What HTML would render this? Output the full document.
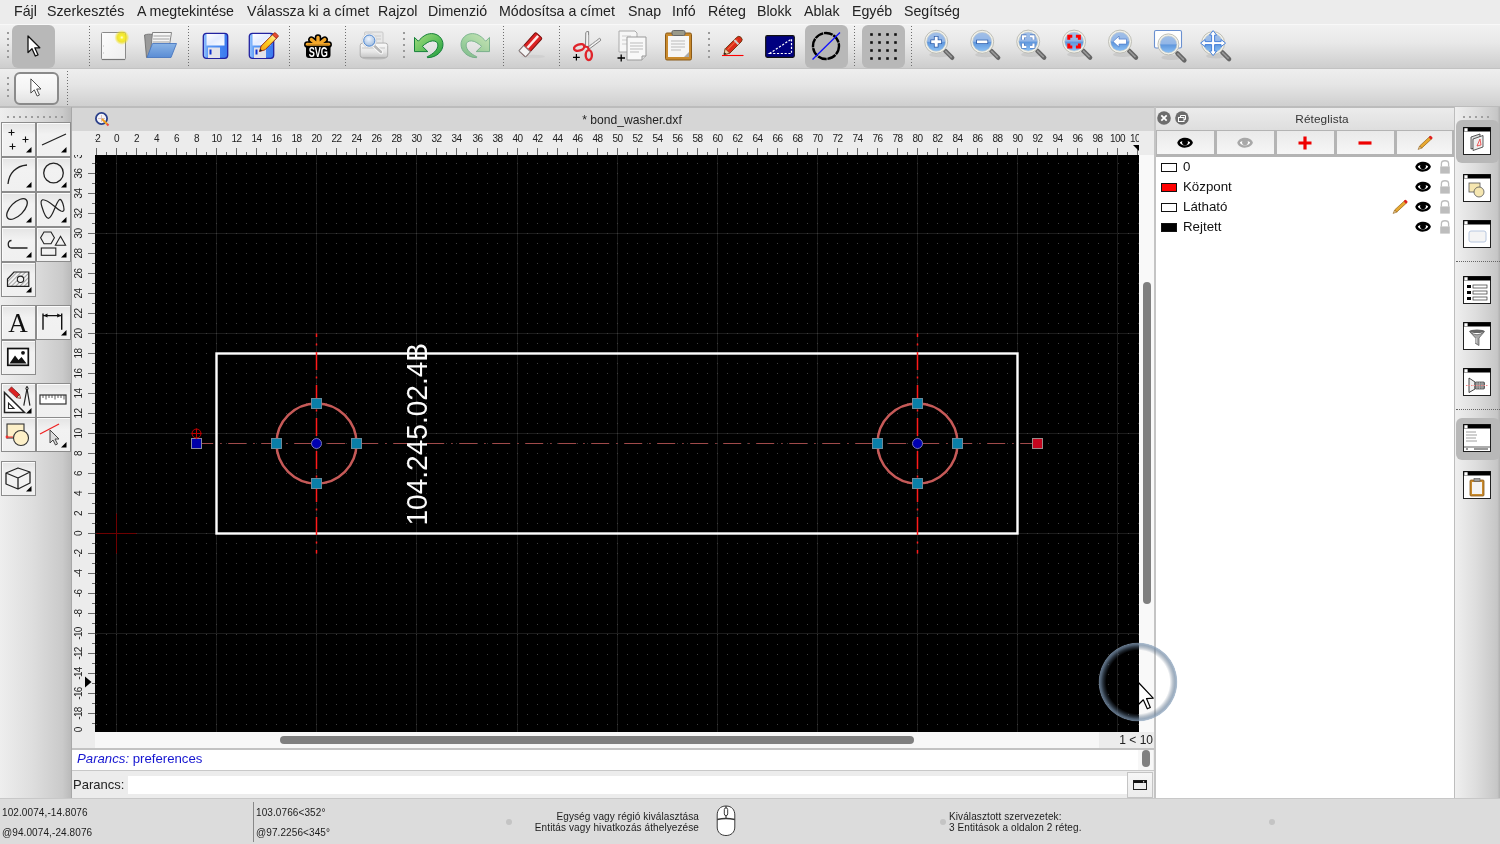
<!DOCTYPE html><html><head><meta charset="utf-8"><style>
*{margin:0;padding:0;box-sizing:border-box}
html,body{width:1500px;height:844px;overflow:hidden;will-change:transform;background:#ececec;font-family:"Liberation Sans",sans-serif;color:#222}
.a{position:absolute}
svg{position:absolute;overflow:visible}
.mb{left:0;top:0;width:1500px;height:24px;background:#ececec}
.mb span{position:absolute;top:2px;font-size:14.2px;line-height:18px;color:#222}
.tb1{left:0;top:24px;width:1500px;height:45px;background:linear-gradient(#f1f1f1,#e9e9e9 40%,#cdcdcd);border-top:1px solid #f8f8f8;border-bottom:1px solid #c2c2c2}
.tb2{left:0;top:69px;width:1500px;height:39px;background:linear-gradient(#eeeeee,#e6e6e6 40%,#cfcfcf);border-bottom:2px solid #bcbcbc}
.sep{position:absolute;width:1px;background:repeating-linear-gradient(#6e6e6e 0 1px,transparent 1px 3px)}
.grip{position:absolute;width:3px;}
.grip i{position:absolute;left:0;width:2px;height:2px;background:#9a9a9a}
.sel{position:absolute;background:#b8b8b8;border-radius:6px}

.ldock{left:0;top:108px;width:71px;height:690px;background:linear-gradient(90deg,#eeeeee,#dedede 45%,#cacaca 88%,#bababa)}
.lbtn{position:absolute;width:35px;height:35px;border:1px solid #8c8c8c;box-shadow:inset 1px 1px #fbfbfb;background:linear-gradient(#e4e4e4,#f2f2f2 35%,#f0f0f0)}
.mdi-t{left:72px;top:108px;width:1082px;height:23px;background:#d6d6d6}
</style></head><body><div class="a mb">
<span style="left:14px">Fájl</span>
<span style="left:47px">Szerkesztés</span>
<span style="left:137px">A megtekintése</span>
<span style="left:247px">Válassza ki a címet</span>
<span style="left:378px">Rajzol</span>
<span style="left:428px">Dimenzió</span>
<span style="left:499px">Módosítsa a címet</span>
<span style="left:628px">Snap</span>
<span style="left:672px">Infó</span>
<span style="left:708px">Réteg</span>
<span style="left:757px">Blokk</span>
<span style="left:804px">Ablak</span>
<span style="left:852px">Egyéb</span>
<span style="left:904px">Segítség</span>
</div>
<div class="a tb1"></div><div class="a tb2"></div>
<div class="grip" style="left:7px;top:32px;height:30px"><i style="top:0px"></i><i style="top:6px"></i><i style="top:12px"></i><i style="top:18px"></i><i style="top:24px"></i></div>
<div class="sel" style="left:12px;top:25px;width:43px;height:43px"></div>
<svg style="left:26.5px;top:34.5px" width="15" height="23" viewBox="0 0 15 23" ><path d="M1 1 L1 17.5 L5 13.8 L8.3 21 L11 19.8 L7.8 12.8 L12.8 12.8 Z" fill="#fff" stroke="#111" stroke-width="1.3" stroke-linejoin="round"/></svg>
<div class="sep" style="left:89px;top:26px;height:40px"></div>
<svg style="left:100px;top:31px" width="28" height="31" viewBox="0 0 28 31" ><defs><radialGradient id="glow"><stop offset="0" stop-color="#ffffe8"/><stop offset=".25" stop-color="#f8f030"/><stop offset=".6" stop-color="#eee020" stop-opacity=".9"/><stop offset="1" stop-color="#f0e020" stop-opacity="0"/></radialGradient>
<linearGradient id="pg" x1="0" y1="0" x2="1" y2="1"><stop offset="0" stop-color="#fdfdfd"/><stop offset="1" stop-color="#eeeeee"/></linearGradient></defs>
<rect x="1.5" y="1.5" width="24" height="27" rx="1" fill="url(#pg)" stroke="#8a8a8a"/><path d="M2 28.5 H25" stroke="#777" stroke-width="1.2"/><path d="M3 15 L4 15 M3 22 L4 22" stroke="#bbb"/><circle cx="21.8" cy="6.5" r="7.5" fill="url(#glow)"/></svg>
<svg style="left:143px;top:31px" width="34" height="29" viewBox="0 0 34 29" ><defs><linearGradient id="fo" x1="0" y1="0" x2="0" y2="1"><stop offset="0" stop-color="#8ab4e6"/><stop offset="1" stop-color="#5a8cd4"/></linearGradient></defs>
<path d="M1.5 4 C4 3 7 3 10 3.5 L9 23 L3.5 26.5 Z" fill="#9a9a9a" stroke="#666" stroke-width=".8"/><path d="M9.5 1.5 H28.5 L26.5 14 L7.5 22 Z" fill="#f6f6f6" stroke="#777" stroke-width=".9"/>
<path d="M10.5 5 H27 M10 8 H26.5 M9.5 11 H26" stroke="#bdbdbd" stroke-width="1.3"/><path d="M9.5 12.5 H33.5 L28 26.5 H4 Z" fill="url(#fo)" stroke="#4a78c0" stroke-width=".9"/></svg>
<div class="sep" style="left:188px;top:26px;height:40px"></div>
<svg style="left:202px;top:32px" width="28" height="28" viewBox="0 0 28 28" ><defs><linearGradient id="fl" x1="0" y1="0" x2="1" y2="0"><stop offset="0" stop-color="#9cc8ff"/><stop offset=".2" stop-color="#5a9af6"/><stop offset="1" stop-color="#3a78ee"/></linearGradient>
<linearGradient id="lb" x1="0" y1="0" x2="1" y2="1"><stop offset="0" stop-color="#ffffff"/><stop offset=".5" stop-color="#e4ecff"/><stop offset="1" stop-color="#fafcff"/></linearGradient></defs>
<rect x="1.3" y="1.3" width="24.4" height="25" rx="3" fill="url(#fl)" stroke="#2222a0" stroke-width="1.3"/><rect x="4.5" y="2" width="18" height="11.5" fill="url(#lb)"/>
<rect x="6" y="15.5" width="12" height="10.5" fill="#e2e2ea"/><rect x="7.5" y="17.5" width="2" height="5" fill="#1030d0"/></svg>
<svg style="left:248px;top:32px" width="32" height="28" viewBox="0 0 32 28" ><defs><linearGradient id="fl2" x1="0" y1="0" x2="1" y2="0"><stop offset="0" stop-color="#9cc8ff"/><stop offset=".2" stop-color="#5a9af6"/><stop offset="1" stop-color="#3a78ee"/></linearGradient>
<linearGradient id="lb2" x1="0" y1="0" x2="1" y2="1"><stop offset="0" stop-color="#ffffff"/><stop offset=".5" stop-color="#e4ecff"/><stop offset="1" stop-color="#fafcff"/></linearGradient></defs>
<rect x="1.3" y="1.3" width="24.4" height="25" rx="3" fill="url(#fl2)" stroke="#2222a0" stroke-width="1.3"/><rect x="4.5" y="2" width="18" height="11.5" fill="url(#lb2)"/>
<rect x="6" y="15.5" width="12" height="10.5" fill="#e2e2ea"/><rect x="7.5" y="17.5" width="2" height="5" fill="#1030d0"/><defs><linearGradient id="pe" x1="0" y1="0" x2="1" y2="0"><stop offset="0" stop-color="#f59a10"/><stop offset=".6" stop-color="#ffd020"/><stop offset="1" stop-color="#fff0a0"/></linearGradient></defs>
<g transform="translate(11.5 19.5) rotate(-45)"><path d="M0 0 L5 -2.7 H22 V2.7 H5 Z" fill="url(#pe)" stroke="#9a2a10" stroke-width=".9"/><path d="M0 0 L2.5 -1.3 V1.3 Z" fill="#222"/><rect x="21" y="-2.7" width="3.5" height="5.4" rx="1" fill="#e84a30" stroke="#9a2a10" stroke-width=".8"/></g></svg>
<div class="sep" style="left:289px;top:26px;height:40px"></div>
<svg style="left:305px;top:33px" width="27" height="26" viewBox="0 0 27 26" ><g stroke-linecap="round"><path d="M13 12 L13 4.4 M13 12 L6.4 6.6 M13 12 L19.7 6.6 M13 12 L2.3 11.4 M13 12 L23.7 11.4" stroke="#000" stroke-width="6.5"/>
<path d="M13 12 L13 4.4 M13 12 L6.4 6.6 M13 12 L19.7 6.6 M13 12 L2.3 11.4 M13 12 L23.7 11.4" stroke="#f5a82a" stroke-width="3.4"/></g>
<rect x="1" y="11.5" width="24.5" height="13.5" rx="3" fill="#000"/><path d="M2 12 H24.5" stroke="#f5a82a" stroke-width="1.4"/>
<text x="0" y="0" transform="translate(13.3 24) scale(0.66 1)" text-anchor="middle" font-family="Liberation Sans" font-weight="bold" font-size="13.8" fill="#fff">SVG</text></svg>
<div class="sep" style="left:345px;top:26px;height:40px"></div>
<svg style="left:359px;top:31px" width="30" height="29" viewBox="0 0 30 29" ><defs><linearGradient id="pr" x1="0" y1="0" x2="0" y2="1"><stop offset="0" stop-color="#fbfbfb"/><stop offset=".6" stop-color="#e6e6e6"/><stop offset="1" stop-color="#c4c4c4"/></linearGradient>
<radialGradient id="lens2" cx=".45" cy=".35" r=".7"><stop offset="0" stop-color="#f0f6ff"/><stop offset="1" stop-color="#9ab8dc"/></radialGradient></defs>
<ellipse cx="15" cy="27.3" rx="12" ry="1.2" fill="#aaa" opacity=".6"/>
<rect x="5.6" y="1" width="18.4" height="13" rx="1" fill="#e8e8e8" stroke="#c8c8c8"/><path d="M13 5 H22 M13 8 H22" stroke="#ccc"/>
<rect x="1.2" y="12.1" width="27.5" height="14.6" rx="2.5" fill="url(#pr)" stroke="#a8a8a8" stroke-width=".9"/><path d="M3 17 H26" stroke="#bbb" stroke-width=".8"/>
<path d="M15 14.5 L22 21" stroke="#fff" stroke-width="4.4" stroke-linecap="round"/><path d="M15 14.5 L22 21" stroke="#b8b8b8" stroke-width="2.6" stroke-linecap="round"/>
<circle cx="10.3" cy="9.6" r="7.3" fill="#f4f4f4" stroke="#d0d0d0" stroke-width=".8"/><circle cx="10.3" cy="9.6" r="5.6" fill="url(#lens2)" stroke="#4a84d0" stroke-width="1"/></svg>
<div class="grip" style="left:403px;top:32px;height:30px"><i style="top:0px"></i><i style="top:6px"></i><i style="top:12px"></i><i style="top:18px"></i><i style="top:24px"></i></div>
<svg style="left:413px;top:32px" width="31" height="28" viewBox="0 0 31 28" ><defs><linearGradient id="ug" x1="0" y1="0" x2="1" y2="1"><stop offset="0" stop-color="#a6dc80"/><stop offset=".55" stop-color="#5cbf5a"/><stop offset="1" stop-color="#1f9a3c"/></linearGradient></defs>
<path d="M1.5 5.4 L5.3 9.2 C9 5 13 1.6 18.6 1.6 C25 1.6 30 6.5 30 12.4 C30 19 24 25.5 14.5 25.7 L14.2 24.8 C20 22 24.9 18 24.9 13 C24.9 10 22.5 8.9 19.5 8.9 C16 8.9 12 12 9.4 14.3 L14.8 19.6 L1.5 19.6 Z" fill="url(#ug)" stroke="#15803a" stroke-width="1" stroke-linejoin="round"/></svg>
<svg style="left:460px;top:32px" width="31" height="28" viewBox="0 0 31 28" ><g transform="translate(31,0) scale(-1,1)" opacity="0.5"><defs><linearGradient id="ug2" x1="0" y1="0" x2="1" y2="1"><stop offset="0" stop-color="#a6dc80"/><stop offset=".55" stop-color="#5cbf5a"/><stop offset="1" stop-color="#1f9a3c"/></linearGradient></defs>
<path d="M1.5 5.4 L5.3 9.2 C9 5 13 1.6 18.6 1.6 C25 1.6 30 6.5 30 12.4 C30 19 24 25.5 14.5 25.7 L14.2 24.8 C20 22 24.9 18 24.9 13 C24.9 10 22.5 8.9 19.5 8.9 C16 8.9 12 12 9.4 14.3 L14.8 19.6 L1.5 19.6 Z" fill="url(#ug2)" stroke="#15803a" stroke-width="1" stroke-linejoin="round"/></g></svg>
<div class="sep" style="left:503px;top:26px;height:40px"></div>
<svg style="left:516px;top:32px" width="30" height="28" viewBox="0 0 30 28" ><ellipse cx="17" cy="24.5" rx="12" ry="1.8" fill="#d0d0d0"/><g transform="rotate(-48 14 14)"><rect x="3" y="9" width="25" height="9" rx="1.5" fill="#d22" stroke="#7a1010"/>
<rect x="3" y="9" width="7" height="9" fill="#f4f4f4" stroke="#888"/><rect x="11" y="12" width="16" height="2.5" fill="#fff" opacity=".9"/></g></svg>
<div class="sep" style="left:559px;top:26px;height:40px"></div>
<svg style="left:571px;top:30px" width="32" height="32" viewBox="0 0 32 32" ><path d="M14.5 16.5 L14.8 2.5 Q15.5 1.2 17.6 1.6 L17.6 17 Z" fill="#f4f4f4" stroke="#666" stroke-width=".8"/><path d="M16.5 17.5 L28.6 8.2 Q29.8 8.8 29.6 10.5 L17.5 19.5 Z" fill="#f4f4f4" stroke="#666" stroke-width=".8"/>
<path d="M17.6 5 V16 M19 15 L28.5 9" stroke="#bbb" stroke-width=".7"/>
<ellipse cx="8.2" cy="17.5" rx="5.3" ry="3.1" fill="none" stroke="#e0242b" stroke-width="2.4" transform="rotate(-18 8.2 17.5)"/><path d="M12.5 16.5 L17 17" stroke="#e0242b" stroke-width="2.2"/>
<ellipse cx="17.8" cy="25.1" rx="3.1" ry="5" fill="none" stroke="#e0242b" stroke-width="2.4"/><path d="M17 17 L17.8 20" stroke="#e0242b" stroke-width="2.2"/>
<path d="M2 27.3 H8.8 M5.4 24 V30.6" stroke="#000" stroke-width="1.2"/></svg>
<svg style="left:617px;top:30px" width="32" height="32" viewBox="0 0 32 32" ><path d="M2 1 H18 L20 3 V22 H2 Z" fill="#f6f6f6" stroke="#aaa"/><path d="M5 6 H14 M5 10 H14 M5 14 H14" stroke="#ccc"/>
<path d="M10 7 H29 V26 L25 30 H10 Z" fill="#f8f8f8" stroke="#999"/><path d="M13 13 H26 M13 16 H26 M13 19 H26 M13 22 H22" stroke="#bbb"/><path d="M25 30 V26 H29" fill="#ddd" stroke="#999"/>
<path d="M0.5 28 H8 M4.2 24.5 V31.5" stroke="#000" stroke-width="1.3"/></svg>
<svg style="left:664px;top:29px" width="30" height="33" viewBox="0 0 30 33" ><rect x="1.5" y="4" width="26" height="27" rx="1.5" fill="#c98a2d" stroke="#8a5a18"/><rect x="4" y="7" width="21" height="21" fill="#f6f6f6"/>
<path d="M7 12 H21 M7 15 H21 M7 18 H21 M7 21 H17" stroke="#bbb"/><path d="M20 28 L25 23 V28 Z" fill="#aaa"/><rect x="8" y="1.5" width="13" height="5" rx="1.5" fill="#9a9a8a" stroke="#666"/></svg>
<div class="grip" style="left:708px;top:32px;height:30px"><i style="top:0px"></i><i style="top:6px"></i><i style="top:12px"></i><i style="top:18px"></i><i style="top:24px"></i></div>
<svg style="left:721px;top:34px" width="26" height="24" viewBox="0 0 26 24" ><path d="M1 21.5 H22.5" stroke="#f00" stroke-width="1.1"/><g transform="translate(3 20.5) rotate(-45)"><path d="M0 0 L5 -3.2 H21 A3.2 3.2 0 0 1 21 3.2 H5 Z" fill="#dc2a1a" stroke="#6a3a10" stroke-width=".9"/>
<path d="M6 -1 H20" stroke="#f06a3a" stroke-width="1.2"/><rect x="16.5" y="-3" width="2" height="6" fill="#cfcfcf"/><path d="M0 0 L5 -3.2 V3.2 Z" fill="#f2d2a8" stroke="#6a3a10" stroke-width=".6"/><path d="M0 0 L2 -1.2 V1.2 Z" fill="#111"/></g></svg>
<svg style="left:765px;top:35px" width="30" height="23" viewBox="0 0 30 23" ><rect x="0.7" y="0.7" width="28.6" height="21.6" rx="1.5" fill="#000080" stroke="#111" stroke-width="1.2"/><path d="M4.5 18.5 L26.5 4 L26.5 18.5 Z" fill="none" stroke="#fff" stroke-width="1.2" stroke-dasharray="2.2 1.6"/></svg>
<div class="sel" style="left:805px;top:25px;width:43px;height:43px"></div>
<svg style="left:805px;top:25px" width="43" height="43" viewBox="0 0 43 43" ><circle cx="21" cy="21" r="13" fill="none" stroke="#000" stroke-width="2.4" stroke-dasharray="9 0.8"/><path d="M7.5 34.5 L35 7.5" stroke="#1010ff" stroke-width="1.3"/></svg>
<div class="sep" style="left:854px;top:26px;height:40px"></div>
<div class="sel" style="left:862px;top:25px;width:43px;height:43px"></div>
<svg style="left:862px;top:25px" width="43" height="43" viewBox="0 0 43 43" ><rect x="8.2" y="8.2" width="2.6" height="2.6" fill="#111"/><rect x="8.2" y="16.2" width="2.6" height="2.6" fill="#111"/><rect x="8.2" y="24.2" width="2.6" height="2.6" fill="#111"/><rect x="8.2" y="32.2" width="2.6" height="2.6" fill="#111"/><rect x="16.2" y="8.2" width="2.6" height="2.6" fill="#111"/><rect x="16.2" y="16.2" width="2.6" height="2.6" fill="#111"/><rect x="16.2" y="24.2" width="2.6" height="2.6" fill="#111"/><rect x="16.2" y="32.2" width="2.6" height="2.6" fill="#111"/><rect x="24.2" y="8.2" width="2.6" height="2.6" fill="#111"/><rect x="24.2" y="16.2" width="2.6" height="2.6" fill="#111"/><rect x="24.2" y="24.2" width="2.6" height="2.6" fill="#111"/><rect x="24.2" y="32.2" width="2.6" height="2.6" fill="#111"/><rect x="32.2" y="8.2" width="2.6" height="2.6" fill="#111"/><rect x="32.2" y="16.2" width="2.6" height="2.6" fill="#111"/><rect x="32.2" y="24.2" width="2.6" height="2.6" fill="#111"/><rect x="32.2" y="32.2" width="2.6" height="2.6" fill="#111"/></svg>
<div class="sep" style="left:911px;top:26px;height:40px"></div>
<svg style="left:0;top:0" width="1500" height="70" viewBox="0 0 1500 70"><defs><linearGradient id="lg" x1="0" y1="0" x2="0" y2="1"><stop offset="0" stop-color="#8eb2e2"/><stop offset=".48" stop-color="#7aa6e2"/><stop offset=".52" stop-color="#5e96dc"/><stop offset="1" stop-color="#8cc0f4"/></linearGradient></defs><g transform="translate(936.2 41.8)"><ellipse cx="3" cy="13" rx="10" ry="2.5" fill="#999" opacity=".25"/><path d="M9 9 L16 16" stroke="#666" stroke-width="4.4" stroke-linecap="round"/><path d="M9.5 9.5 L15.5 15.5" stroke="#9a9a9a" stroke-width="1.6" stroke-linecap="round" stroke-dasharray="1.2 1"/>
<circle r="11.5" fill="#f2f2ea" stroke="#b8b8b0" stroke-width=".9"/><circle r="9.5" fill="url(#lg)" stroke="#c8c8c0" stroke-width=".5"/><path d="M-9.5 0 A9.5 9.5 0 0 1 9.5 0 Z" fill="#fff" opacity=".18"/><path d="M-5.8 0 H5.8 M0 -5.8 V5.8" stroke="#2a5aa8" stroke-width="4.6"/><path d="M-5 0 H5 M0 -5 V5" stroke="#fff" stroke-width="3"/></g><g transform="translate(982.2 41.8)"><ellipse cx="3" cy="13" rx="10" ry="2.5" fill="#999" opacity=".25"/><path d="M9 9 L16 16" stroke="#666" stroke-width="4.4" stroke-linecap="round"/><path d="M9.5 9.5 L15.5 15.5" stroke="#9a9a9a" stroke-width="1.6" stroke-linecap="round" stroke-dasharray="1.2 1"/>
<circle r="11.5" fill="#f2f2ea" stroke="#b8b8b0" stroke-width=".9"/><circle r="9.5" fill="url(#lg)" stroke="#c8c8c0" stroke-width=".5"/><path d="M-9.5 0 A9.5 9.5 0 0 1 9.5 0 Z" fill="#fff" opacity=".18"/><path d="M-6 0 H6" stroke="#2a5aa8" stroke-width="4.2"/><path d="M-5.2 0 H5.2" stroke="#fff" stroke-width="2.8"/></g><g transform="translate(1028.2 41.6)"><ellipse cx="3" cy="13" rx="10" ry="2.5" fill="#999" opacity=".25"/><path d="M9 9 L16 16" stroke="#666" stroke-width="4.4" stroke-linecap="round"/><path d="M9.5 9.5 L15.5 15.5" stroke="#9a9a9a" stroke-width="1.6" stroke-linecap="round" stroke-dasharray="1.2 1"/>
<circle r="11.5" fill="#f2f2ea" stroke="#b8b8b0" stroke-width=".9"/><circle r="9.5" fill="url(#lg)" stroke="#c8c8c0" stroke-width=".5"/><path d="M-9.5 0 A9.5 9.5 0 0 1 9.5 0 Z" fill="#fff" opacity=".18"/><path d="M-5.3 -1.8 V-5.3 H-1.8 M1.8 -5.3 H5.3 V-1.8 M5.3 1.8 V5.3 H1.8 M-1.8 5.3 H-5.3 V1.8" stroke="#3a6ab8" stroke-width="3.4" fill="none"/><path d="M-5.3 -1.8 V-5.3 H-1.8 M1.8 -5.3 H5.3 V-1.8 M5.3 1.8 V5.3 H1.8 M-1.8 5.3 H-5.3 V1.8" stroke="#fff" stroke-width="2.2" fill="none"/></g><g transform="translate(1074.1 41.6)"><ellipse cx="3" cy="13" rx="10" ry="2.5" fill="#999" opacity=".25"/><path d="M9 9 L16 16" stroke="#666" stroke-width="4.4" stroke-linecap="round"/><path d="M9.5 9.5 L15.5 15.5" stroke="#9a9a9a" stroke-width="1.6" stroke-linecap="round" stroke-dasharray="1.2 1"/>
<circle r="11.5" fill="#f2f2ea" stroke="#b8b8b0" stroke-width=".9"/><circle r="9.5" fill="url(#lg)" stroke="#c8c8c0" stroke-width=".5"/><path d="M-9.5 0 A9.5 9.5 0 0 1 9.5 0 Z" fill="#fff" opacity=".18"/><path d="M-5.3 -1.8 V-5.3 H-1.8 M1.8 -5.3 H5.3 V-1.8 M5.3 1.8 V5.3 H1.8 M-1.8 5.3 H-5.3 V1.8" stroke="#f00" stroke-width="3" fill="none"/></g><g transform="translate(1120 41.6)"><ellipse cx="3" cy="13" rx="10" ry="2.5" fill="#999" opacity=".25"/><path d="M9 9 L16 16" stroke="#666" stroke-width="4.4" stroke-linecap="round"/><path d="M9.5 9.5 L15.5 15.5" stroke="#9a9a9a" stroke-width="1.6" stroke-linecap="round" stroke-dasharray="1.2 1"/>
<circle r="11.5" fill="#f2f2ea" stroke="#b8b8b0" stroke-width=".9"/><circle r="9.5" fill="url(#lg)" stroke="#c8c8c0" stroke-width=".5"/><path d="M-9.5 0 A9.5 9.5 0 0 1 9.5 0 Z" fill="#fff" opacity=".18"/><path d="M-7 0 L-1 -5.5 V-2.5 H6.5 V2.5 H-1 V5.5 Z" fill="#fff" stroke="#4a7ac8" stroke-width=".7"/></g><rect x="1154.5" y="30.5" width="27" height="17.5" rx="1.5" fill="#fff" stroke="#6a90d0" stroke-width="1.1"/><g transform="translate(1168.4 44.4)"><ellipse cx="3" cy="13" rx="10" ry="2.5" fill="#999" opacity=".25"/><path d="M9 9 L16 16" stroke="#666" stroke-width="4.4" stroke-linecap="round"/><path d="M9.5 9.5 L15.5 15.5" stroke="#9a9a9a" stroke-width="1.6" stroke-linecap="round" stroke-dasharray="1.2 1"/>
<circle r="10.5" fill="#f2f2ea" stroke="#b8b8b0" stroke-width=".9"/><circle r="8.5" fill="url(#lg)" stroke="#c8c8c0" stroke-width=".5"/><path d="M-8.5 0 A8.5 8.5 0 0 1 8.5 0 Z" fill="#fff" opacity=".18"/></g><g transform="translate(1213.1 43.1)"><ellipse cx="3" cy="13" rx="10" ry="2.5" fill="#999" opacity=".25"/><path d="M9 9 L16 16" stroke="#666" stroke-width="4.4" stroke-linecap="round"/><path d="M9.5 9.5 L15.5 15.5" stroke="#9a9a9a" stroke-width="1.6" stroke-linecap="round" stroke-dasharray="1.2 1"/>
<circle r="11.5" fill="#f2f2ea" stroke="#b8b8b0" stroke-width=".9"/><circle r="9.5" fill="url(#lg)" stroke="#c8c8c0" stroke-width=".5"/><path d="M-9.5 0 A9.5 9.5 0 0 1 9.5 0 Z" fill="#fff" opacity=".18"/><path d="M0 -12.5 L-3.5 -8 H-1.5 V-1.5 H-8 V-3.5 L-12.5 0 L-8 3.5 V1.5 H-1.5 V8 H-3.5 L0 12.5 L3.5 8 H1.5 V1.5 H8 V3.5 L12.5 0 L8 -3.5 V-1.5 H1.5 V-8 H3.5 Z" fill="#fff" stroke="#3a78d8" stroke-width=".9" stroke-linejoin="round"/></g></svg>
<div class="grip" style="left:7px;top:77px;height:24px"><i style="top:0px"></i><i style="top:6px"></i><i style="top:12px"></i><i style="top:18px"></i></div>
<div class="a" style="left:14px;top:72px;width:45px;height:33px;border:2px solid #8a8a8a;border-radius:6px;background:linear-gradient(#fbfbfb,#f4f4f4 50%,#e2e2e2)"></div>
<svg style="left:29.5px;top:78px" width="15" height="23" viewBox="0 0 15 23" ><g transform="scale(0.86)"><path d="M1 1 L1 17.5 L5 13.8 L8.3 21 L11 19.8 L7.8 12.8 L12.8 12.8 Z" fill="#fff" stroke="#444" stroke-width="1.1" stroke-linejoin="round"/></g></svg>
<div class="sep" style="left:67px;top:71px;height:34px"></div>
<div class="a ldock"></div>
<div class="a" style="left:71px;top:107px;width:1px;height:691px;background:#a8a8a8"></div>
<div class="a" style="left:7px;top:116px;width:2px;height:2px;background:#9c9c9c"></div>
<div class="a" style="left:13px;top:116px;width:2px;height:2px;background:#9c9c9c"></div>
<div class="a" style="left:19px;top:116px;width:2px;height:2px;background:#9c9c9c"></div>
<div class="a" style="left:25px;top:116px;width:2px;height:2px;background:#9c9c9c"></div>
<div class="a" style="left:31px;top:116px;width:2px;height:2px;background:#9c9c9c"></div>
<div class="a" style="left:37px;top:116px;width:2px;height:2px;background:#9c9c9c"></div>
<div class="a" style="left:43px;top:116px;width:2px;height:2px;background:#9c9c9c"></div>
<div class="a" style="left:49px;top:116px;width:2px;height:2px;background:#9c9c9c"></div>
<div class="a" style="left:55px;top:116px;width:2px;height:2px;background:#9c9c9c"></div>
<div class="a" style="left:61px;top:116px;width:2px;height:2px;background:#9c9c9c"></div>
<div class="lbtn" style="left:1px;top:122px"></div><svg style="left:1px;top:122px" width="35" height="35" viewBox="0 0 35 35" ><path d="M7.5 10.5 H13.5 M10.5 7.5 V13.5 M21.5 17.5 H27.5 M24.5 14.5 V20.5 M8.5 24.5 H14.5 M11.5 21.5 V27.5" stroke="#111" stroke-width="1.1"/><path d="M30.5 25 L30.5 30.5 L25 30.5 Z" fill="#000"/></svg>
<div class="lbtn" style="left:36px;top:122px"></div><svg style="left:36px;top:122px" width="35" height="35" viewBox="0 0 35 35" ><path d="M6 23 L30 12" stroke="#222" stroke-width="1.3"/><path d="M30.5 25 L30.5 30.5 L25 30.5 Z" fill="#000"/></svg>
<div class="lbtn" style="left:1px;top:157px"></div><svg style="left:1px;top:157px" width="35" height="35" viewBox="0 0 35 35" ><path d="M7 27 C8 16 15 9 26 8" fill="none" stroke="#222" stroke-width="1.3"/><path d="M30.5 25 L30.5 30.5 L25 30.5 Z" fill="#000"/></svg>
<div class="lbtn" style="left:36px;top:157px"></div><svg style="left:36px;top:157px" width="35" height="35" viewBox="0 0 35 35" ><circle cx="17.5" cy="16" r="9.8" fill="none" stroke="#222" stroke-width="1.3"/><path d="M30.5 25 L30.5 30.5 L25 30.5 Z" fill="#000"/></svg>
<div class="lbtn" style="left:1px;top:192px"></div><svg style="left:1px;top:192px" width="35" height="35" viewBox="0 0 35 35" ><ellipse cx="16" cy="17" rx="13" ry="6.5" transform="rotate(-45 16 17)" fill="none" stroke="#222" stroke-width="1.3"/><path d="M30.5 25 L30.5 30.5 L25 30.5 Z" fill="#000"/></svg>
<div class="lbtn" style="left:36px;top:192px"></div><svg style="left:36px;top:192px" width="35" height="35" viewBox="0 0 35 35" ><path d="M6.5 7.8 C4.5 8.5 5 12 6 15 C7.5 20 9.5 26.3 12.4 26.3 C15 26.3 17.5 19.5 19.3 15 C21 11 22.5 7.3 24 7.3 C26 7.3 28 14.5 28 17.5 C28 19.5 26.5 19.6 25 19 C22 17.5 19.3 15 19.3 15 C15 11.5 10 7 6.5 7.8 Z" fill="none" stroke="#222" stroke-width="1.2"/><path d="M30.5 25 L30.5 30.5 L25 30.5 Z" fill="#000"/></svg>
<div class="lbtn" style="left:1px;top:227px"></div><svg style="left:1px;top:227px" width="35" height="35" viewBox="0 0 35 35" ><path d="M10.5 13.5 C6 13.5 6.3 21 10.5 21 H26.5" fill="none" stroke="#222" stroke-width="1.3"/><path d="M30.5 25 L30.5 30.5 L25 30.5 Z" fill="#000"/></svg>
<div class="lbtn" style="left:36px;top:227px"></div><svg style="left:36px;top:227px" width="35" height="35" viewBox="0 0 35 35" ><path d="M8 5 H15 L18.4 10.8 L15 16.7 H8 L4.6 10.8 Z" fill="none" stroke="#222" stroke-width="1.1"/><path d="M24.5 9.3 L29.6 18.3 H19.4 Z" fill="none" stroke="#222" stroke-width="1.1"/><rect x="5.3" y="21" width="14.5" height="7.3" fill="none" stroke="#222" stroke-width="1.1"/><path d="M30.5 25 L30.5 30.5 L25 30.5 Z" fill="#000"/></svg>
<div class="lbtn" style="left:1px;top:262px"></div><svg style="left:1px;top:262px" width="35" height="35" viewBox="0 0 35 35" ><defs><pattern id="hp" width="3" height="3" patternUnits="userSpaceOnUse" patternTransform="rotate(45)"><path d="M0 0 V3" stroke="#333" stroke-width=".8"/></pattern></defs>
<path d="M6.5 17 L13 10 H27.8 V24.3 H6.5 Z" fill="url(#hp)" stroke="#222" stroke-width="1.2"/><circle cx="19.5" cy="17.3" r="3.2" fill="#f0f0f0" stroke="#222" stroke-width="1.1"/><path d="M30.5 25 L30.5 30.5 L25 30.5 Z" fill="#000"/></svg>
<div class="lbtn" style="left:1px;top:305px"></div><svg style="left:1px;top:305px" width="35" height="35" viewBox="0 0 35 35" ><text x="17" y="27" text-anchor="middle" font-family="Liberation Serif" font-size="27" fill="#111">A</text></svg>
<div class="lbtn" style="left:36px;top:305px"></div><svg style="left:36px;top:305px" width="35" height="35" viewBox="0 0 35 35" ><path d="M7 8.6 V24.8 M25.7 8.6 V24.8 M7.5 10.6 H25.2" stroke="#111" stroke-width="1.4"/><path d="M7.5 10.6 L11.5 8.6 V12.6 Z M25.2 10.6 L21.2 8.6 V12.6 Z" fill="#111"/><path d="M30.5 25 L30.5 30.5 L25 30.5 Z" fill="#000"/></svg>
<div class="lbtn" style="left:1px;top:340px"></div><svg style="left:1px;top:340px" width="35" height="35" viewBox="0 0 35 35" ><rect x="6.8" y="8.5" width="20.5" height="16.8" fill="#fff" stroke="#111" stroke-width="1.7"/><path d="M8.5 23.5 L14 15.5 L17.5 20 L20.5 17 L25.5 23.5 Z" fill="#111"/><circle cx="22" cy="12.8" r="1.9" fill="#111"/></svg>
<div class="lbtn" style="left:1px;top:383px"></div><svg style="left:1px;top:383px" width="35" height="35" viewBox="0 0 35 35" ><path d="M3.5 29.4 L3.5 9.5 L23.5 29.4 Z" fill="#fff" stroke="#222" stroke-width="1.5"/><path d="M7.5 25.5 V20 L13 25.5 Z" fill="none" stroke="#222" stroke-width="1.1"/>
<g transform="translate(9 5.5) rotate(43)"><rect x="0" y="-2.2" width="11" height="4.4" fill="#d22" stroke="#611" stroke-width=".7"/><path d="M11 -2.2 L14.5 0 L11 2.2 Z" fill="#eec" stroke="#611" stroke-width=".7"/></g>
<path d="M26 5.5 L22.8 22.7 M26 5.5 L28.9 22.7 M26 3 V5" stroke="#222" stroke-width="1.2" fill="none"/><circle cx="26" cy="5.5" r="1.3" fill="none" stroke="#222" stroke-width=".9"/><path d="M30.5 25 L30.5 30.5 L25 30.5 Z" fill="#000"/></svg>
<div class="lbtn" style="left:36px;top:383px"></div><svg style="left:36px;top:383px" width="35" height="35" viewBox="0 0 35 35" ><rect x="4" y="12" width="26" height="9" fill="#fff" stroke="#333" stroke-width="1.2"/><path d="M7 12 V15 M10 12 V16.5 M13 12 V15 M16 12 V15 M19 12 V16.5 M22 12 V15 M25 12 V15 M28 12 V16.5" stroke="#333" stroke-width=".8"/></svg>
<div class="lbtn" style="left:1px;top:417px"></div><svg style="left:1px;top:417px" width="35" height="35" viewBox="0 0 35 35" ><rect x="6" y="7" width="17" height="14" fill="#fdf0c8" stroke="#333" stroke-width="1.1"/><circle cx="20" cy="21" r="7.5" fill="#fdf0c8" stroke="#333" stroke-width="1.1"/><circle cx="6" cy="20" r="1.4" fill="#e33"/><path d="M6 20 H12" stroke="#e33"/></svg>
<div class="lbtn" style="left:36px;top:417px"></div><svg style="left:36px;top:417px" width="35" height="35" viewBox="0 0 35 35" ><path d="M4 17 L23 7" stroke="#e22" stroke-width="1.3"/><path d="M14 13 L14 26 L17 23 L19.5 28 L21.5 27 L19 22 L23 22 Z" fill="#ddd" stroke="#444" stroke-width="1"/><path d="M30.5 25 L30.5 30.5 L25 30.5 Z" fill="#000"/></svg>
<div class="lbtn" style="left:1px;top:461px"></div><svg style="left:1px;top:461px" width="35" height="35" viewBox="0 0 35 35" ><path d="M5 12 L17 7 L29 11 L29 22 L17 28 L5 23 Z M5 12 L17 17 L29 11 M17 17 V28" fill="none" stroke="#222" stroke-width="1.3" stroke-linejoin="round"/><path d="M30.5 25 L30.5 30.5 L25 30.5 Z" fill="#000"/></svg>
<div class="a mdi-t"></div>
<svg style="left:95px;top:112px" width="14" height="14" viewBox="0 0 14 14" ><circle cx="6.5" cy="6.5" r="5.6" fill="#f4f4f8" stroke="#2a3f8a" stroke-width="1.8"/><path d="M3 6.5 H10 M6.5 3 V10" stroke="#caa" stroke-width=".7"/><path d="M7 7 L12.5 12.5" stroke="#f0a020" stroke-width="2"/><path d="M12 12 L13.5 13.5" stroke="#e44" stroke-width="2"/></svg>
<div class="a" style="left:110px;top:113px;width:1044px;text-align:center;font-size:12.1px;line-height:14px;color:#222">* bond_washer.dxf</div>
<div class="a" style="left:72px;top:131px;width:1082px;height:24px;background:#ececec"></div>
<div class="a" style="left:72px;top:155px;width:23px;height:593px;background:#ececec"></div>
<svg style="left:0;top:0" width="1500" height="844" viewBox="0 0 1500 844"><defs><clipPath id="hrc"><rect x="95" y="131" width="1044" height="24"/></clipPath><clipPath id="vrc"><rect x="72" y="155" width="23" height="577"/></clipPath></defs>
<g clip-path="url(#hrc)"><path d="M96.5 148V155 M106.5 152V155 M116.5 148V155 M126.5 152V155 M136.5 148V155 M146.5 152V155 M156.5 148V155 M166.5 152V155 M176.5 148V155 M186.5 152V155 M196.5 148V155 M206.5 152V155 M216.5 148V155 M226.5 152V155 M236.5 148V155 M246.5 152V155 M256.5 148V155 M266.5 152V155 M276.5 148V155 M286.5 152V155 M296.5 148V155 M306.5 152V155 M316.5 148V155 M326.5 152V155 M336.5 148V155 M346.5 152V155 M356.5 148V155 M366.5 152V155 M376.5 148V155 M386.5 152V155 M396.5 148V155 M406.5 152V155 M416.5 148V155 M426.5 152V155 M436.5 148V155 M446.5 152V155 M456.5 148V155 M466.5 152V155 M477.5 148V155 M487.5 152V155 M497.5 148V155 M507.5 152V155 M517.5 148V155 M527.5 152V155 M537.5 148V155 M547.5 152V155 M557.5 148V155 M567.5 152V155 M577.5 148V155 M587.5 152V155 M597.5 148V155 M607.5 152V155 M617.5 148V155 M627.5 152V155 M637.5 148V155 M647.5 152V155 M657.5 148V155 M667.5 152V155 M677.5 148V155 M687.5 152V155 M697.5 148V155 M707.5 152V155 M717.5 148V155 M727.5 152V155 M737.5 148V155 M747.5 152V155 M757.5 148V155 M767.5 152V155 M777.5 148V155 M787.5 152V155 M797.5 148V155 M807.5 152V155 M817.5 148V155 M827.5 152V155 M837.5 148V155 M847.5 152V155 M857.5 148V155 M867.5 152V155 M877.5 148V155 M887.5 152V155 M897.5 148V155 M907.5 152V155 M917.5 148V155 M927.5 152V155 M937.5 148V155 M947.5 152V155 M957.5 148V155 M967.5 152V155 M977.5 148V155 M987.5 152V155 M997.5 148V155 M1007.5 152V155 M1017.5 148V155 M1027.5 152V155 M1037.5 148V155 M1047.5 152V155 M1057.5 148V155 M1067.5 152V155 M1077.5 148V155 M1087.5 152V155 M1097.5 148V155 M1107.5 152V155 M1117.5 148V155 M1127.5 152V155 M1137.5 148V155" stroke="#6a6a6a" stroke-width="1"/>
<g font-family="Liberation Sans" font-size="10" fill="#222" text-anchor="middle" letter-spacing="-0.6"><text x="96.5" y="142">-2</text><text x="116.5" y="142">0</text><text x="136.5" y="142">2</text><text x="156.5" y="142">4</text><text x="176.5" y="142">6</text><text x="196.5" y="142">8</text><text x="216.5" y="142">10</text><text x="236.5" y="142">12</text><text x="256.5" y="142">14</text><text x="276.5" y="142">16</text><text x="296.5" y="142">18</text><text x="316.5" y="142">20</text><text x="336.5" y="142">22</text><text x="356.5" y="142">24</text><text x="376.5" y="142">26</text><text x="396.5" y="142">28</text><text x="416.5" y="142">30</text><text x="436.5" y="142">32</text><text x="456.5" y="142">34</text><text x="477.5" y="142">36</text><text x="497.5" y="142">38</text><text x="517.5" y="142">40</text><text x="537.5" y="142">42</text><text x="557.5" y="142">44</text><text x="577.5" y="142">46</text><text x="597.5" y="142">48</text><text x="617.5" y="142">50</text><text x="637.5" y="142">52</text><text x="657.5" y="142">54</text><text x="677.5" y="142">56</text><text x="697.5" y="142">58</text><text x="717.5" y="142">60</text><text x="737.5" y="142">62</text><text x="757.5" y="142">64</text><text x="777.5" y="142">66</text><text x="797.5" y="142">68</text><text x="817.5" y="142">70</text><text x="837.5" y="142">72</text><text x="857.5" y="142">74</text><text x="877.5" y="142">76</text><text x="897.5" y="142">78</text><text x="917.5" y="142">80</text><text x="937.5" y="142">82</text><text x="957.5" y="142">84</text><text x="977.5" y="142">86</text><text x="997.5" y="142">88</text><text x="1017.5" y="142">90</text><text x="1037.5" y="142">92</text><text x="1057.5" y="142">94</text><text x="1077.5" y="142">96</text><text x="1097.5" y="142">98</text><text x="1117.5" y="142">100</text><text x="1137.5" y="142">102</text></g>
<path d="M1133 145 H1139 V151 Z" fill="#000"/></g>

<g clip-path="url(#vrc)"><path d="M92 723.5H95 M88 713.5H95 M92 703.5H95 M88 693.5H95 M92 683.5H95 M88 673.5H95 M92 663.5H95 M88 653.5H95 M92 643.5H95 M88 633.5H95 M92 623.5H95 M88 613.5H95 M92 603.5H95 M88 593.5H95 M92 583.5H95 M88 573.5H95 M92 563.5H95 M88 553.5H95 M92 543.5H95 M88 533.5H95 M92 523.5H95 M88 513.5H95 M92 503.5H95 M88 493.5H95 M92 483.5H95 M88 473.5H95 M92 463.5H95 M88 453.5H95 M92 443.5H95 M88 433.5H95 M92 423.5H95 M88 413.5H95 M92 403.5H95 M88 393.5H95 M92 383.5H95 M88 373.5H95 M92 363.5H95 M88 353.5H95 M92 343.5H95 M88 333.5H95 M92 323.5H95 M88 313.5H95 M92 303.5H95 M88 293.5H95 M92 283.5H95 M88 273.5H95 M92 263.5H95 M88 253.5H95 M92 243.5H95 M88 233.5H95 M92 223.5H95 M88 213.5H95 M92 203.5H95 M88 193.5H95 M92 183.5H95 M88 173.5H95 M92 163.5H95" stroke="#6a6a6a" stroke-width="1"/>
<g font-family="Liberation Sans" font-size="10" fill="#222" text-anchor="middle" letter-spacing="-0.6"><text x="0" y="0" transform="translate(82 733.5) rotate(-90)">-20</text><text x="0" y="0" transform="translate(82 713.5) rotate(-90)">-18</text><text x="0" y="0" transform="translate(82 693.5) rotate(-90)">-16</text><text x="0" y="0" transform="translate(82 673.5) rotate(-90)">-14</text><text x="0" y="0" transform="translate(82 653.5) rotate(-90)">-12</text><text x="0" y="0" transform="translate(82 633.5) rotate(-90)">-10</text><text x="0" y="0" transform="translate(82 613.5) rotate(-90)">-8</text><text x="0" y="0" transform="translate(82 593.5) rotate(-90)">-6</text><text x="0" y="0" transform="translate(82 573.5) rotate(-90)">-4</text><text x="0" y="0" transform="translate(82 553.5) rotate(-90)">-2</text><text x="0" y="0" transform="translate(82 533.5) rotate(-90)">0</text><text x="0" y="0" transform="translate(82 513.5) rotate(-90)">2</text><text x="0" y="0" transform="translate(82 493.5) rotate(-90)">4</text><text x="0" y="0" transform="translate(82 473.5) rotate(-90)">6</text><text x="0" y="0" transform="translate(82 453.5) rotate(-90)">8</text><text x="0" y="0" transform="translate(82 433.5) rotate(-90)">10</text><text x="0" y="0" transform="translate(82 413.5) rotate(-90)">12</text><text x="0" y="0" transform="translate(82 393.5) rotate(-90)">14</text><text x="0" y="0" transform="translate(82 373.5) rotate(-90)">16</text><text x="0" y="0" transform="translate(82 353.5) rotate(-90)">18</text><text x="0" y="0" transform="translate(82 333.5) rotate(-90)">20</text><text x="0" y="0" transform="translate(82 313.5) rotate(-90)">22</text><text x="0" y="0" transform="translate(82 293.5) rotate(-90)">24</text><text x="0" y="0" transform="translate(82 273.5) rotate(-90)">26</text><text x="0" y="0" transform="translate(82 253.5) rotate(-90)">28</text><text x="0" y="0" transform="translate(82 233.5) rotate(-90)">30</text><text x="0" y="0" transform="translate(82 213.5) rotate(-90)">32</text><text x="0" y="0" transform="translate(82 193.5) rotate(-90)">34</text><text x="0" y="0" transform="translate(82 173.5) rotate(-90)">36</text><text x="0" y="0" transform="translate(82 153.5) rotate(-90)">38</text></g>
<path d="M85 676.5 L91.5 682 L85 687.5 Z" fill="#000"/></g></svg>
<svg style="left:95px;top:155px" width="1044" height="577" viewBox="0 0 1044 577"><rect width="1044" height="577" fill="#000"/>
<path d="M21.5 0V577 M121.5 0V577 M221.5 0V577 M321.5 0V577 M422.5 0V577 M522.5 0V577 M622.5 0V577 M722.5 0V577 M822.5 0V577 M922.5 0V577 M1022.5 0V577 M0 478.5H1044 M0 378.5H1044 M0 278.5H1044 M0 178.5H1044 M0 78.5H1044" stroke="#1c1c1c" stroke-width="1"/>
<path d="M1 569h1v1h-1zM1 559h1v1h-1zM1 549h1v1h-1zM1 539h1v1h-1zM1 529h1v1h-1zM1 519h1v1h-1zM1 509h1v1h-1zM1 499h1v1h-1zM1 489h1v1h-1zM1 479h1v1h-1zM1 469h1v1h-1zM1 459h1v1h-1zM1 449h1v1h-1zM1 439h1v1h-1zM1 428h1v1h-1zM1 418h1v1h-1zM1 408h1v1h-1zM1 398h1v1h-1zM1 388h1v1h-1zM1 378h1v1h-1zM1 368h1v1h-1zM1 358h1v1h-1zM1 348h1v1h-1zM1 338h1v1h-1zM1 328h1v1h-1zM1 318h1v1h-1zM1 308h1v1h-1zM1 298h1v1h-1zM1 288h1v1h-1zM1 278h1v1h-1zM1 268h1v1h-1zM1 258h1v1h-1zM1 248h1v1h-1zM1 238h1v1h-1zM1 228h1v1h-1zM1 218h1v1h-1zM1 208h1v1h-1zM1 198h1v1h-1zM1 188h1v1h-1zM1 178h1v1h-1zM1 168h1v1h-1zM1 158h1v1h-1zM1 148h1v1h-1zM1 138h1v1h-1zM1 128h1v1h-1zM1 118h1v1h-1zM1 108h1v1h-1zM1 98h1v1h-1zM1 88h1v1h-1zM1 78h1v1h-1zM1 68h1v1h-1zM1 58h1v1h-1zM1 48h1v1h-1zM1 38h1v1h-1zM1 28h1v1h-1zM1 18h1v1h-1zM1 8h1v1h-1zM11 569h1v1h-1zM11 559h1v1h-1zM11 549h1v1h-1zM11 539h1v1h-1zM11 529h1v1h-1zM11 519h1v1h-1zM11 509h1v1h-1zM11 499h1v1h-1zM11 489h1v1h-1zM11 479h1v1h-1zM11 469h1v1h-1zM11 459h1v1h-1zM11 449h1v1h-1zM11 439h1v1h-1zM11 428h1v1h-1zM11 418h1v1h-1zM11 408h1v1h-1zM11 398h1v1h-1zM11 388h1v1h-1zM11 378h1v1h-1zM11 368h1v1h-1zM11 358h1v1h-1zM11 348h1v1h-1zM11 338h1v1h-1zM11 328h1v1h-1zM11 318h1v1h-1zM11 308h1v1h-1zM11 298h1v1h-1zM11 288h1v1h-1zM11 278h1v1h-1zM11 268h1v1h-1zM11 258h1v1h-1zM11 248h1v1h-1zM11 238h1v1h-1zM11 228h1v1h-1zM11 218h1v1h-1zM11 208h1v1h-1zM11 198h1v1h-1zM11 188h1v1h-1zM11 178h1v1h-1zM11 168h1v1h-1zM11 158h1v1h-1zM11 148h1v1h-1zM11 138h1v1h-1zM11 128h1v1h-1zM11 118h1v1h-1zM11 108h1v1h-1zM11 98h1v1h-1zM11 88h1v1h-1zM11 78h1v1h-1zM11 68h1v1h-1zM11 58h1v1h-1zM11 48h1v1h-1zM11 38h1v1h-1zM11 28h1v1h-1zM11 18h1v1h-1zM11 8h1v1h-1zM21 569h1v1h-1zM21 559h1v1h-1zM21 549h1v1h-1zM21 539h1v1h-1zM21 529h1v1h-1zM21 519h1v1h-1zM21 509h1v1h-1zM21 499h1v1h-1zM21 489h1v1h-1zM21 479h1v1h-1zM21 469h1v1h-1zM21 459h1v1h-1zM21 449h1v1h-1zM21 439h1v1h-1zM21 428h1v1h-1zM21 418h1v1h-1zM21 408h1v1h-1zM21 398h1v1h-1zM21 388h1v1h-1zM21 378h1v1h-1zM21 368h1v1h-1zM21 358h1v1h-1zM21 348h1v1h-1zM21 338h1v1h-1zM21 328h1v1h-1zM21 318h1v1h-1zM21 308h1v1h-1zM21 298h1v1h-1zM21 288h1v1h-1zM21 278h1v1h-1zM21 268h1v1h-1zM21 258h1v1h-1zM21 248h1v1h-1zM21 238h1v1h-1zM21 228h1v1h-1zM21 218h1v1h-1zM21 208h1v1h-1zM21 198h1v1h-1zM21 188h1v1h-1zM21 178h1v1h-1zM21 168h1v1h-1zM21 158h1v1h-1zM21 148h1v1h-1zM21 138h1v1h-1zM21 128h1v1h-1zM21 118h1v1h-1zM21 108h1v1h-1zM21 98h1v1h-1zM21 88h1v1h-1zM21 78h1v1h-1zM21 68h1v1h-1zM21 58h1v1h-1zM21 48h1v1h-1zM21 38h1v1h-1zM21 28h1v1h-1zM21 18h1v1h-1zM21 8h1v1h-1zM31 569h1v1h-1zM31 559h1v1h-1zM31 549h1v1h-1zM31 539h1v1h-1zM31 529h1v1h-1zM31 519h1v1h-1zM31 509h1v1h-1zM31 499h1v1h-1zM31 489h1v1h-1zM31 479h1v1h-1zM31 469h1v1h-1zM31 459h1v1h-1zM31 449h1v1h-1zM31 439h1v1h-1zM31 428h1v1h-1zM31 418h1v1h-1zM31 408h1v1h-1zM31 398h1v1h-1zM31 388h1v1h-1zM31 378h1v1h-1zM31 368h1v1h-1zM31 358h1v1h-1zM31 348h1v1h-1zM31 338h1v1h-1zM31 328h1v1h-1zM31 318h1v1h-1zM31 308h1v1h-1zM31 298h1v1h-1zM31 288h1v1h-1zM31 278h1v1h-1zM31 268h1v1h-1zM31 258h1v1h-1zM31 248h1v1h-1zM31 238h1v1h-1zM31 228h1v1h-1zM31 218h1v1h-1zM31 208h1v1h-1zM31 198h1v1h-1zM31 188h1v1h-1zM31 178h1v1h-1zM31 168h1v1h-1zM31 158h1v1h-1zM31 148h1v1h-1zM31 138h1v1h-1zM31 128h1v1h-1zM31 118h1v1h-1zM31 108h1v1h-1zM31 98h1v1h-1zM31 88h1v1h-1zM31 78h1v1h-1zM31 68h1v1h-1zM31 58h1v1h-1zM31 48h1v1h-1zM31 38h1v1h-1zM31 28h1v1h-1zM31 18h1v1h-1zM31 8h1v1h-1zM41 569h1v1h-1zM41 559h1v1h-1zM41 549h1v1h-1zM41 539h1v1h-1zM41 529h1v1h-1zM41 519h1v1h-1zM41 509h1v1h-1zM41 499h1v1h-1zM41 489h1v1h-1zM41 479h1v1h-1zM41 469h1v1h-1zM41 459h1v1h-1zM41 449h1v1h-1zM41 439h1v1h-1zM41 428h1v1h-1zM41 418h1v1h-1zM41 408h1v1h-1zM41 398h1v1h-1zM41 388h1v1h-1zM41 378h1v1h-1zM41 368h1v1h-1zM41 358h1v1h-1zM41 348h1v1h-1zM41 338h1v1h-1zM41 328h1v1h-1zM41 318h1v1h-1zM41 308h1v1h-1zM41 298h1v1h-1zM41 288h1v1h-1zM41 278h1v1h-1zM41 268h1v1h-1zM41 258h1v1h-1zM41 248h1v1h-1zM41 238h1v1h-1zM41 228h1v1h-1zM41 218h1v1h-1zM41 208h1v1h-1zM41 198h1v1h-1zM41 188h1v1h-1zM41 178h1v1h-1zM41 168h1v1h-1zM41 158h1v1h-1zM41 148h1v1h-1zM41 138h1v1h-1zM41 128h1v1h-1zM41 118h1v1h-1zM41 108h1v1h-1zM41 98h1v1h-1zM41 88h1v1h-1zM41 78h1v1h-1zM41 68h1v1h-1zM41 58h1v1h-1zM41 48h1v1h-1zM41 38h1v1h-1zM41 28h1v1h-1zM41 18h1v1h-1zM41 8h1v1h-1zM51 569h1v1h-1zM51 559h1v1h-1zM51 549h1v1h-1zM51 539h1v1h-1zM51 529h1v1h-1zM51 519h1v1h-1zM51 509h1v1h-1zM51 499h1v1h-1zM51 489h1v1h-1zM51 479h1v1h-1zM51 469h1v1h-1zM51 459h1v1h-1zM51 449h1v1h-1zM51 439h1v1h-1zM51 428h1v1h-1zM51 418h1v1h-1zM51 408h1v1h-1zM51 398h1v1h-1zM51 388h1v1h-1zM51 378h1v1h-1zM51 368h1v1h-1zM51 358h1v1h-1zM51 348h1v1h-1zM51 338h1v1h-1zM51 328h1v1h-1zM51 318h1v1h-1zM51 308h1v1h-1zM51 298h1v1h-1zM51 288h1v1h-1zM51 278h1v1h-1zM51 268h1v1h-1zM51 258h1v1h-1zM51 248h1v1h-1zM51 238h1v1h-1zM51 228h1v1h-1zM51 218h1v1h-1zM51 208h1v1h-1zM51 198h1v1h-1zM51 188h1v1h-1zM51 178h1v1h-1zM51 168h1v1h-1zM51 158h1v1h-1zM51 148h1v1h-1zM51 138h1v1h-1zM51 128h1v1h-1zM51 118h1v1h-1zM51 108h1v1h-1zM51 98h1v1h-1zM51 88h1v1h-1zM51 78h1v1h-1zM51 68h1v1h-1zM51 58h1v1h-1zM51 48h1v1h-1zM51 38h1v1h-1zM51 28h1v1h-1zM51 18h1v1h-1zM51 8h1v1h-1zM61 569h1v1h-1zM61 559h1v1h-1zM61 549h1v1h-1zM61 539h1v1h-1zM61 529h1v1h-1zM61 519h1v1h-1zM61 509h1v1h-1zM61 499h1v1h-1zM61 489h1v1h-1zM61 479h1v1h-1zM61 469h1v1h-1zM61 459h1v1h-1zM61 449h1v1h-1zM61 439h1v1h-1zM61 428h1v1h-1zM61 418h1v1h-1zM61 408h1v1h-1zM61 398h1v1h-1zM61 388h1v1h-1zM61 378h1v1h-1zM61 368h1v1h-1zM61 358h1v1h-1zM61 348h1v1h-1zM61 338h1v1h-1zM61 328h1v1h-1zM61 318h1v1h-1zM61 308h1v1h-1zM61 298h1v1h-1zM61 288h1v1h-1zM61 278h1v1h-1zM61 268h1v1h-1zM61 258h1v1h-1zM61 248h1v1h-1zM61 238h1v1h-1zM61 228h1v1h-1zM61 218h1v1h-1zM61 208h1v1h-1zM61 198h1v1h-1zM61 188h1v1h-1zM61 178h1v1h-1zM61 168h1v1h-1zM61 158h1v1h-1zM61 148h1v1h-1zM61 138h1v1h-1zM61 128h1v1h-1zM61 118h1v1h-1zM61 108h1v1h-1zM61 98h1v1h-1zM61 88h1v1h-1zM61 78h1v1h-1zM61 68h1v1h-1zM61 58h1v1h-1zM61 48h1v1h-1zM61 38h1v1h-1zM61 28h1v1h-1zM61 18h1v1h-1zM61 8h1v1h-1zM71 569h1v1h-1zM71 559h1v1h-1zM71 549h1v1h-1zM71 539h1v1h-1zM71 529h1v1h-1zM71 519h1v1h-1zM71 509h1v1h-1zM71 499h1v1h-1zM71 489h1v1h-1zM71 479h1v1h-1zM71 469h1v1h-1zM71 459h1v1h-1zM71 449h1v1h-1zM71 439h1v1h-1zM71 428h1v1h-1zM71 418h1v1h-1zM71 408h1v1h-1zM71 398h1v1h-1zM71 388h1v1h-1zM71 378h1v1h-1zM71 368h1v1h-1zM71 358h1v1h-1zM71 348h1v1h-1zM71 338h1v1h-1zM71 328h1v1h-1zM71 318h1v1h-1zM71 308h1v1h-1zM71 298h1v1h-1zM71 288h1v1h-1zM71 278h1v1h-1zM71 268h1v1h-1zM71 258h1v1h-1zM71 248h1v1h-1zM71 238h1v1h-1zM71 228h1v1h-1zM71 218h1v1h-1zM71 208h1v1h-1zM71 198h1v1h-1zM71 188h1v1h-1zM71 178h1v1h-1zM71 168h1v1h-1zM71 158h1v1h-1zM71 148h1v1h-1zM71 138h1v1h-1zM71 128h1v1h-1zM71 118h1v1h-1zM71 108h1v1h-1zM71 98h1v1h-1zM71 88h1v1h-1zM71 78h1v1h-1zM71 68h1v1h-1zM71 58h1v1h-1zM71 48h1v1h-1zM71 38h1v1h-1zM71 28h1v1h-1zM71 18h1v1h-1zM71 8h1v1h-1zM81 569h1v1h-1zM81 559h1v1h-1zM81 549h1v1h-1zM81 539h1v1h-1zM81 529h1v1h-1zM81 519h1v1h-1zM81 509h1v1h-1zM81 499h1v1h-1zM81 489h1v1h-1zM81 479h1v1h-1zM81 469h1v1h-1zM81 459h1v1h-1zM81 449h1v1h-1zM81 439h1v1h-1zM81 428h1v1h-1zM81 418h1v1h-1zM81 408h1v1h-1zM81 398h1v1h-1zM81 388h1v1h-1zM81 378h1v1h-1zM81 368h1v1h-1zM81 358h1v1h-1zM81 348h1v1h-1zM81 338h1v1h-1zM81 328h1v1h-1zM81 318h1v1h-1zM81 308h1v1h-1zM81 298h1v1h-1zM81 288h1v1h-1zM81 278h1v1h-1zM81 268h1v1h-1zM81 258h1v1h-1zM81 248h1v1h-1zM81 238h1v1h-1zM81 228h1v1h-1zM81 218h1v1h-1zM81 208h1v1h-1zM81 198h1v1h-1zM81 188h1v1h-1zM81 178h1v1h-1zM81 168h1v1h-1zM81 158h1v1h-1zM81 148h1v1h-1zM81 138h1v1h-1zM81 128h1v1h-1zM81 118h1v1h-1zM81 108h1v1h-1zM81 98h1v1h-1zM81 88h1v1h-1zM81 78h1v1h-1zM81 68h1v1h-1zM81 58h1v1h-1zM81 48h1v1h-1zM81 38h1v1h-1zM81 28h1v1h-1zM81 18h1v1h-1zM81 8h1v1h-1zM91 569h1v1h-1zM91 559h1v1h-1zM91 549h1v1h-1zM91 539h1v1h-1zM91 529h1v1h-1zM91 519h1v1h-1zM91 509h1v1h-1zM91 499h1v1h-1zM91 489h1v1h-1zM91 479h1v1h-1zM91 469h1v1h-1zM91 459h1v1h-1zM91 449h1v1h-1zM91 439h1v1h-1zM91 428h1v1h-1zM91 418h1v1h-1zM91 408h1v1h-1zM91 398h1v1h-1zM91 388h1v1h-1zM91 378h1v1h-1zM91 368h1v1h-1zM91 358h1v1h-1zM91 348h1v1h-1zM91 338h1v1h-1zM91 328h1v1h-1zM91 318h1v1h-1zM91 308h1v1h-1zM91 298h1v1h-1zM91 288h1v1h-1zM91 278h1v1h-1zM91 268h1v1h-1zM91 258h1v1h-1zM91 248h1v1h-1zM91 238h1v1h-1zM91 228h1v1h-1zM91 218h1v1h-1zM91 208h1v1h-1zM91 198h1v1h-1zM91 188h1v1h-1zM91 178h1v1h-1zM91 168h1v1h-1zM91 158h1v1h-1zM91 148h1v1h-1zM91 138h1v1h-1zM91 128h1v1h-1zM91 118h1v1h-1zM91 108h1v1h-1zM91 98h1v1h-1zM91 88h1v1h-1zM91 78h1v1h-1zM91 68h1v1h-1zM91 58h1v1h-1zM91 48h1v1h-1zM91 38h1v1h-1zM91 28h1v1h-1zM91 18h1v1h-1zM91 8h1v1h-1zM101 569h1v1h-1zM101 559h1v1h-1zM101 549h1v1h-1zM101 539h1v1h-1zM101 529h1v1h-1zM101 519h1v1h-1zM101 509h1v1h-1zM101 499h1v1h-1zM101 489h1v1h-1zM101 479h1v1h-1zM101 469h1v1h-1zM101 459h1v1h-1zM101 449h1v1h-1zM101 439h1v1h-1zM101 428h1v1h-1zM101 418h1v1h-1zM101 408h1v1h-1zM101 398h1v1h-1zM101 388h1v1h-1zM101 378h1v1h-1zM101 368h1v1h-1zM101 358h1v1h-1zM101 348h1v1h-1zM101 338h1v1h-1zM101 328h1v1h-1zM101 318h1v1h-1zM101 308h1v1h-1zM101 298h1v1h-1zM101 288h1v1h-1zM101 278h1v1h-1zM101 268h1v1h-1zM101 258h1v1h-1zM101 248h1v1h-1zM101 238h1v1h-1zM101 228h1v1h-1zM101 218h1v1h-1zM101 208h1v1h-1zM101 198h1v1h-1zM101 188h1v1h-1zM101 178h1v1h-1zM101 168h1v1h-1zM101 158h1v1h-1zM101 148h1v1h-1zM101 138h1v1h-1zM101 128h1v1h-1zM101 118h1v1h-1zM101 108h1v1h-1zM101 98h1v1h-1zM101 88h1v1h-1zM101 78h1v1h-1zM101 68h1v1h-1zM101 58h1v1h-1zM101 48h1v1h-1zM101 38h1v1h-1zM101 28h1v1h-1zM101 18h1v1h-1zM101 8h1v1h-1zM111 569h1v1h-1zM111 559h1v1h-1zM111 549h1v1h-1zM111 539h1v1h-1zM111 529h1v1h-1zM111 519h1v1h-1zM111 509h1v1h-1zM111 499h1v1h-1zM111 489h1v1h-1zM111 479h1v1h-1zM111 469h1v1h-1zM111 459h1v1h-1zM111 449h1v1h-1zM111 439h1v1h-1zM111 428h1v1h-1zM111 418h1v1h-1zM111 408h1v1h-1zM111 398h1v1h-1zM111 388h1v1h-1zM111 378h1v1h-1zM111 368h1v1h-1zM111 358h1v1h-1zM111 348h1v1h-1zM111 338h1v1h-1zM111 328h1v1h-1zM111 318h1v1h-1zM111 308h1v1h-1zM111 298h1v1h-1zM111 288h1v1h-1zM111 278h1v1h-1zM111 268h1v1h-1zM111 258h1v1h-1zM111 248h1v1h-1zM111 238h1v1h-1zM111 228h1v1h-1zM111 218h1v1h-1zM111 208h1v1h-1zM111 198h1v1h-1zM111 188h1v1h-1zM111 178h1v1h-1zM111 168h1v1h-1zM111 158h1v1h-1zM111 148h1v1h-1zM111 138h1v1h-1zM111 128h1v1h-1zM111 118h1v1h-1zM111 108h1v1h-1zM111 98h1v1h-1zM111 88h1v1h-1zM111 78h1v1h-1zM111 68h1v1h-1zM111 58h1v1h-1zM111 48h1v1h-1zM111 38h1v1h-1zM111 28h1v1h-1zM111 18h1v1h-1zM111 8h1v1h-1zM121 569h1v1h-1zM121 559h1v1h-1zM121 549h1v1h-1zM121 539h1v1h-1zM121 529h1v1h-1zM121 519h1v1h-1zM121 509h1v1h-1zM121 499h1v1h-1zM121 489h1v1h-1zM121 479h1v1h-1zM121 469h1v1h-1zM121 459h1v1h-1zM121 449h1v1h-1zM121 439h1v1h-1zM121 428h1v1h-1zM121 418h1v1h-1zM121 408h1v1h-1zM121 398h1v1h-1zM121 388h1v1h-1zM121 378h1v1h-1zM121 368h1v1h-1zM121 358h1v1h-1zM121 348h1v1h-1zM121 338h1v1h-1zM121 328h1v1h-1zM121 318h1v1h-1zM121 308h1v1h-1zM121 298h1v1h-1zM121 288h1v1h-1zM121 278h1v1h-1zM121 268h1v1h-1zM121 258h1v1h-1zM121 248h1v1h-1zM121 238h1v1h-1zM121 228h1v1h-1zM121 218h1v1h-1zM121 208h1v1h-1zM121 198h1v1h-1zM121 188h1v1h-1zM121 178h1v1h-1zM121 168h1v1h-1zM121 158h1v1h-1zM121 148h1v1h-1zM121 138h1v1h-1zM121 128h1v1h-1zM121 118h1v1h-1zM121 108h1v1h-1zM121 98h1v1h-1zM121 88h1v1h-1zM121 78h1v1h-1zM121 68h1v1h-1zM121 58h1v1h-1zM121 48h1v1h-1zM121 38h1v1h-1zM121 28h1v1h-1zM121 18h1v1h-1zM121 8h1v1h-1zM131 569h1v1h-1zM131 559h1v1h-1zM131 549h1v1h-1zM131 539h1v1h-1zM131 529h1v1h-1zM131 519h1v1h-1zM131 509h1v1h-1zM131 499h1v1h-1zM131 489h1v1h-1zM131 479h1v1h-1zM131 469h1v1h-1zM131 459h1v1h-1zM131 449h1v1h-1zM131 439h1v1h-1zM131 428h1v1h-1zM131 418h1v1h-1zM131 408h1v1h-1zM131 398h1v1h-1zM131 388h1v1h-1zM131 378h1v1h-1zM131 368h1v1h-1zM131 358h1v1h-1zM131 348h1v1h-1zM131 338h1v1h-1zM131 328h1v1h-1zM131 318h1v1h-1zM131 308h1v1h-1zM131 298h1v1h-1zM131 288h1v1h-1zM131 278h1v1h-1zM131 268h1v1h-1zM131 258h1v1h-1zM131 248h1v1h-1zM131 238h1v1h-1zM131 228h1v1h-1zM131 218h1v1h-1zM131 208h1v1h-1zM131 198h1v1h-1zM131 188h1v1h-1zM131 178h1v1h-1zM131 168h1v1h-1zM131 158h1v1h-1zM131 148h1v1h-1zM131 138h1v1h-1zM131 128h1v1h-1zM131 118h1v1h-1zM131 108h1v1h-1zM131 98h1v1h-1zM131 88h1v1h-1zM131 78h1v1h-1zM131 68h1v1h-1zM131 58h1v1h-1zM131 48h1v1h-1zM131 38h1v1h-1zM131 28h1v1h-1zM131 18h1v1h-1zM131 8h1v1h-1zM141 569h1v1h-1zM141 559h1v1h-1zM141 549h1v1h-1zM141 539h1v1h-1zM141 529h1v1h-1zM141 519h1v1h-1zM141 509h1v1h-1zM141 499h1v1h-1zM141 489h1v1h-1zM141 479h1v1h-1zM141 469h1v1h-1zM141 459h1v1h-1zM141 449h1v1h-1zM141 439h1v1h-1zM141 428h1v1h-1zM141 418h1v1h-1zM141 408h1v1h-1zM141 398h1v1h-1zM141 388h1v1h-1zM141 378h1v1h-1zM141 368h1v1h-1zM141 358h1v1h-1zM141 348h1v1h-1zM141 338h1v1h-1zM141 328h1v1h-1zM141 318h1v1h-1zM141 308h1v1h-1zM141 298h1v1h-1zM141 288h1v1h-1zM141 278h1v1h-1zM141 268h1v1h-1zM141 258h1v1h-1zM141 248h1v1h-1zM141 238h1v1h-1zM141 228h1v1h-1zM141 218h1v1h-1zM141 208h1v1h-1zM141 198h1v1h-1zM141 188h1v1h-1zM141 178h1v1h-1zM141 168h1v1h-1zM141 158h1v1h-1zM141 148h1v1h-1zM141 138h1v1h-1zM141 128h1v1h-1zM141 118h1v1h-1zM141 108h1v1h-1zM141 98h1v1h-1zM141 88h1v1h-1zM141 78h1v1h-1zM141 68h1v1h-1zM141 58h1v1h-1zM141 48h1v1h-1zM141 38h1v1h-1zM141 28h1v1h-1zM141 18h1v1h-1zM141 8h1v1h-1zM151 569h1v1h-1zM151 559h1v1h-1zM151 549h1v1h-1zM151 539h1v1h-1zM151 529h1v1h-1zM151 519h1v1h-1zM151 509h1v1h-1zM151 499h1v1h-1zM151 489h1v1h-1zM151 479h1v1h-1zM151 469h1v1h-1zM151 459h1v1h-1zM151 449h1v1h-1zM151 439h1v1h-1zM151 428h1v1h-1zM151 418h1v1h-1zM151 408h1v1h-1zM151 398h1v1h-1zM151 388h1v1h-1zM151 378h1v1h-1zM151 368h1v1h-1zM151 358h1v1h-1zM151 348h1v1h-1zM151 338h1v1h-1zM151 328h1v1h-1zM151 318h1v1h-1zM151 308h1v1h-1zM151 298h1v1h-1zM151 288h1v1h-1zM151 278h1v1h-1zM151 268h1v1h-1zM151 258h1v1h-1zM151 248h1v1h-1zM151 238h1v1h-1zM151 228h1v1h-1zM151 218h1v1h-1zM151 208h1v1h-1zM151 198h1v1h-1zM151 188h1v1h-1zM151 178h1v1h-1zM151 168h1v1h-1zM151 158h1v1h-1zM151 148h1v1h-1zM151 138h1v1h-1zM151 128h1v1h-1zM151 118h1v1h-1zM151 108h1v1h-1zM151 98h1v1h-1zM151 88h1v1h-1zM151 78h1v1h-1zM151 68h1v1h-1zM151 58h1v1h-1zM151 48h1v1h-1zM151 38h1v1h-1zM151 28h1v1h-1zM151 18h1v1h-1zM151 8h1v1h-1zM161 569h1v1h-1zM161 559h1v1h-1zM161 549h1v1h-1zM161 539h1v1h-1zM161 529h1v1h-1zM161 519h1v1h-1zM161 509h1v1h-1zM161 499h1v1h-1zM161 489h1v1h-1zM161 479h1v1h-1zM161 469h1v1h-1zM161 459h1v1h-1zM161 449h1v1h-1zM161 439h1v1h-1zM161 428h1v1h-1zM161 418h1v1h-1zM161 408h1v1h-1zM161 398h1v1h-1zM161 388h1v1h-1zM161 378h1v1h-1zM161 368h1v1h-1zM161 358h1v1h-1zM161 348h1v1h-1zM161 338h1v1h-1zM161 328h1v1h-1zM161 318h1v1h-1zM161 308h1v1h-1zM161 298h1v1h-1zM161 288h1v1h-1zM161 278h1v1h-1zM161 268h1v1h-1zM161 258h1v1h-1zM161 248h1v1h-1zM161 238h1v1h-1zM161 228h1v1h-1zM161 218h1v1h-1zM161 208h1v1h-1zM161 198h1v1h-1zM161 188h1v1h-1zM161 178h1v1h-1zM161 168h1v1h-1zM161 158h1v1h-1zM161 148h1v1h-1zM161 138h1v1h-1zM161 128h1v1h-1zM161 118h1v1h-1zM161 108h1v1h-1zM161 98h1v1h-1zM161 88h1v1h-1zM161 78h1v1h-1zM161 68h1v1h-1zM161 58h1v1h-1zM161 48h1v1h-1zM161 38h1v1h-1zM161 28h1v1h-1zM161 18h1v1h-1zM161 8h1v1h-1zM171 569h1v1h-1zM171 559h1v1h-1zM171 549h1v1h-1zM171 539h1v1h-1zM171 529h1v1h-1zM171 519h1v1h-1zM171 509h1v1h-1zM171 499h1v1h-1zM171 489h1v1h-1zM171 479h1v1h-1zM171 469h1v1h-1zM171 459h1v1h-1zM171 449h1v1h-1zM171 439h1v1h-1zM171 428h1v1h-1zM171 418h1v1h-1zM171 408h1v1h-1zM171 398h1v1h-1zM171 388h1v1h-1zM171 378h1v1h-1zM171 368h1v1h-1zM171 358h1v1h-1zM171 348h1v1h-1zM171 338h1v1h-1zM171 328h1v1h-1zM171 318h1v1h-1zM171 308h1v1h-1zM171 298h1v1h-1zM171 288h1v1h-1zM171 278h1v1h-1zM171 268h1v1h-1zM171 258h1v1h-1zM171 248h1v1h-1zM171 238h1v1h-1zM171 228h1v1h-1zM171 218h1v1h-1zM171 208h1v1h-1zM171 198h1v1h-1zM171 188h1v1h-1zM171 178h1v1h-1zM171 168h1v1h-1zM171 158h1v1h-1zM171 148h1v1h-1zM171 138h1v1h-1zM171 128h1v1h-1zM171 118h1v1h-1zM171 108h1v1h-1zM171 98h1v1h-1zM171 88h1v1h-1zM171 78h1v1h-1zM171 68h1v1h-1zM171 58h1v1h-1zM171 48h1v1h-1zM171 38h1v1h-1zM171 28h1v1h-1zM171 18h1v1h-1zM171 8h1v1h-1zM181 569h1v1h-1zM181 559h1v1h-1zM181 549h1v1h-1zM181 539h1v1h-1zM181 529h1v1h-1zM181 519h1v1h-1zM181 509h1v1h-1zM181 499h1v1h-1zM181 489h1v1h-1zM181 479h1v1h-1zM181 469h1v1h-1zM181 459h1v1h-1zM181 449h1v1h-1zM181 439h1v1h-1zM181 428h1v1h-1zM181 418h1v1h-1zM181 408h1v1h-1zM181 398h1v1h-1zM181 388h1v1h-1zM181 378h1v1h-1zM181 368h1v1h-1zM181 358h1v1h-1zM181 348h1v1h-1zM181 338h1v1h-1zM181 328h1v1h-1zM181 318h1v1h-1zM181 308h1v1h-1zM181 298h1v1h-1zM181 288h1v1h-1zM181 278h1v1h-1zM181 268h1v1h-1zM181 258h1v1h-1zM181 248h1v1h-1zM181 238h1v1h-1zM181 228h1v1h-1zM181 218h1v1h-1zM181 208h1v1h-1zM181 198h1v1h-1zM181 188h1v1h-1zM181 178h1v1h-1zM181 168h1v1h-1zM181 158h1v1h-1zM181 148h1v1h-1zM181 138h1v1h-1zM181 128h1v1h-1zM181 118h1v1h-1zM181 108h1v1h-1zM181 98h1v1h-1zM181 88h1v1h-1zM181 78h1v1h-1zM181 68h1v1h-1zM181 58h1v1h-1zM181 48h1v1h-1zM181 38h1v1h-1zM181 28h1v1h-1zM181 18h1v1h-1zM181 8h1v1h-1zM191 569h1v1h-1zM191 559h1v1h-1zM191 549h1v1h-1zM191 539h1v1h-1zM191 529h1v1h-1zM191 519h1v1h-1zM191 509h1v1h-1zM191 499h1v1h-1zM191 489h1v1h-1zM191 479h1v1h-1zM191 469h1v1h-1zM191 459h1v1h-1zM191 449h1v1h-1zM191 439h1v1h-1zM191 428h1v1h-1zM191 418h1v1h-1zM191 408h1v1h-1zM191 398h1v1h-1zM191 388h1v1h-1zM191 378h1v1h-1zM191 368h1v1h-1zM191 358h1v1h-1zM191 348h1v1h-1zM191 338h1v1h-1zM191 328h1v1h-1zM191 318h1v1h-1zM191 308h1v1h-1zM191 298h1v1h-1zM191 288h1v1h-1zM191 278h1v1h-1zM191 268h1v1h-1zM191 258h1v1h-1zM191 248h1v1h-1zM191 238h1v1h-1zM191 228h1v1h-1zM191 218h1v1h-1zM191 208h1v1h-1zM191 198h1v1h-1zM191 188h1v1h-1zM191 178h1v1h-1zM191 168h1v1h-1zM191 158h1v1h-1zM191 148h1v1h-1zM191 138h1v1h-1zM191 128h1v1h-1zM191 118h1v1h-1zM191 108h1v1h-1zM191 98h1v1h-1zM191 88h1v1h-1zM191 78h1v1h-1zM191 68h1v1h-1zM191 58h1v1h-1zM191 48h1v1h-1zM191 38h1v1h-1zM191 28h1v1h-1zM191 18h1v1h-1zM191 8h1v1h-1zM201 569h1v1h-1zM201 559h1v1h-1zM201 549h1v1h-1zM201 539h1v1h-1zM201 529h1v1h-1zM201 519h1v1h-1zM201 509h1v1h-1zM201 499h1v1h-1zM201 489h1v1h-1zM201 479h1v1h-1zM201 469h1v1h-1zM201 459h1v1h-1zM201 449h1v1h-1zM201 439h1v1h-1zM201 428h1v1h-1zM201 418h1v1h-1zM201 408h1v1h-1zM201 398h1v1h-1zM201 388h1v1h-1zM201 378h1v1h-1zM201 368h1v1h-1zM201 358h1v1h-1zM201 348h1v1h-1zM201 338h1v1h-1zM201 328h1v1h-1zM201 318h1v1h-1zM201 308h1v1h-1zM201 298h1v1h-1zM201 288h1v1h-1zM201 278h1v1h-1zM201 268h1v1h-1zM201 258h1v1h-1zM201 248h1v1h-1zM201 238h1v1h-1zM201 228h1v1h-1zM201 218h1v1h-1zM201 208h1v1h-1zM201 198h1v1h-1zM201 188h1v1h-1zM201 178h1v1h-1zM201 168h1v1h-1zM201 158h1v1h-1zM201 148h1v1h-1zM201 138h1v1h-1zM201 128h1v1h-1zM201 118h1v1h-1zM201 108h1v1h-1zM201 98h1v1h-1zM201 88h1v1h-1zM201 78h1v1h-1zM201 68h1v1h-1zM201 58h1v1h-1zM201 48h1v1h-1zM201 38h1v1h-1zM201 28h1v1h-1zM201 18h1v1h-1zM201 8h1v1h-1zM211 569h1v1h-1zM211 559h1v1h-1zM211 549h1v1h-1zM211 539h1v1h-1zM211 529h1v1h-1zM211 519h1v1h-1zM211 509h1v1h-1zM211 499h1v1h-1zM211 489h1v1h-1zM211 479h1v1h-1zM211 469h1v1h-1zM211 459h1v1h-1zM211 449h1v1h-1zM211 439h1v1h-1zM211 428h1v1h-1zM211 418h1v1h-1zM211 408h1v1h-1zM211 398h1v1h-1zM211 388h1v1h-1zM211 378h1v1h-1zM211 368h1v1h-1zM211 358h1v1h-1zM211 348h1v1h-1zM211 338h1v1h-1zM211 328h1v1h-1zM211 318h1v1h-1zM211 308h1v1h-1zM211 298h1v1h-1zM211 288h1v1h-1zM211 278h1v1h-1zM211 268h1v1h-1zM211 258h1v1h-1zM211 248h1v1h-1zM211 238h1v1h-1zM211 228h1v1h-1zM211 218h1v1h-1zM211 208h1v1h-1zM211 198h1v1h-1zM211 188h1v1h-1zM211 178h1v1h-1zM211 168h1v1h-1zM211 158h1v1h-1zM211 148h1v1h-1zM211 138h1v1h-1zM211 128h1v1h-1zM211 118h1v1h-1zM211 108h1v1h-1zM211 98h1v1h-1zM211 88h1v1h-1zM211 78h1v1h-1zM211 68h1v1h-1zM211 58h1v1h-1zM211 48h1v1h-1zM211 38h1v1h-1zM211 28h1v1h-1zM211 18h1v1h-1zM211 8h1v1h-1zM221 569h1v1h-1zM221 559h1v1h-1zM221 549h1v1h-1zM221 539h1v1h-1zM221 529h1v1h-1zM221 519h1v1h-1zM221 509h1v1h-1zM221 499h1v1h-1zM221 489h1v1h-1zM221 479h1v1h-1zM221 469h1v1h-1zM221 459h1v1h-1zM221 449h1v1h-1zM221 439h1v1h-1zM221 428h1v1h-1zM221 418h1v1h-1zM221 408h1v1h-1zM221 398h1v1h-1zM221 388h1v1h-1zM221 378h1v1h-1zM221 368h1v1h-1zM221 358h1v1h-1zM221 348h1v1h-1zM221 338h1v1h-1zM221 328h1v1h-1zM221 318h1v1h-1zM221 308h1v1h-1zM221 298h1v1h-1zM221 288h1v1h-1zM221 278h1v1h-1zM221 268h1v1h-1zM221 258h1v1h-1zM221 248h1v1h-1zM221 238h1v1h-1zM221 228h1v1h-1zM221 218h1v1h-1zM221 208h1v1h-1zM221 198h1v1h-1zM221 188h1v1h-1zM221 178h1v1h-1zM221 168h1v1h-1zM221 158h1v1h-1zM221 148h1v1h-1zM221 138h1v1h-1zM221 128h1v1h-1zM221 118h1v1h-1zM221 108h1v1h-1zM221 98h1v1h-1zM221 88h1v1h-1zM221 78h1v1h-1zM221 68h1v1h-1zM221 58h1v1h-1zM221 48h1v1h-1zM221 38h1v1h-1zM221 28h1v1h-1zM221 18h1v1h-1zM221 8h1v1h-1zM231 569h1v1h-1zM231 559h1v1h-1zM231 549h1v1h-1zM231 539h1v1h-1zM231 529h1v1h-1zM231 519h1v1h-1zM231 509h1v1h-1zM231 499h1v1h-1zM231 489h1v1h-1zM231 479h1v1h-1zM231 469h1v1h-1zM231 459h1v1h-1zM231 449h1v1h-1zM231 439h1v1h-1zM231 428h1v1h-1zM231 418h1v1h-1zM231 408h1v1h-1zM231 398h1v1h-1zM231 388h1v1h-1zM231 378h1v1h-1zM231 368h1v1h-1zM231 358h1v1h-1zM231 348h1v1h-1zM231 338h1v1h-1zM231 328h1v1h-1zM231 318h1v1h-1zM231 308h1v1h-1zM231 298h1v1h-1zM231 288h1v1h-1zM231 278h1v1h-1zM231 268h1v1h-1zM231 258h1v1h-1zM231 248h1v1h-1zM231 238h1v1h-1zM231 228h1v1h-1zM231 218h1v1h-1zM231 208h1v1h-1zM231 198h1v1h-1zM231 188h1v1h-1zM231 178h1v1h-1zM231 168h1v1h-1zM231 158h1v1h-1zM231 148h1v1h-1zM231 138h1v1h-1zM231 128h1v1h-1zM231 118h1v1h-1zM231 108h1v1h-1zM231 98h1v1h-1zM231 88h1v1h-1zM231 78h1v1h-1zM231 68h1v1h-1zM231 58h1v1h-1zM231 48h1v1h-1zM231 38h1v1h-1zM231 28h1v1h-1zM231 18h1v1h-1zM231 8h1v1h-1zM241 569h1v1h-1zM241 559h1v1h-1zM241 549h1v1h-1zM241 539h1v1h-1zM241 529h1v1h-1zM241 519h1v1h-1zM241 509h1v1h-1zM241 499h1v1h-1zM241 489h1v1h-1zM241 479h1v1h-1zM241 469h1v1h-1zM241 459h1v1h-1zM241 449h1v1h-1zM241 439h1v1h-1zM241 428h1v1h-1zM241 418h1v1h-1zM241 408h1v1h-1zM241 398h1v1h-1zM241 388h1v1h-1zM241 378h1v1h-1zM241 368h1v1h-1zM241 358h1v1h-1zM241 348h1v1h-1zM241 338h1v1h-1zM241 328h1v1h-1zM241 318h1v1h-1zM241 308h1v1h-1zM241 298h1v1h-1zM241 288h1v1h-1zM241 278h1v1h-1zM241 268h1v1h-1zM241 258h1v1h-1zM241 248h1v1h-1zM241 238h1v1h-1zM241 228h1v1h-1zM241 218h1v1h-1zM241 208h1v1h-1zM241 198h1v1h-1zM241 188h1v1h-1zM241 178h1v1h-1zM241 168h1v1h-1zM241 158h1v1h-1zM241 148h1v1h-1zM241 138h1v1h-1zM241 128h1v1h-1zM241 118h1v1h-1zM241 108h1v1h-1zM241 98h1v1h-1zM241 88h1v1h-1zM241 78h1v1h-1zM241 68h1v1h-1zM241 58h1v1h-1zM241 48h1v1h-1zM241 38h1v1h-1zM241 28h1v1h-1zM241 18h1v1h-1zM241 8h1v1h-1zM251 569h1v1h-1zM251 559h1v1h-1zM251 549h1v1h-1zM251 539h1v1h-1zM251 529h1v1h-1zM251 519h1v1h-1zM251 509h1v1h-1zM251 499h1v1h-1zM251 489h1v1h-1zM251 479h1v1h-1zM251 469h1v1h-1zM251 459h1v1h-1zM251 449h1v1h-1zM251 439h1v1h-1zM251 428h1v1h-1zM251 418h1v1h-1zM251 408h1v1h-1zM251 398h1v1h-1zM251 388h1v1h-1zM251 378h1v1h-1zM251 368h1v1h-1zM251 358h1v1h-1zM251 348h1v1h-1zM251 338h1v1h-1zM251 328h1v1h-1zM251 318h1v1h-1zM251 308h1v1h-1zM251 298h1v1h-1zM251 288h1v1h-1zM251 278h1v1h-1zM251 268h1v1h-1zM251 258h1v1h-1zM251 248h1v1h-1zM251 238h1v1h-1zM251 228h1v1h-1zM251 218h1v1h-1zM251 208h1v1h-1zM251 198h1v1h-1zM251 188h1v1h-1zM251 178h1v1h-1zM251 168h1v1h-1zM251 158h1v1h-1zM251 148h1v1h-1zM251 138h1v1h-1zM251 128h1v1h-1zM251 118h1v1h-1zM251 108h1v1h-1zM251 98h1v1h-1zM251 88h1v1h-1zM251 78h1v1h-1zM251 68h1v1h-1zM251 58h1v1h-1zM251 48h1v1h-1zM251 38h1v1h-1zM251 28h1v1h-1zM251 18h1v1h-1zM251 8h1v1h-1zM261 569h1v1h-1zM261 559h1v1h-1zM261 549h1v1h-1zM261 539h1v1h-1zM261 529h1v1h-1zM261 519h1v1h-1zM261 509h1v1h-1zM261 499h1v1h-1zM261 489h1v1h-1zM261 479h1v1h-1zM261 469h1v1h-1zM261 459h1v1h-1zM261 449h1v1h-1zM261 439h1v1h-1zM261 428h1v1h-1zM261 418h1v1h-1zM261 408h1v1h-1zM261 398h1v1h-1zM261 388h1v1h-1zM261 378h1v1h-1zM261 368h1v1h-1zM261 358h1v1h-1zM261 348h1v1h-1zM261 338h1v1h-1zM261 328h1v1h-1zM261 318h1v1h-1zM261 308h1v1h-1zM261 298h1v1h-1zM261 288h1v1h-1zM261 278h1v1h-1zM261 268h1v1h-1zM261 258h1v1h-1zM261 248h1v1h-1zM261 238h1v1h-1zM261 228h1v1h-1zM261 218h1v1h-1zM261 208h1v1h-1zM261 198h1v1h-1zM261 188h1v1h-1zM261 178h1v1h-1zM261 168h1v1h-1zM261 158h1v1h-1zM261 148h1v1h-1zM261 138h1v1h-1zM261 128h1v1h-1zM261 118h1v1h-1zM261 108h1v1h-1zM261 98h1v1h-1zM261 88h1v1h-1zM261 78h1v1h-1zM261 68h1v1h-1zM261 58h1v1h-1zM261 48h1v1h-1zM261 38h1v1h-1zM261 28h1v1h-1zM261 18h1v1h-1zM261 8h1v1h-1zM271 569h1v1h-1zM271 559h1v1h-1zM271 549h1v1h-1zM271 539h1v1h-1zM271 529h1v1h-1zM271 519h1v1h-1zM271 509h1v1h-1zM271 499h1v1h-1zM271 489h1v1h-1zM271 479h1v1h-1zM271 469h1v1h-1zM271 459h1v1h-1zM271 449h1v1h-1zM271 439h1v1h-1zM271 428h1v1h-1zM271 418h1v1h-1zM271 408h1v1h-1zM271 398h1v1h-1zM271 388h1v1h-1zM271 378h1v1h-1zM271 368h1v1h-1zM271 358h1v1h-1zM271 348h1v1h-1zM271 338h1v1h-1zM271 328h1v1h-1zM271 318h1v1h-1zM271 308h1v1h-1zM271 298h1v1h-1zM271 288h1v1h-1zM271 278h1v1h-1zM271 268h1v1h-1zM271 258h1v1h-1zM271 248h1v1h-1zM271 238h1v1h-1zM271 228h1v1h-1zM271 218h1v1h-1zM271 208h1v1h-1zM271 198h1v1h-1zM271 188h1v1h-1zM271 178h1v1h-1zM271 168h1v1h-1zM271 158h1v1h-1zM271 148h1v1h-1zM271 138h1v1h-1zM271 128h1v1h-1zM271 118h1v1h-1zM271 108h1v1h-1zM271 98h1v1h-1zM271 88h1v1h-1zM271 78h1v1h-1zM271 68h1v1h-1zM271 58h1v1h-1zM271 48h1v1h-1zM271 38h1v1h-1zM271 28h1v1h-1zM271 18h1v1h-1zM271 8h1v1h-1zM281 569h1v1h-1zM281 559h1v1h-1zM281 549h1v1h-1zM281 539h1v1h-1zM281 529h1v1h-1zM281 519h1v1h-1zM281 509h1v1h-1zM281 499h1v1h-1zM281 489h1v1h-1zM281 479h1v1h-1zM281 469h1v1h-1zM281 459h1v1h-1zM281 449h1v1h-1zM281 439h1v1h-1zM281 428h1v1h-1zM281 418h1v1h-1zM281 408h1v1h-1zM281 398h1v1h-1zM281 388h1v1h-1zM281 378h1v1h-1zM281 368h1v1h-1zM281 358h1v1h-1zM281 348h1v1h-1zM281 338h1v1h-1zM281 328h1v1h-1zM281 318h1v1h-1zM281 308h1v1h-1zM281 298h1v1h-1zM281 288h1v1h-1zM281 278h1v1h-1zM281 268h1v1h-1zM281 258h1v1h-1zM281 248h1v1h-1zM281 238h1v1h-1zM281 228h1v1h-1zM281 218h1v1h-1zM281 208h1v1h-1zM281 198h1v1h-1zM281 188h1v1h-1zM281 178h1v1h-1zM281 168h1v1h-1zM281 158h1v1h-1zM281 148h1v1h-1zM281 138h1v1h-1zM281 128h1v1h-1zM281 118h1v1h-1zM281 108h1v1h-1zM281 98h1v1h-1zM281 88h1v1h-1zM281 78h1v1h-1zM281 68h1v1h-1zM281 58h1v1h-1zM281 48h1v1h-1zM281 38h1v1h-1zM281 28h1v1h-1zM281 18h1v1h-1zM281 8h1v1h-1zM291 569h1v1h-1zM291 559h1v1h-1zM291 549h1v1h-1zM291 539h1v1h-1zM291 529h1v1h-1zM291 519h1v1h-1zM291 509h1v1h-1zM291 499h1v1h-1zM291 489h1v1h-1zM291 479h1v1h-1zM291 469h1v1h-1zM291 459h1v1h-1zM291 449h1v1h-1zM291 439h1v1h-1zM291 428h1v1h-1zM291 418h1v1h-1zM291 408h1v1h-1zM291 398h1v1h-1zM291 388h1v1h-1zM291 378h1v1h-1zM291 368h1v1h-1zM291 358h1v1h-1zM291 348h1v1h-1zM291 338h1v1h-1zM291 328h1v1h-1zM291 318h1v1h-1zM291 308h1v1h-1zM291 298h1v1h-1zM291 288h1v1h-1zM291 278h1v1h-1zM291 268h1v1h-1zM291 258h1v1h-1zM291 248h1v1h-1zM291 238h1v1h-1zM291 228h1v1h-1zM291 218h1v1h-1zM291 208h1v1h-1zM291 198h1v1h-1zM291 188h1v1h-1zM291 178h1v1h-1zM291 168h1v1h-1zM291 158h1v1h-1zM291 148h1v1h-1zM291 138h1v1h-1zM291 128h1v1h-1zM291 118h1v1h-1zM291 108h1v1h-1zM291 98h1v1h-1zM291 88h1v1h-1zM291 78h1v1h-1zM291 68h1v1h-1zM291 58h1v1h-1zM291 48h1v1h-1zM291 38h1v1h-1zM291 28h1v1h-1zM291 18h1v1h-1zM291 8h1v1h-1zM301 569h1v1h-1zM301 559h1v1h-1zM301 549h1v1h-1zM301 539h1v1h-1zM301 529h1v1h-1zM301 519h1v1h-1zM301 509h1v1h-1zM301 499h1v1h-1zM301 489h1v1h-1zM301 479h1v1h-1zM301 469h1v1h-1zM301 459h1v1h-1zM301 449h1v1h-1zM301 439h1v1h-1zM301 428h1v1h-1zM301 418h1v1h-1zM301 408h1v1h-1zM301 398h1v1h-1zM301 388h1v1h-1zM301 378h1v1h-1zM301 368h1v1h-1zM301 358h1v1h-1zM301 348h1v1h-1zM301 338h1v1h-1zM301 328h1v1h-1zM301 318h1v1h-1zM301 308h1v1h-1zM301 298h1v1h-1zM301 288h1v1h-1zM301 278h1v1h-1zM301 268h1v1h-1zM301 258h1v1h-1zM301 248h1v1h-1zM301 238h1v1h-1zM301 228h1v1h-1zM301 218h1v1h-1zM301 208h1v1h-1zM301 198h1v1h-1zM301 188h1v1h-1zM301 178h1v1h-1zM301 168h1v1h-1zM301 158h1v1h-1zM301 148h1v1h-1zM301 138h1v1h-1zM301 128h1v1h-1zM301 118h1v1h-1zM301 108h1v1h-1zM301 98h1v1h-1zM301 88h1v1h-1zM301 78h1v1h-1zM301 68h1v1h-1zM301 58h1v1h-1zM301 48h1v1h-1zM301 38h1v1h-1zM301 28h1v1h-1zM301 18h1v1h-1zM301 8h1v1h-1zM311 569h1v1h-1zM311 559h1v1h-1zM311 549h1v1h-1zM311 539h1v1h-1zM311 529h1v1h-1zM311 519h1v1h-1zM311 509h1v1h-1zM311 499h1v1h-1zM311 489h1v1h-1zM311 479h1v1h-1zM311 469h1v1h-1zM311 459h1v1h-1zM311 449h1v1h-1zM311 439h1v1h-1zM311 428h1v1h-1zM311 418h1v1h-1zM311 408h1v1h-1zM311 398h1v1h-1zM311 388h1v1h-1zM311 378h1v1h-1zM311 368h1v1h-1zM311 358h1v1h-1zM311 348h1v1h-1zM311 338h1v1h-1zM311 328h1v1h-1zM311 318h1v1h-1zM311 308h1v1h-1zM311 298h1v1h-1zM311 288h1v1h-1zM311 278h1v1h-1zM311 268h1v1h-1zM311 258h1v1h-1zM311 248h1v1h-1zM311 238h1v1h-1zM311 228h1v1h-1zM311 218h1v1h-1zM311 208h1v1h-1zM311 198h1v1h-1zM311 188h1v1h-1zM311 178h1v1h-1zM311 168h1v1h-1zM311 158h1v1h-1zM311 148h1v1h-1zM311 138h1v1h-1zM311 128h1v1h-1zM311 118h1v1h-1zM311 108h1v1h-1zM311 98h1v1h-1zM311 88h1v1h-1zM311 78h1v1h-1zM311 68h1v1h-1zM311 58h1v1h-1zM311 48h1v1h-1zM311 38h1v1h-1zM311 28h1v1h-1zM311 18h1v1h-1zM311 8h1v1h-1zM321 569h1v1h-1zM321 559h1v1h-1zM321 549h1v1h-1zM321 539h1v1h-1zM321 529h1v1h-1zM321 519h1v1h-1zM321 509h1v1h-1zM321 499h1v1h-1zM321 489h1v1h-1zM321 479h1v1h-1zM321 469h1v1h-1zM321 459h1v1h-1zM321 449h1v1h-1zM321 439h1v1h-1zM321 428h1v1h-1zM321 418h1v1h-1zM321 408h1v1h-1zM321 398h1v1h-1zM321 388h1v1h-1zM321 378h1v1h-1zM321 368h1v1h-1zM321 358h1v1h-1zM321 348h1v1h-1zM321 338h1v1h-1zM321 328h1v1h-1zM321 318h1v1h-1zM321 308h1v1h-1zM321 298h1v1h-1zM321 288h1v1h-1zM321 278h1v1h-1zM321 268h1v1h-1zM321 258h1v1h-1zM321 248h1v1h-1zM321 238h1v1h-1zM321 228h1v1h-1zM321 218h1v1h-1zM321 208h1v1h-1zM321 198h1v1h-1zM321 188h1v1h-1zM321 178h1v1h-1zM321 168h1v1h-1zM321 158h1v1h-1zM321 148h1v1h-1zM321 138h1v1h-1zM321 128h1v1h-1zM321 118h1v1h-1zM321 108h1v1h-1zM321 98h1v1h-1zM321 88h1v1h-1zM321 78h1v1h-1zM321 68h1v1h-1zM321 58h1v1h-1zM321 48h1v1h-1zM321 38h1v1h-1zM321 28h1v1h-1zM321 18h1v1h-1zM321 8h1v1h-1zM331 569h1v1h-1zM331 559h1v1h-1zM331 549h1v1h-1zM331 539h1v1h-1zM331 529h1v1h-1zM331 519h1v1h-1zM331 509h1v1h-1zM331 499h1v1h-1zM331 489h1v1h-1zM331 479h1v1h-1zM331 469h1v1h-1zM331 459h1v1h-1zM331 449h1v1h-1zM331 439h1v1h-1zM331 428h1v1h-1zM331 418h1v1h-1zM331 408h1v1h-1zM331 398h1v1h-1zM331 388h1v1h-1zM331 378h1v1h-1zM331 368h1v1h-1zM331 358h1v1h-1zM331 348h1v1h-1zM331 338h1v1h-1zM331 328h1v1h-1zM331 318h1v1h-1zM331 308h1v1h-1zM331 298h1v1h-1zM331 288h1v1h-1zM331 278h1v1h-1zM331 268h1v1h-1zM331 258h1v1h-1zM331 248h1v1h-1zM331 238h1v1h-1zM331 228h1v1h-1zM331 218h1v1h-1zM331 208h1v1h-1zM331 198h1v1h-1zM331 188h1v1h-1zM331 178h1v1h-1zM331 168h1v1h-1zM331 158h1v1h-1zM331 148h1v1h-1zM331 138h1v1h-1zM331 128h1v1h-1zM331 118h1v1h-1zM331 108h1v1h-1zM331 98h1v1h-1zM331 88h1v1h-1zM331 78h1v1h-1zM331 68h1v1h-1zM331 58h1v1h-1zM331 48h1v1h-1zM331 38h1v1h-1zM331 28h1v1h-1zM331 18h1v1h-1zM331 8h1v1h-1zM341 569h1v1h-1zM341 559h1v1h-1zM341 549h1v1h-1zM341 539h1v1h-1zM341 529h1v1h-1zM341 519h1v1h-1zM341 509h1v1h-1zM341 499h1v1h-1zM341 489h1v1h-1zM341 479h1v1h-1zM341 469h1v1h-1zM341 459h1v1h-1zM341 449h1v1h-1zM341 439h1v1h-1zM341 428h1v1h-1zM341 418h1v1h-1zM341 408h1v1h-1zM341 398h1v1h-1zM341 388h1v1h-1zM341 378h1v1h-1zM341 368h1v1h-1zM341 358h1v1h-1zM341 348h1v1h-1zM341 338h1v1h-1zM341 328h1v1h-1zM341 318h1v1h-1zM341 308h1v1h-1zM341 298h1v1h-1zM341 288h1v1h-1zM341 278h1v1h-1zM341 268h1v1h-1zM341 258h1v1h-1zM341 248h1v1h-1zM341 238h1v1h-1zM341 228h1v1h-1zM341 218h1v1h-1zM341 208h1v1h-1zM341 198h1v1h-1zM341 188h1v1h-1zM341 178h1v1h-1zM341 168h1v1h-1zM341 158h1v1h-1zM341 148h1v1h-1zM341 138h1v1h-1zM341 128h1v1h-1zM341 118h1v1h-1zM341 108h1v1h-1zM341 98h1v1h-1zM341 88h1v1h-1zM341 78h1v1h-1zM341 68h1v1h-1zM341 58h1v1h-1zM341 48h1v1h-1zM341 38h1v1h-1zM341 28h1v1h-1zM341 18h1v1h-1zM341 8h1v1h-1zM351 569h1v1h-1zM351 559h1v1h-1zM351 549h1v1h-1zM351 539h1v1h-1zM351 529h1v1h-1zM351 519h1v1h-1zM351 509h1v1h-1zM351 499h1v1h-1zM351 489h1v1h-1zM351 479h1v1h-1zM351 469h1v1h-1zM351 459h1v1h-1zM351 449h1v1h-1zM351 439h1v1h-1zM351 428h1v1h-1zM351 418h1v1h-1zM351 408h1v1h-1zM351 398h1v1h-1zM351 388h1v1h-1zM351 378h1v1h-1zM351 368h1v1h-1zM351 358h1v1h-1zM351 348h1v1h-1zM351 338h1v1h-1zM351 328h1v1h-1zM351 318h1v1h-1zM351 308h1v1h-1zM351 298h1v1h-1zM351 288h1v1h-1zM351 278h1v1h-1zM351 268h1v1h-1zM351 258h1v1h-1zM351 248h1v1h-1zM351 238h1v1h-1zM351 228h1v1h-1zM351 218h1v1h-1zM351 208h1v1h-1zM351 198h1v1h-1zM351 188h1v1h-1zM351 178h1v1h-1zM351 168h1v1h-1zM351 158h1v1h-1zM351 148h1v1h-1zM351 138h1v1h-1zM351 128h1v1h-1zM351 118h1v1h-1zM351 108h1v1h-1zM351 98h1v1h-1zM351 88h1v1h-1zM351 78h1v1h-1zM351 68h1v1h-1zM351 58h1v1h-1zM351 48h1v1h-1zM351 38h1v1h-1zM351 28h1v1h-1zM351 18h1v1h-1zM351 8h1v1h-1zM361 569h1v1h-1zM361 559h1v1h-1zM361 549h1v1h-1zM361 539h1v1h-1zM361 529h1v1h-1zM361 519h1v1h-1zM361 509h1v1h-1zM361 499h1v1h-1zM361 489h1v1h-1zM361 479h1v1h-1zM361 469h1v1h-1zM361 459h1v1h-1zM361 449h1v1h-1zM361 439h1v1h-1zM361 428h1v1h-1zM361 418h1v1h-1zM361 408h1v1h-1zM361 398h1v1h-1zM361 388h1v1h-1zM361 378h1v1h-1zM361 368h1v1h-1zM361 358h1v1h-1zM361 348h1v1h-1zM361 338h1v1h-1zM361 328h1v1h-1zM361 318h1v1h-1zM361 308h1v1h-1zM361 298h1v1h-1zM361 288h1v1h-1zM361 278h1v1h-1zM361 268h1v1h-1zM361 258h1v1h-1zM361 248h1v1h-1zM361 238h1v1h-1zM361 228h1v1h-1zM361 218h1v1h-1zM361 208h1v1h-1zM361 198h1v1h-1zM361 188h1v1h-1zM361 178h1v1h-1zM361 168h1v1h-1zM361 158h1v1h-1zM361 148h1v1h-1zM361 138h1v1h-1zM361 128h1v1h-1zM361 118h1v1h-1zM361 108h1v1h-1zM361 98h1v1h-1zM361 88h1v1h-1zM361 78h1v1h-1zM361 68h1v1h-1zM361 58h1v1h-1zM361 48h1v1h-1zM361 38h1v1h-1zM361 28h1v1h-1zM361 18h1v1h-1zM361 8h1v1h-1zM371 569h1v1h-1zM371 559h1v1h-1zM371 549h1v1h-1zM371 539h1v1h-1zM371 529h1v1h-1zM371 519h1v1h-1zM371 509h1v1h-1zM371 499h1v1h-1zM371 489h1v1h-1zM371 479h1v1h-1zM371 469h1v1h-1zM371 459h1v1h-1zM371 449h1v1h-1zM371 439h1v1h-1zM371 428h1v1h-1zM371 418h1v1h-1zM371 408h1v1h-1zM371 398h1v1h-1zM371 388h1v1h-1zM371 378h1v1h-1zM371 368h1v1h-1zM371 358h1v1h-1zM371 348h1v1h-1zM371 338h1v1h-1zM371 328h1v1h-1zM371 318h1v1h-1zM371 308h1v1h-1zM371 298h1v1h-1zM371 288h1v1h-1zM371 278h1v1h-1zM371 268h1v1h-1zM371 258h1v1h-1zM371 248h1v1h-1zM371 238h1v1h-1zM371 228h1v1h-1zM371 218h1v1h-1zM371 208h1v1h-1zM371 198h1v1h-1zM371 188h1v1h-1zM371 178h1v1h-1zM371 168h1v1h-1zM371 158h1v1h-1zM371 148h1v1h-1zM371 138h1v1h-1zM371 128h1v1h-1zM371 118h1v1h-1zM371 108h1v1h-1zM371 98h1v1h-1zM371 88h1v1h-1zM371 78h1v1h-1zM371 68h1v1h-1zM371 58h1v1h-1zM371 48h1v1h-1zM371 38h1v1h-1zM371 28h1v1h-1zM371 18h1v1h-1zM371 8h1v1h-1zM382 569h1v1h-1zM382 559h1v1h-1zM382 549h1v1h-1zM382 539h1v1h-1zM382 529h1v1h-1zM382 519h1v1h-1zM382 509h1v1h-1zM382 499h1v1h-1zM382 489h1v1h-1zM382 479h1v1h-1zM382 469h1v1h-1zM382 459h1v1h-1zM382 449h1v1h-1zM382 439h1v1h-1zM382 428h1v1h-1zM382 418h1v1h-1zM382 408h1v1h-1zM382 398h1v1h-1zM382 388h1v1h-1zM382 378h1v1h-1zM382 368h1v1h-1zM382 358h1v1h-1zM382 348h1v1h-1zM382 338h1v1h-1zM382 328h1v1h-1zM382 318h1v1h-1zM382 308h1v1h-1zM382 298h1v1h-1zM382 288h1v1h-1zM382 278h1v1h-1zM382 268h1v1h-1zM382 258h1v1h-1zM382 248h1v1h-1zM382 238h1v1h-1zM382 228h1v1h-1zM382 218h1v1h-1zM382 208h1v1h-1zM382 198h1v1h-1zM382 188h1v1h-1zM382 178h1v1h-1zM382 168h1v1h-1zM382 158h1v1h-1zM382 148h1v1h-1zM382 138h1v1h-1zM382 128h1v1h-1zM382 118h1v1h-1zM382 108h1v1h-1zM382 98h1v1h-1zM382 88h1v1h-1zM382 78h1v1h-1zM382 68h1v1h-1zM382 58h1v1h-1zM382 48h1v1h-1zM382 38h1v1h-1zM382 28h1v1h-1zM382 18h1v1h-1zM382 8h1v1h-1zM392 569h1v1h-1zM392 559h1v1h-1zM392 549h1v1h-1zM392 539h1v1h-1zM392 529h1v1h-1zM392 519h1v1h-1zM392 509h1v1h-1zM392 499h1v1h-1zM392 489h1v1h-1zM392 479h1v1h-1zM392 469h1v1h-1zM392 459h1v1h-1zM392 449h1v1h-1zM392 439h1v1h-1zM392 428h1v1h-1zM392 418h1v1h-1zM392 408h1v1h-1zM392 398h1v1h-1zM392 388h1v1h-1zM392 378h1v1h-1zM392 368h1v1h-1zM392 358h1v1h-1zM392 348h1v1h-1zM392 338h1v1h-1zM392 328h1v1h-1zM392 318h1v1h-1zM392 308h1v1h-1zM392 298h1v1h-1zM392 288h1v1h-1zM392 278h1v1h-1zM392 268h1v1h-1zM392 258h1v1h-1zM392 248h1v1h-1zM392 238h1v1h-1zM392 228h1v1h-1zM392 218h1v1h-1zM392 208h1v1h-1zM392 198h1v1h-1zM392 188h1v1h-1zM392 178h1v1h-1zM392 168h1v1h-1zM392 158h1v1h-1zM392 148h1v1h-1zM392 138h1v1h-1zM392 128h1v1h-1zM392 118h1v1h-1zM392 108h1v1h-1zM392 98h1v1h-1zM392 88h1v1h-1zM392 78h1v1h-1zM392 68h1v1h-1zM392 58h1v1h-1zM392 48h1v1h-1zM392 38h1v1h-1zM392 28h1v1h-1zM392 18h1v1h-1zM392 8h1v1h-1zM402 569h1v1h-1zM402 559h1v1h-1zM402 549h1v1h-1zM402 539h1v1h-1zM402 529h1v1h-1zM402 519h1v1h-1zM402 509h1v1h-1zM402 499h1v1h-1zM402 489h1v1h-1zM402 479h1v1h-1zM402 469h1v1h-1zM402 459h1v1h-1zM402 449h1v1h-1zM402 439h1v1h-1zM402 428h1v1h-1zM402 418h1v1h-1zM402 408h1v1h-1zM402 398h1v1h-1zM402 388h1v1h-1zM402 378h1v1h-1zM402 368h1v1h-1zM402 358h1v1h-1zM402 348h1v1h-1zM402 338h1v1h-1zM402 328h1v1h-1zM402 318h1v1h-1zM402 308h1v1h-1zM402 298h1v1h-1zM402 288h1v1h-1zM402 278h1v1h-1zM402 268h1v1h-1zM402 258h1v1h-1zM402 248h1v1h-1zM402 238h1v1h-1zM402 228h1v1h-1zM402 218h1v1h-1zM402 208h1v1h-1zM402 198h1v1h-1zM402 188h1v1h-1zM402 178h1v1h-1zM402 168h1v1h-1zM402 158h1v1h-1zM402 148h1v1h-1zM402 138h1v1h-1zM402 128h1v1h-1zM402 118h1v1h-1zM402 108h1v1h-1zM402 98h1v1h-1zM402 88h1v1h-1zM402 78h1v1h-1zM402 68h1v1h-1zM402 58h1v1h-1zM402 48h1v1h-1zM402 38h1v1h-1zM402 28h1v1h-1zM402 18h1v1h-1zM402 8h1v1h-1zM412 569h1v1h-1zM412 559h1v1h-1zM412 549h1v1h-1zM412 539h1v1h-1zM412 529h1v1h-1zM412 519h1v1h-1zM412 509h1v1h-1zM412 499h1v1h-1zM412 489h1v1h-1zM412 479h1v1h-1zM412 469h1v1h-1zM412 459h1v1h-1zM412 449h1v1h-1zM412 439h1v1h-1zM412 428h1v1h-1zM412 418h1v1h-1zM412 408h1v1h-1zM412 398h1v1h-1zM412 388h1v1h-1zM412 378h1v1h-1zM412 368h1v1h-1zM412 358h1v1h-1zM412 348h1v1h-1zM412 338h1v1h-1zM412 328h1v1h-1zM412 318h1v1h-1zM412 308h1v1h-1zM412 298h1v1h-1zM412 288h1v1h-1zM412 278h1v1h-1zM412 268h1v1h-1zM412 258h1v1h-1zM412 248h1v1h-1zM412 238h1v1h-1zM412 228h1v1h-1zM412 218h1v1h-1zM412 208h1v1h-1zM412 198h1v1h-1zM412 188h1v1h-1zM412 178h1v1h-1zM412 168h1v1h-1zM412 158h1v1h-1zM412 148h1v1h-1zM412 138h1v1h-1zM412 128h1v1h-1zM412 118h1v1h-1zM412 108h1v1h-1zM412 98h1v1h-1zM412 88h1v1h-1zM412 78h1v1h-1zM412 68h1v1h-1zM412 58h1v1h-1zM412 48h1v1h-1zM412 38h1v1h-1zM412 28h1v1h-1zM412 18h1v1h-1zM412 8h1v1h-1zM422 569h1v1h-1zM422 559h1v1h-1zM422 549h1v1h-1zM422 539h1v1h-1zM422 529h1v1h-1zM422 519h1v1h-1zM422 509h1v1h-1zM422 499h1v1h-1zM422 489h1v1h-1zM422 479h1v1h-1zM422 469h1v1h-1zM422 459h1v1h-1zM422 449h1v1h-1zM422 439h1v1h-1zM422 428h1v1h-1zM422 418h1v1h-1zM422 408h1v1h-1zM422 398h1v1h-1zM422 388h1v1h-1zM422 378h1v1h-1zM422 368h1v1h-1zM422 358h1v1h-1zM422 348h1v1h-1zM422 338h1v1h-1zM422 328h1v1h-1zM422 318h1v1h-1zM422 308h1v1h-1zM422 298h1v1h-1zM422 288h1v1h-1zM422 278h1v1h-1zM422 268h1v1h-1zM422 258h1v1h-1zM422 248h1v1h-1zM422 238h1v1h-1zM422 228h1v1h-1zM422 218h1v1h-1zM422 208h1v1h-1zM422 198h1v1h-1zM422 188h1v1h-1zM422 178h1v1h-1zM422 168h1v1h-1zM422 158h1v1h-1zM422 148h1v1h-1zM422 138h1v1h-1zM422 128h1v1h-1zM422 118h1v1h-1zM422 108h1v1h-1zM422 98h1v1h-1zM422 88h1v1h-1zM422 78h1v1h-1zM422 68h1v1h-1zM422 58h1v1h-1zM422 48h1v1h-1zM422 38h1v1h-1zM422 28h1v1h-1zM422 18h1v1h-1zM422 8h1v1h-1zM432 569h1v1h-1zM432 559h1v1h-1zM432 549h1v1h-1zM432 539h1v1h-1zM432 529h1v1h-1zM432 519h1v1h-1zM432 509h1v1h-1zM432 499h1v1h-1zM432 489h1v1h-1zM432 479h1v1h-1zM432 469h1v1h-1zM432 459h1v1h-1zM432 449h1v1h-1zM432 439h1v1h-1zM432 428h1v1h-1zM432 418h1v1h-1zM432 408h1v1h-1zM432 398h1v1h-1zM432 388h1v1h-1zM432 378h1v1h-1zM432 368h1v1h-1zM432 358h1v1h-1zM432 348h1v1h-1zM432 338h1v1h-1zM432 328h1v1h-1zM432 318h1v1h-1zM432 308h1v1h-1zM432 298h1v1h-1zM432 288h1v1h-1zM432 278h1v1h-1zM432 268h1v1h-1zM432 258h1v1h-1zM432 248h1v1h-1zM432 238h1v1h-1zM432 228h1v1h-1zM432 218h1v1h-1zM432 208h1v1h-1zM432 198h1v1h-1zM432 188h1v1h-1zM432 178h1v1h-1zM432 168h1v1h-1zM432 158h1v1h-1zM432 148h1v1h-1zM432 138h1v1h-1zM432 128h1v1h-1zM432 118h1v1h-1zM432 108h1v1h-1zM432 98h1v1h-1zM432 88h1v1h-1zM432 78h1v1h-1zM432 68h1v1h-1zM432 58h1v1h-1zM432 48h1v1h-1zM432 38h1v1h-1zM432 28h1v1h-1zM432 18h1v1h-1zM432 8h1v1h-1zM442 569h1v1h-1zM442 559h1v1h-1zM442 549h1v1h-1zM442 539h1v1h-1zM442 529h1v1h-1zM442 519h1v1h-1zM442 509h1v1h-1zM442 499h1v1h-1zM442 489h1v1h-1zM442 479h1v1h-1zM442 469h1v1h-1zM442 459h1v1h-1zM442 449h1v1h-1zM442 439h1v1h-1zM442 428h1v1h-1zM442 418h1v1h-1zM442 408h1v1h-1zM442 398h1v1h-1zM442 388h1v1h-1zM442 378h1v1h-1zM442 368h1v1h-1zM442 358h1v1h-1zM442 348h1v1h-1zM442 338h1v1h-1zM442 328h1v1h-1zM442 318h1v1h-1zM442 308h1v1h-1zM442 298h1v1h-1zM442 288h1v1h-1zM442 278h1v1h-1zM442 268h1v1h-1zM442 258h1v1h-1zM442 248h1v1h-1zM442 238h1v1h-1zM442 228h1v1h-1zM442 218h1v1h-1zM442 208h1v1h-1zM442 198h1v1h-1zM442 188h1v1h-1zM442 178h1v1h-1zM442 168h1v1h-1zM442 158h1v1h-1zM442 148h1v1h-1zM442 138h1v1h-1zM442 128h1v1h-1zM442 118h1v1h-1zM442 108h1v1h-1zM442 98h1v1h-1zM442 88h1v1h-1zM442 78h1v1h-1zM442 68h1v1h-1zM442 58h1v1h-1zM442 48h1v1h-1zM442 38h1v1h-1zM442 28h1v1h-1zM442 18h1v1h-1zM442 8h1v1h-1zM452 569h1v1h-1zM452 559h1v1h-1zM452 549h1v1h-1zM452 539h1v1h-1zM452 529h1v1h-1zM452 519h1v1h-1zM452 509h1v1h-1zM452 499h1v1h-1zM452 489h1v1h-1zM452 479h1v1h-1zM452 469h1v1h-1zM452 459h1v1h-1zM452 449h1v1h-1zM452 439h1v1h-1zM452 428h1v1h-1zM452 418h1v1h-1zM452 408h1v1h-1zM452 398h1v1h-1zM452 388h1v1h-1zM452 378h1v1h-1zM452 368h1v1h-1zM452 358h1v1h-1zM452 348h1v1h-1zM452 338h1v1h-1zM452 328h1v1h-1zM452 318h1v1h-1zM452 308h1v1h-1zM452 298h1v1h-1zM452 288h1v1h-1zM452 278h1v1h-1zM452 268h1v1h-1zM452 258h1v1h-1zM452 248h1v1h-1zM452 238h1v1h-1zM452 228h1v1h-1zM452 218h1v1h-1zM452 208h1v1h-1zM452 198h1v1h-1zM452 188h1v1h-1zM452 178h1v1h-1zM452 168h1v1h-1zM452 158h1v1h-1zM452 148h1v1h-1zM452 138h1v1h-1zM452 128h1v1h-1zM452 118h1v1h-1zM452 108h1v1h-1zM452 98h1v1h-1zM452 88h1v1h-1zM452 78h1v1h-1zM452 68h1v1h-1zM452 58h1v1h-1zM452 48h1v1h-1zM452 38h1v1h-1zM452 28h1v1h-1zM452 18h1v1h-1zM452 8h1v1h-1zM462 569h1v1h-1zM462 559h1v1h-1zM462 549h1v1h-1zM462 539h1v1h-1zM462 529h1v1h-1zM462 519h1v1h-1zM462 509h1v1h-1zM462 499h1v1h-1zM462 489h1v1h-1zM462 479h1v1h-1zM462 469h1v1h-1zM462 459h1v1h-1zM462 449h1v1h-1zM462 439h1v1h-1zM462 428h1v1h-1zM462 418h1v1h-1zM462 408h1v1h-1zM462 398h1v1h-1zM462 388h1v1h-1zM462 378h1v1h-1zM462 368h1v1h-1zM462 358h1v1h-1zM462 348h1v1h-1zM462 338h1v1h-1zM462 328h1v1h-1zM462 318h1v1h-1zM462 308h1v1h-1zM462 298h1v1h-1zM462 288h1v1h-1zM462 278h1v1h-1zM462 268h1v1h-1zM462 258h1v1h-1zM462 248h1v1h-1zM462 238h1v1h-1zM462 228h1v1h-1zM462 218h1v1h-1zM462 208h1v1h-1zM462 198h1v1h-1zM462 188h1v1h-1zM462 178h1v1h-1zM462 168h1v1h-1zM462 158h1v1h-1zM462 148h1v1h-1zM462 138h1v1h-1zM462 128h1v1h-1zM462 118h1v1h-1zM462 108h1v1h-1zM462 98h1v1h-1zM462 88h1v1h-1zM462 78h1v1h-1zM462 68h1v1h-1zM462 58h1v1h-1zM462 48h1v1h-1zM462 38h1v1h-1zM462 28h1v1h-1zM462 18h1v1h-1zM462 8h1v1h-1zM472 569h1v1h-1zM472 559h1v1h-1zM472 549h1v1h-1zM472 539h1v1h-1zM472 529h1v1h-1zM472 519h1v1h-1zM472 509h1v1h-1zM472 499h1v1h-1zM472 489h1v1h-1zM472 479h1v1h-1zM472 469h1v1h-1zM472 459h1v1h-1zM472 449h1v1h-1zM472 439h1v1h-1zM472 428h1v1h-1zM472 418h1v1h-1zM472 408h1v1h-1zM472 398h1v1h-1zM472 388h1v1h-1zM472 378h1v1h-1zM472 368h1v1h-1zM472 358h1v1h-1zM472 348h1v1h-1zM472 338h1v1h-1zM472 328h1v1h-1zM472 318h1v1h-1zM472 308h1v1h-1zM472 298h1v1h-1zM472 288h1v1h-1zM472 278h1v1h-1zM472 268h1v1h-1zM472 258h1v1h-1zM472 248h1v1h-1zM472 238h1v1h-1zM472 228h1v1h-1zM472 218h1v1h-1zM472 208h1v1h-1zM472 198h1v1h-1zM472 188h1v1h-1zM472 178h1v1h-1zM472 168h1v1h-1zM472 158h1v1h-1zM472 148h1v1h-1zM472 138h1v1h-1zM472 128h1v1h-1zM472 118h1v1h-1zM472 108h1v1h-1zM472 98h1v1h-1zM472 88h1v1h-1zM472 78h1v1h-1zM472 68h1v1h-1zM472 58h1v1h-1zM472 48h1v1h-1zM472 38h1v1h-1zM472 28h1v1h-1zM472 18h1v1h-1zM472 8h1v1h-1zM482 569h1v1h-1zM482 559h1v1h-1zM482 549h1v1h-1zM482 539h1v1h-1zM482 529h1v1h-1zM482 519h1v1h-1zM482 509h1v1h-1zM482 499h1v1h-1zM482 489h1v1h-1zM482 479h1v1h-1zM482 469h1v1h-1zM482 459h1v1h-1zM482 449h1v1h-1zM482 439h1v1h-1zM482 428h1v1h-1zM482 418h1v1h-1zM482 408h1v1h-1zM482 398h1v1h-1zM482 388h1v1h-1zM482 378h1v1h-1zM482 368h1v1h-1zM482 358h1v1h-1zM482 348h1v1h-1zM482 338h1v1h-1zM482 328h1v1h-1zM482 318h1v1h-1zM482 308h1v1h-1zM482 298h1v1h-1zM482 288h1v1h-1zM482 278h1v1h-1zM482 268h1v1h-1zM482 258h1v1h-1zM482 248h1v1h-1zM482 238h1v1h-1zM482 228h1v1h-1zM482 218h1v1h-1zM482 208h1v1h-1zM482 198h1v1h-1zM482 188h1v1h-1zM482 178h1v1h-1zM482 168h1v1h-1zM482 158h1v1h-1zM482 148h1v1h-1zM482 138h1v1h-1zM482 128h1v1h-1zM482 118h1v1h-1zM482 108h1v1h-1zM482 98h1v1h-1zM482 88h1v1h-1zM482 78h1v1h-1zM482 68h1v1h-1zM482 58h1v1h-1zM482 48h1v1h-1zM482 38h1v1h-1zM482 28h1v1h-1zM482 18h1v1h-1zM482 8h1v1h-1zM492 569h1v1h-1zM492 559h1v1h-1zM492 549h1v1h-1zM492 539h1v1h-1zM492 529h1v1h-1zM492 519h1v1h-1zM492 509h1v1h-1zM492 499h1v1h-1zM492 489h1v1h-1zM492 479h1v1h-1zM492 469h1v1h-1zM492 459h1v1h-1zM492 449h1v1h-1zM492 439h1v1h-1zM492 428h1v1h-1zM492 418h1v1h-1zM492 408h1v1h-1zM492 398h1v1h-1zM492 388h1v1h-1zM492 378h1v1h-1zM492 368h1v1h-1zM492 358h1v1h-1zM492 348h1v1h-1zM492 338h1v1h-1zM492 328h1v1h-1zM492 318h1v1h-1zM492 308h1v1h-1zM492 298h1v1h-1zM492 288h1v1h-1zM492 278h1v1h-1zM492 268h1v1h-1zM492 258h1v1h-1zM492 248h1v1h-1zM492 238h1v1h-1zM492 228h1v1h-1zM492 218h1v1h-1zM492 208h1v1h-1zM492 198h1v1h-1zM492 188h1v1h-1zM492 178h1v1h-1zM492 168h1v1h-1zM492 158h1v1h-1zM492 148h1v1h-1zM492 138h1v1h-1zM492 128h1v1h-1zM492 118h1v1h-1zM492 108h1v1h-1zM492 98h1v1h-1zM492 88h1v1h-1zM492 78h1v1h-1zM492 68h1v1h-1zM492 58h1v1h-1zM492 48h1v1h-1zM492 38h1v1h-1zM492 28h1v1h-1zM492 18h1v1h-1zM492 8h1v1h-1zM502 569h1v1h-1zM502 559h1v1h-1zM502 549h1v1h-1zM502 539h1v1h-1zM502 529h1v1h-1zM502 519h1v1h-1zM502 509h1v1h-1zM502 499h1v1h-1zM502 489h1v1h-1zM502 479h1v1h-1zM502 469h1v1h-1zM502 459h1v1h-1zM502 449h1v1h-1zM502 439h1v1h-1zM502 428h1v1h-1zM502 418h1v1h-1zM502 408h1v1h-1zM502 398h1v1h-1zM502 388h1v1h-1zM502 378h1v1h-1zM502 368h1v1h-1zM502 358h1v1h-1zM502 348h1v1h-1zM502 338h1v1h-1zM502 328h1v1h-1zM502 318h1v1h-1zM502 308h1v1h-1zM502 298h1v1h-1zM502 288h1v1h-1zM502 278h1v1h-1zM502 268h1v1h-1zM502 258h1v1h-1zM502 248h1v1h-1zM502 238h1v1h-1zM502 228h1v1h-1zM502 218h1v1h-1zM502 208h1v1h-1zM502 198h1v1h-1zM502 188h1v1h-1zM502 178h1v1h-1zM502 168h1v1h-1zM502 158h1v1h-1zM502 148h1v1h-1zM502 138h1v1h-1zM502 128h1v1h-1zM502 118h1v1h-1zM502 108h1v1h-1zM502 98h1v1h-1zM502 88h1v1h-1zM502 78h1v1h-1zM502 68h1v1h-1zM502 58h1v1h-1zM502 48h1v1h-1zM502 38h1v1h-1zM502 28h1v1h-1zM502 18h1v1h-1zM502 8h1v1h-1zM512 569h1v1h-1zM512 559h1v1h-1zM512 549h1v1h-1zM512 539h1v1h-1zM512 529h1v1h-1zM512 519h1v1h-1zM512 509h1v1h-1zM512 499h1v1h-1zM512 489h1v1h-1zM512 479h1v1h-1zM512 469h1v1h-1zM512 459h1v1h-1zM512 449h1v1h-1zM512 439h1v1h-1zM512 428h1v1h-1zM512 418h1v1h-1zM512 408h1v1h-1zM512 398h1v1h-1zM512 388h1v1h-1zM512 378h1v1h-1zM512 368h1v1h-1zM512 358h1v1h-1zM512 348h1v1h-1zM512 338h1v1h-1zM512 328h1v1h-1zM512 318h1v1h-1zM512 308h1v1h-1zM512 298h1v1h-1zM512 288h1v1h-1zM512 278h1v1h-1zM512 268h1v1h-1zM512 258h1v1h-1zM512 248h1v1h-1zM512 238h1v1h-1zM512 228h1v1h-1zM512 218h1v1h-1zM512 208h1v1h-1zM512 198h1v1h-1zM512 188h1v1h-1zM512 178h1v1h-1zM512 168h1v1h-1zM512 158h1v1h-1zM512 148h1v1h-1zM512 138h1v1h-1zM512 128h1v1h-1zM512 118h1v1h-1zM512 108h1v1h-1zM512 98h1v1h-1zM512 88h1v1h-1zM512 78h1v1h-1zM512 68h1v1h-1zM512 58h1v1h-1zM512 48h1v1h-1zM512 38h1v1h-1zM512 28h1v1h-1zM512 18h1v1h-1zM512 8h1v1h-1zM522 569h1v1h-1zM522 559h1v1h-1zM522 549h1v1h-1zM522 539h1v1h-1zM522 529h1v1h-1zM522 519h1v1h-1zM522 509h1v1h-1zM522 499h1v1h-1zM522 489h1v1h-1zM522 479h1v1h-1zM522 469h1v1h-1zM522 459h1v1h-1zM522 449h1v1h-1zM522 439h1v1h-1zM522 428h1v1h-1zM522 418h1v1h-1zM522 408h1v1h-1zM522 398h1v1h-1zM522 388h1v1h-1zM522 378h1v1h-1zM522 368h1v1h-1zM522 358h1v1h-1zM522 348h1v1h-1zM522 338h1v1h-1zM522 328h1v1h-1zM522 318h1v1h-1zM522 308h1v1h-1zM522 298h1v1h-1zM522 288h1v1h-1zM522 278h1v1h-1zM522 268h1v1h-1zM522 258h1v1h-1zM522 248h1v1h-1zM522 238h1v1h-1zM522 228h1v1h-1zM522 218h1v1h-1zM522 208h1v1h-1zM522 198h1v1h-1zM522 188h1v1h-1zM522 178h1v1h-1zM522 168h1v1h-1zM522 158h1v1h-1zM522 148h1v1h-1zM522 138h1v1h-1zM522 128h1v1h-1zM522 118h1v1h-1zM522 108h1v1h-1zM522 98h1v1h-1zM522 88h1v1h-1zM522 78h1v1h-1zM522 68h1v1h-1zM522 58h1v1h-1zM522 48h1v1h-1zM522 38h1v1h-1zM522 28h1v1h-1zM522 18h1v1h-1zM522 8h1v1h-1zM532 569h1v1h-1zM532 559h1v1h-1zM532 549h1v1h-1zM532 539h1v1h-1zM532 529h1v1h-1zM532 519h1v1h-1zM532 509h1v1h-1zM532 499h1v1h-1zM532 489h1v1h-1zM532 479h1v1h-1zM532 469h1v1h-1zM532 459h1v1h-1zM532 449h1v1h-1zM532 439h1v1h-1zM532 428h1v1h-1zM532 418h1v1h-1zM532 408h1v1h-1zM532 398h1v1h-1zM532 388h1v1h-1zM532 378h1v1h-1zM532 368h1v1h-1zM532 358h1v1h-1zM532 348h1v1h-1zM532 338h1v1h-1zM532 328h1v1h-1zM532 318h1v1h-1zM532 308h1v1h-1zM532 298h1v1h-1zM532 288h1v1h-1zM532 278h1v1h-1zM532 268h1v1h-1zM532 258h1v1h-1zM532 248h1v1h-1zM532 238h1v1h-1zM532 228h1v1h-1zM532 218h1v1h-1zM532 208h1v1h-1zM532 198h1v1h-1zM532 188h1v1h-1zM532 178h1v1h-1zM532 168h1v1h-1zM532 158h1v1h-1zM532 148h1v1h-1zM532 138h1v1h-1zM532 128h1v1h-1zM532 118h1v1h-1zM532 108h1v1h-1zM532 98h1v1h-1zM532 88h1v1h-1zM532 78h1v1h-1zM532 68h1v1h-1zM532 58h1v1h-1zM532 48h1v1h-1zM532 38h1v1h-1zM532 28h1v1h-1zM532 18h1v1h-1zM532 8h1v1h-1zM542 569h1v1h-1zM542 559h1v1h-1zM542 549h1v1h-1zM542 539h1v1h-1zM542 529h1v1h-1zM542 519h1v1h-1zM542 509h1v1h-1zM542 499h1v1h-1zM542 489h1v1h-1zM542 479h1v1h-1zM542 469h1v1h-1zM542 459h1v1h-1zM542 449h1v1h-1zM542 439h1v1h-1zM542 428h1v1h-1zM542 418h1v1h-1zM542 408h1v1h-1zM542 398h1v1h-1zM542 388h1v1h-1zM542 378h1v1h-1zM542 368h1v1h-1zM542 358h1v1h-1zM542 348h1v1h-1zM542 338h1v1h-1zM542 328h1v1h-1zM542 318h1v1h-1zM542 308h1v1h-1zM542 298h1v1h-1zM542 288h1v1h-1zM542 278h1v1h-1zM542 268h1v1h-1zM542 258h1v1h-1zM542 248h1v1h-1zM542 238h1v1h-1zM542 228h1v1h-1zM542 218h1v1h-1zM542 208h1v1h-1zM542 198h1v1h-1zM542 188h1v1h-1zM542 178h1v1h-1zM542 168h1v1h-1zM542 158h1v1h-1zM542 148h1v1h-1zM542 138h1v1h-1zM542 128h1v1h-1zM542 118h1v1h-1zM542 108h1v1h-1zM542 98h1v1h-1zM542 88h1v1h-1zM542 78h1v1h-1zM542 68h1v1h-1zM542 58h1v1h-1zM542 48h1v1h-1zM542 38h1v1h-1zM542 28h1v1h-1zM542 18h1v1h-1zM542 8h1v1h-1zM552 569h1v1h-1zM552 559h1v1h-1zM552 549h1v1h-1zM552 539h1v1h-1zM552 529h1v1h-1zM552 519h1v1h-1zM552 509h1v1h-1zM552 499h1v1h-1zM552 489h1v1h-1zM552 479h1v1h-1zM552 469h1v1h-1zM552 459h1v1h-1zM552 449h1v1h-1zM552 439h1v1h-1zM552 428h1v1h-1zM552 418h1v1h-1zM552 408h1v1h-1zM552 398h1v1h-1zM552 388h1v1h-1zM552 378h1v1h-1zM552 368h1v1h-1zM552 358h1v1h-1zM552 348h1v1h-1zM552 338h1v1h-1zM552 328h1v1h-1zM552 318h1v1h-1zM552 308h1v1h-1zM552 298h1v1h-1zM552 288h1v1h-1zM552 278h1v1h-1zM552 268h1v1h-1zM552 258h1v1h-1zM552 248h1v1h-1zM552 238h1v1h-1zM552 228h1v1h-1zM552 218h1v1h-1zM552 208h1v1h-1zM552 198h1v1h-1zM552 188h1v1h-1zM552 178h1v1h-1zM552 168h1v1h-1zM552 158h1v1h-1zM552 148h1v1h-1zM552 138h1v1h-1zM552 128h1v1h-1zM552 118h1v1h-1zM552 108h1v1h-1zM552 98h1v1h-1zM552 88h1v1h-1zM552 78h1v1h-1zM552 68h1v1h-1zM552 58h1v1h-1zM552 48h1v1h-1zM552 38h1v1h-1zM552 28h1v1h-1zM552 18h1v1h-1zM552 8h1v1h-1zM562 569h1v1h-1zM562 559h1v1h-1zM562 549h1v1h-1zM562 539h1v1h-1zM562 529h1v1h-1zM562 519h1v1h-1zM562 509h1v1h-1zM562 499h1v1h-1zM562 489h1v1h-1zM562 479h1v1h-1zM562 469h1v1h-1zM562 459h1v1h-1zM562 449h1v1h-1zM562 439h1v1h-1zM562 428h1v1h-1zM562 418h1v1h-1zM562 408h1v1h-1zM562 398h1v1h-1zM562 388h1v1h-1zM562 378h1v1h-1zM562 368h1v1h-1zM562 358h1v1h-1zM562 348h1v1h-1zM562 338h1v1h-1zM562 328h1v1h-1zM562 318h1v1h-1zM562 308h1v1h-1zM562 298h1v1h-1zM562 288h1v1h-1zM562 278h1v1h-1zM562 268h1v1h-1zM562 258h1v1h-1zM562 248h1v1h-1zM562 238h1v1h-1zM562 228h1v1h-1zM562 218h1v1h-1zM562 208h1v1h-1zM562 198h1v1h-1zM562 188h1v1h-1zM562 178h1v1h-1zM562 168h1v1h-1zM562 158h1v1h-1zM562 148h1v1h-1zM562 138h1v1h-1zM562 128h1v1h-1zM562 118h1v1h-1zM562 108h1v1h-1zM562 98h1v1h-1zM562 88h1v1h-1zM562 78h1v1h-1zM562 68h1v1h-1zM562 58h1v1h-1zM562 48h1v1h-1zM562 38h1v1h-1zM562 28h1v1h-1zM562 18h1v1h-1zM562 8h1v1h-1zM572 569h1v1h-1zM572 559h1v1h-1zM572 549h1v1h-1zM572 539h1v1h-1zM572 529h1v1h-1zM572 519h1v1h-1zM572 509h1v1h-1zM572 499h1v1h-1zM572 489h1v1h-1zM572 479h1v1h-1zM572 469h1v1h-1zM572 459h1v1h-1zM572 449h1v1h-1zM572 439h1v1h-1zM572 428h1v1h-1zM572 418h1v1h-1zM572 408h1v1h-1zM572 398h1v1h-1zM572 388h1v1h-1zM572 378h1v1h-1zM572 368h1v1h-1zM572 358h1v1h-1zM572 348h1v1h-1zM572 338h1v1h-1zM572 328h1v1h-1zM572 318h1v1h-1zM572 308h1v1h-1zM572 298h1v1h-1zM572 288h1v1h-1zM572 278h1v1h-1zM572 268h1v1h-1zM572 258h1v1h-1zM572 248h1v1h-1zM572 238h1v1h-1zM572 228h1v1h-1zM572 218h1v1h-1zM572 208h1v1h-1zM572 198h1v1h-1zM572 188h1v1h-1zM572 178h1v1h-1zM572 168h1v1h-1zM572 158h1v1h-1zM572 148h1v1h-1zM572 138h1v1h-1zM572 128h1v1h-1zM572 118h1v1h-1zM572 108h1v1h-1zM572 98h1v1h-1zM572 88h1v1h-1zM572 78h1v1h-1zM572 68h1v1h-1zM572 58h1v1h-1zM572 48h1v1h-1zM572 38h1v1h-1zM572 28h1v1h-1zM572 18h1v1h-1zM572 8h1v1h-1zM582 569h1v1h-1zM582 559h1v1h-1zM582 549h1v1h-1zM582 539h1v1h-1zM582 529h1v1h-1zM582 519h1v1h-1zM582 509h1v1h-1zM582 499h1v1h-1zM582 489h1v1h-1zM582 479h1v1h-1zM582 469h1v1h-1zM582 459h1v1h-1zM582 449h1v1h-1zM582 439h1v1h-1zM582 428h1v1h-1zM582 418h1v1h-1zM582 408h1v1h-1zM582 398h1v1h-1zM582 388h1v1h-1zM582 378h1v1h-1zM582 368h1v1h-1zM582 358h1v1h-1zM582 348h1v1h-1zM582 338h1v1h-1zM582 328h1v1h-1zM582 318h1v1h-1zM582 308h1v1h-1zM582 298h1v1h-1zM582 288h1v1h-1zM582 278h1v1h-1zM582 268h1v1h-1zM582 258h1v1h-1zM582 248h1v1h-1zM582 238h1v1h-1zM582 228h1v1h-1zM582 218h1v1h-1zM582 208h1v1h-1zM582 198h1v1h-1zM582 188h1v1h-1zM582 178h1v1h-1zM582 168h1v1h-1zM582 158h1v1h-1zM582 148h1v1h-1zM582 138h1v1h-1zM582 128h1v1h-1zM582 118h1v1h-1zM582 108h1v1h-1zM582 98h1v1h-1zM582 88h1v1h-1zM582 78h1v1h-1zM582 68h1v1h-1zM582 58h1v1h-1zM582 48h1v1h-1zM582 38h1v1h-1zM582 28h1v1h-1zM582 18h1v1h-1zM582 8h1v1h-1zM592 569h1v1h-1zM592 559h1v1h-1zM592 549h1v1h-1zM592 539h1v1h-1zM592 529h1v1h-1zM592 519h1v1h-1zM592 509h1v1h-1zM592 499h1v1h-1zM592 489h1v1h-1zM592 479h1v1h-1zM592 469h1v1h-1zM592 459h1v1h-1zM592 449h1v1h-1zM592 439h1v1h-1zM592 428h1v1h-1zM592 418h1v1h-1zM592 408h1v1h-1zM592 398h1v1h-1zM592 388h1v1h-1zM592 378h1v1h-1zM592 368h1v1h-1zM592 358h1v1h-1zM592 348h1v1h-1zM592 338h1v1h-1zM592 328h1v1h-1zM592 318h1v1h-1zM592 308h1v1h-1zM592 298h1v1h-1zM592 288h1v1h-1zM592 278h1v1h-1zM592 268h1v1h-1zM592 258h1v1h-1zM592 248h1v1h-1zM592 238h1v1h-1zM592 228h1v1h-1zM592 218h1v1h-1zM592 208h1v1h-1zM592 198h1v1h-1zM592 188h1v1h-1zM592 178h1v1h-1zM592 168h1v1h-1zM592 158h1v1h-1zM592 148h1v1h-1zM592 138h1v1h-1zM592 128h1v1h-1zM592 118h1v1h-1zM592 108h1v1h-1zM592 98h1v1h-1zM592 88h1v1h-1zM592 78h1v1h-1zM592 68h1v1h-1zM592 58h1v1h-1zM592 48h1v1h-1zM592 38h1v1h-1zM592 28h1v1h-1zM592 18h1v1h-1zM592 8h1v1h-1zM602 569h1v1h-1zM602 559h1v1h-1zM602 549h1v1h-1zM602 539h1v1h-1zM602 529h1v1h-1zM602 519h1v1h-1zM602 509h1v1h-1zM602 499h1v1h-1zM602 489h1v1h-1zM602 479h1v1h-1zM602 469h1v1h-1zM602 459h1v1h-1zM602 449h1v1h-1zM602 439h1v1h-1zM602 428h1v1h-1zM602 418h1v1h-1zM602 408h1v1h-1zM602 398h1v1h-1zM602 388h1v1h-1zM602 378h1v1h-1zM602 368h1v1h-1zM602 358h1v1h-1zM602 348h1v1h-1zM602 338h1v1h-1zM602 328h1v1h-1zM602 318h1v1h-1zM602 308h1v1h-1zM602 298h1v1h-1zM602 288h1v1h-1zM602 278h1v1h-1zM602 268h1v1h-1zM602 258h1v1h-1zM602 248h1v1h-1zM602 238h1v1h-1zM602 228h1v1h-1zM602 218h1v1h-1zM602 208h1v1h-1zM602 198h1v1h-1zM602 188h1v1h-1zM602 178h1v1h-1zM602 168h1v1h-1zM602 158h1v1h-1zM602 148h1v1h-1zM602 138h1v1h-1zM602 128h1v1h-1zM602 118h1v1h-1zM602 108h1v1h-1zM602 98h1v1h-1zM602 88h1v1h-1zM602 78h1v1h-1zM602 68h1v1h-1zM602 58h1v1h-1zM602 48h1v1h-1zM602 38h1v1h-1zM602 28h1v1h-1zM602 18h1v1h-1zM602 8h1v1h-1zM612 569h1v1h-1zM612 559h1v1h-1zM612 549h1v1h-1zM612 539h1v1h-1zM612 529h1v1h-1zM612 519h1v1h-1zM612 509h1v1h-1zM612 499h1v1h-1zM612 489h1v1h-1zM612 479h1v1h-1zM612 469h1v1h-1zM612 459h1v1h-1zM612 449h1v1h-1zM612 439h1v1h-1zM612 428h1v1h-1zM612 418h1v1h-1zM612 408h1v1h-1zM612 398h1v1h-1zM612 388h1v1h-1zM612 378h1v1h-1zM612 368h1v1h-1zM612 358h1v1h-1zM612 348h1v1h-1zM612 338h1v1h-1zM612 328h1v1h-1zM612 318h1v1h-1zM612 308h1v1h-1zM612 298h1v1h-1zM612 288h1v1h-1zM612 278h1v1h-1zM612 268h1v1h-1zM612 258h1v1h-1zM612 248h1v1h-1zM612 238h1v1h-1zM612 228h1v1h-1zM612 218h1v1h-1zM612 208h1v1h-1zM612 198h1v1h-1zM612 188h1v1h-1zM612 178h1v1h-1zM612 168h1v1h-1zM612 158h1v1h-1zM612 148h1v1h-1zM612 138h1v1h-1zM612 128h1v1h-1zM612 118h1v1h-1zM612 108h1v1h-1zM612 98h1v1h-1zM612 88h1v1h-1zM612 78h1v1h-1zM612 68h1v1h-1zM612 58h1v1h-1zM612 48h1v1h-1zM612 38h1v1h-1zM612 28h1v1h-1zM612 18h1v1h-1zM612 8h1v1h-1zM622 569h1v1h-1zM622 559h1v1h-1zM622 549h1v1h-1zM622 539h1v1h-1zM622 529h1v1h-1zM622 519h1v1h-1zM622 509h1v1h-1zM622 499h1v1h-1zM622 489h1v1h-1zM622 479h1v1h-1zM622 469h1v1h-1zM622 459h1v1h-1zM622 449h1v1h-1zM622 439h1v1h-1zM622 428h1v1h-1zM622 418h1v1h-1zM622 408h1v1h-1zM622 398h1v1h-1zM622 388h1v1h-1zM622 378h1v1h-1zM622 368h1v1h-1zM622 358h1v1h-1zM622 348h1v1h-1zM622 338h1v1h-1zM622 328h1v1h-1zM622 318h1v1h-1zM622 308h1v1h-1zM622 298h1v1h-1zM622 288h1v1h-1zM622 278h1v1h-1zM622 268h1v1h-1zM622 258h1v1h-1zM622 248h1v1h-1zM622 238h1v1h-1zM622 228h1v1h-1zM622 218h1v1h-1zM622 208h1v1h-1zM622 198h1v1h-1zM622 188h1v1h-1zM622 178h1v1h-1zM622 168h1v1h-1zM622 158h1v1h-1zM622 148h1v1h-1zM622 138h1v1h-1zM622 128h1v1h-1zM622 118h1v1h-1zM622 108h1v1h-1zM622 98h1v1h-1zM622 88h1v1h-1zM622 78h1v1h-1zM622 68h1v1h-1zM622 58h1v1h-1zM622 48h1v1h-1zM622 38h1v1h-1zM622 28h1v1h-1zM622 18h1v1h-1zM622 8h1v1h-1zM632 569h1v1h-1zM632 559h1v1h-1zM632 549h1v1h-1zM632 539h1v1h-1zM632 529h1v1h-1zM632 519h1v1h-1zM632 509h1v1h-1zM632 499h1v1h-1zM632 489h1v1h-1zM632 479h1v1h-1zM632 469h1v1h-1zM632 459h1v1h-1zM632 449h1v1h-1zM632 439h1v1h-1zM632 428h1v1h-1zM632 418h1v1h-1zM632 408h1v1h-1zM632 398h1v1h-1zM632 388h1v1h-1zM632 378h1v1h-1zM632 368h1v1h-1zM632 358h1v1h-1zM632 348h1v1h-1zM632 338h1v1h-1zM632 328h1v1h-1zM632 318h1v1h-1zM632 308h1v1h-1zM632 298h1v1h-1zM632 288h1v1h-1zM632 278h1v1h-1zM632 268h1v1h-1zM632 258h1v1h-1zM632 248h1v1h-1zM632 238h1v1h-1zM632 228h1v1h-1zM632 218h1v1h-1zM632 208h1v1h-1zM632 198h1v1h-1zM632 188h1v1h-1zM632 178h1v1h-1zM632 168h1v1h-1zM632 158h1v1h-1zM632 148h1v1h-1zM632 138h1v1h-1zM632 128h1v1h-1zM632 118h1v1h-1zM632 108h1v1h-1zM632 98h1v1h-1zM632 88h1v1h-1zM632 78h1v1h-1zM632 68h1v1h-1zM632 58h1v1h-1zM632 48h1v1h-1zM632 38h1v1h-1zM632 28h1v1h-1zM632 18h1v1h-1zM632 8h1v1h-1zM642 569h1v1h-1zM642 559h1v1h-1zM642 549h1v1h-1zM642 539h1v1h-1zM642 529h1v1h-1zM642 519h1v1h-1zM642 509h1v1h-1zM642 499h1v1h-1zM642 489h1v1h-1zM642 479h1v1h-1zM642 469h1v1h-1zM642 459h1v1h-1zM642 449h1v1h-1zM642 439h1v1h-1zM642 428h1v1h-1zM642 418h1v1h-1zM642 408h1v1h-1zM642 398h1v1h-1zM642 388h1v1h-1zM642 378h1v1h-1zM642 368h1v1h-1zM642 358h1v1h-1zM642 348h1v1h-1zM642 338h1v1h-1zM642 328h1v1h-1zM642 318h1v1h-1zM642 308h1v1h-1zM642 298h1v1h-1zM642 288h1v1h-1zM642 278h1v1h-1zM642 268h1v1h-1zM642 258h1v1h-1zM642 248h1v1h-1zM642 238h1v1h-1zM642 228h1v1h-1zM642 218h1v1h-1zM642 208h1v1h-1zM642 198h1v1h-1zM642 188h1v1h-1zM642 178h1v1h-1zM642 168h1v1h-1zM642 158h1v1h-1zM642 148h1v1h-1zM642 138h1v1h-1zM642 128h1v1h-1zM642 118h1v1h-1zM642 108h1v1h-1zM642 98h1v1h-1zM642 88h1v1h-1zM642 78h1v1h-1zM642 68h1v1h-1zM642 58h1v1h-1zM642 48h1v1h-1zM642 38h1v1h-1zM642 28h1v1h-1zM642 18h1v1h-1zM642 8h1v1h-1zM652 569h1v1h-1zM652 559h1v1h-1zM652 549h1v1h-1zM652 539h1v1h-1zM652 529h1v1h-1zM652 519h1v1h-1zM652 509h1v1h-1zM652 499h1v1h-1zM652 489h1v1h-1zM652 479h1v1h-1zM652 469h1v1h-1zM652 459h1v1h-1zM652 449h1v1h-1zM652 439h1v1h-1zM652 428h1v1h-1zM652 418h1v1h-1zM652 408h1v1h-1zM652 398h1v1h-1zM652 388h1v1h-1zM652 378h1v1h-1zM652 368h1v1h-1zM652 358h1v1h-1zM652 348h1v1h-1zM652 338h1v1h-1zM652 328h1v1h-1zM652 318h1v1h-1zM652 308h1v1h-1zM652 298h1v1h-1zM652 288h1v1h-1zM652 278h1v1h-1zM652 268h1v1h-1zM652 258h1v1h-1zM652 248h1v1h-1zM652 238h1v1h-1zM652 228h1v1h-1zM652 218h1v1h-1zM652 208h1v1h-1zM652 198h1v1h-1zM652 188h1v1h-1zM652 178h1v1h-1zM652 168h1v1h-1zM652 158h1v1h-1zM652 148h1v1h-1zM652 138h1v1h-1zM652 128h1v1h-1zM652 118h1v1h-1zM652 108h1v1h-1zM652 98h1v1h-1zM652 88h1v1h-1zM652 78h1v1h-1zM652 68h1v1h-1zM652 58h1v1h-1zM652 48h1v1h-1zM652 38h1v1h-1zM652 28h1v1h-1zM652 18h1v1h-1zM652 8h1v1h-1zM662 569h1v1h-1zM662 559h1v1h-1zM662 549h1v1h-1zM662 539h1v1h-1zM662 529h1v1h-1zM662 519h1v1h-1zM662 509h1v1h-1zM662 499h1v1h-1zM662 489h1v1h-1zM662 479h1v1h-1zM662 469h1v1h-1zM662 459h1v1h-1zM662 449h1v1h-1zM662 439h1v1h-1zM662 428h1v1h-1zM662 418h1v1h-1zM662 408h1v1h-1zM662 398h1v1h-1zM662 388h1v1h-1zM662 378h1v1h-1zM662 368h1v1h-1zM662 358h1v1h-1zM662 348h1v1h-1zM662 338h1v1h-1zM662 328h1v1h-1zM662 318h1v1h-1zM662 308h1v1h-1zM662 298h1v1h-1zM662 288h1v1h-1zM662 278h1v1h-1zM662 268h1v1h-1zM662 258h1v1h-1zM662 248h1v1h-1zM662 238h1v1h-1zM662 228h1v1h-1zM662 218h1v1h-1zM662 208h1v1h-1zM662 198h1v1h-1zM662 188h1v1h-1zM662 178h1v1h-1zM662 168h1v1h-1zM662 158h1v1h-1zM662 148h1v1h-1zM662 138h1v1h-1zM662 128h1v1h-1zM662 118h1v1h-1zM662 108h1v1h-1zM662 98h1v1h-1zM662 88h1v1h-1zM662 78h1v1h-1zM662 68h1v1h-1zM662 58h1v1h-1zM662 48h1v1h-1zM662 38h1v1h-1zM662 28h1v1h-1zM662 18h1v1h-1zM662 8h1v1h-1zM672 569h1v1h-1zM672 559h1v1h-1zM672 549h1v1h-1zM672 539h1v1h-1zM672 529h1v1h-1zM672 519h1v1h-1zM672 509h1v1h-1zM672 499h1v1h-1zM672 489h1v1h-1zM672 479h1v1h-1zM672 469h1v1h-1zM672 459h1v1h-1zM672 449h1v1h-1zM672 439h1v1h-1zM672 428h1v1h-1zM672 418h1v1h-1zM672 408h1v1h-1zM672 398h1v1h-1zM672 388h1v1h-1zM672 378h1v1h-1zM672 368h1v1h-1zM672 358h1v1h-1zM672 348h1v1h-1zM672 338h1v1h-1zM672 328h1v1h-1zM672 318h1v1h-1zM672 308h1v1h-1zM672 298h1v1h-1zM672 288h1v1h-1zM672 278h1v1h-1zM672 268h1v1h-1zM672 258h1v1h-1zM672 248h1v1h-1zM672 238h1v1h-1zM672 228h1v1h-1zM672 218h1v1h-1zM672 208h1v1h-1zM672 198h1v1h-1zM672 188h1v1h-1zM672 178h1v1h-1zM672 168h1v1h-1zM672 158h1v1h-1zM672 148h1v1h-1zM672 138h1v1h-1zM672 128h1v1h-1zM672 118h1v1h-1zM672 108h1v1h-1zM672 98h1v1h-1zM672 88h1v1h-1zM672 78h1v1h-1zM672 68h1v1h-1zM672 58h1v1h-1zM672 48h1v1h-1zM672 38h1v1h-1zM672 28h1v1h-1zM672 18h1v1h-1zM672 8h1v1h-1zM682 569h1v1h-1zM682 559h1v1h-1zM682 549h1v1h-1zM682 539h1v1h-1zM682 529h1v1h-1zM682 519h1v1h-1zM682 509h1v1h-1zM682 499h1v1h-1zM682 489h1v1h-1zM682 479h1v1h-1zM682 469h1v1h-1zM682 459h1v1h-1zM682 449h1v1h-1zM682 439h1v1h-1zM682 428h1v1h-1zM682 418h1v1h-1zM682 408h1v1h-1zM682 398h1v1h-1zM682 388h1v1h-1zM682 378h1v1h-1zM682 368h1v1h-1zM682 358h1v1h-1zM682 348h1v1h-1zM682 338h1v1h-1zM682 328h1v1h-1zM682 318h1v1h-1zM682 308h1v1h-1zM682 298h1v1h-1zM682 288h1v1h-1zM682 278h1v1h-1zM682 268h1v1h-1zM682 258h1v1h-1zM682 248h1v1h-1zM682 238h1v1h-1zM682 228h1v1h-1zM682 218h1v1h-1zM682 208h1v1h-1zM682 198h1v1h-1zM682 188h1v1h-1zM682 178h1v1h-1zM682 168h1v1h-1zM682 158h1v1h-1zM682 148h1v1h-1zM682 138h1v1h-1zM682 128h1v1h-1zM682 118h1v1h-1zM682 108h1v1h-1zM682 98h1v1h-1zM682 88h1v1h-1zM682 78h1v1h-1zM682 68h1v1h-1zM682 58h1v1h-1zM682 48h1v1h-1zM682 38h1v1h-1zM682 28h1v1h-1zM682 18h1v1h-1zM682 8h1v1h-1zM692 569h1v1h-1zM692 559h1v1h-1zM692 549h1v1h-1zM692 539h1v1h-1zM692 529h1v1h-1zM692 519h1v1h-1zM692 509h1v1h-1zM692 499h1v1h-1zM692 489h1v1h-1zM692 479h1v1h-1zM692 469h1v1h-1zM692 459h1v1h-1zM692 449h1v1h-1zM692 439h1v1h-1zM692 428h1v1h-1zM692 418h1v1h-1zM692 408h1v1h-1zM692 398h1v1h-1zM692 388h1v1h-1zM692 378h1v1h-1zM692 368h1v1h-1zM692 358h1v1h-1zM692 348h1v1h-1zM692 338h1v1h-1zM692 328h1v1h-1zM692 318h1v1h-1zM692 308h1v1h-1zM692 298h1v1h-1zM692 288h1v1h-1zM692 278h1v1h-1zM692 268h1v1h-1zM692 258h1v1h-1zM692 248h1v1h-1zM692 238h1v1h-1zM692 228h1v1h-1zM692 218h1v1h-1zM692 208h1v1h-1zM692 198h1v1h-1zM692 188h1v1h-1zM692 178h1v1h-1zM692 168h1v1h-1zM692 158h1v1h-1zM692 148h1v1h-1zM692 138h1v1h-1zM692 128h1v1h-1zM692 118h1v1h-1zM692 108h1v1h-1zM692 98h1v1h-1zM692 88h1v1h-1zM692 78h1v1h-1zM692 68h1v1h-1zM692 58h1v1h-1zM692 48h1v1h-1zM692 38h1v1h-1zM692 28h1v1h-1zM692 18h1v1h-1zM692 8h1v1h-1zM702 569h1v1h-1zM702 559h1v1h-1zM702 549h1v1h-1zM702 539h1v1h-1zM702 529h1v1h-1zM702 519h1v1h-1zM702 509h1v1h-1zM702 499h1v1h-1zM702 489h1v1h-1zM702 479h1v1h-1zM702 469h1v1h-1zM702 459h1v1h-1zM702 449h1v1h-1zM702 439h1v1h-1zM702 428h1v1h-1zM702 418h1v1h-1zM702 408h1v1h-1zM702 398h1v1h-1zM702 388h1v1h-1zM702 378h1v1h-1zM702 368h1v1h-1zM702 358h1v1h-1zM702 348h1v1h-1zM702 338h1v1h-1zM702 328h1v1h-1zM702 318h1v1h-1zM702 308h1v1h-1zM702 298h1v1h-1zM702 288h1v1h-1zM702 278h1v1h-1zM702 268h1v1h-1zM702 258h1v1h-1zM702 248h1v1h-1zM702 238h1v1h-1zM702 228h1v1h-1zM702 218h1v1h-1zM702 208h1v1h-1zM702 198h1v1h-1zM702 188h1v1h-1zM702 178h1v1h-1zM702 168h1v1h-1zM702 158h1v1h-1zM702 148h1v1h-1zM702 138h1v1h-1zM702 128h1v1h-1zM702 118h1v1h-1zM702 108h1v1h-1zM702 98h1v1h-1zM702 88h1v1h-1zM702 78h1v1h-1zM702 68h1v1h-1zM702 58h1v1h-1zM702 48h1v1h-1zM702 38h1v1h-1zM702 28h1v1h-1zM702 18h1v1h-1zM702 8h1v1h-1zM712 569h1v1h-1zM712 559h1v1h-1zM712 549h1v1h-1zM712 539h1v1h-1zM712 529h1v1h-1zM712 519h1v1h-1zM712 509h1v1h-1zM712 499h1v1h-1zM712 489h1v1h-1zM712 479h1v1h-1zM712 469h1v1h-1zM712 459h1v1h-1zM712 449h1v1h-1zM712 439h1v1h-1zM712 428h1v1h-1zM712 418h1v1h-1zM712 408h1v1h-1zM712 398h1v1h-1zM712 388h1v1h-1zM712 378h1v1h-1zM712 368h1v1h-1zM712 358h1v1h-1zM712 348h1v1h-1zM712 338h1v1h-1zM712 328h1v1h-1zM712 318h1v1h-1zM712 308h1v1h-1zM712 298h1v1h-1zM712 288h1v1h-1zM712 278h1v1h-1zM712 268h1v1h-1zM712 258h1v1h-1zM712 248h1v1h-1zM712 238h1v1h-1zM712 228h1v1h-1zM712 218h1v1h-1zM712 208h1v1h-1zM712 198h1v1h-1zM712 188h1v1h-1zM712 178h1v1h-1zM712 168h1v1h-1zM712 158h1v1h-1zM712 148h1v1h-1zM712 138h1v1h-1zM712 128h1v1h-1zM712 118h1v1h-1zM712 108h1v1h-1zM712 98h1v1h-1zM712 88h1v1h-1zM712 78h1v1h-1zM712 68h1v1h-1zM712 58h1v1h-1zM712 48h1v1h-1zM712 38h1v1h-1zM712 28h1v1h-1zM712 18h1v1h-1zM712 8h1v1h-1zM722 569h1v1h-1zM722 559h1v1h-1zM722 549h1v1h-1zM722 539h1v1h-1zM722 529h1v1h-1zM722 519h1v1h-1zM722 509h1v1h-1zM722 499h1v1h-1zM722 489h1v1h-1zM722 479h1v1h-1zM722 469h1v1h-1zM722 459h1v1h-1zM722 449h1v1h-1zM722 439h1v1h-1zM722 428h1v1h-1zM722 418h1v1h-1zM722 408h1v1h-1zM722 398h1v1h-1zM722 388h1v1h-1zM722 378h1v1h-1zM722 368h1v1h-1zM722 358h1v1h-1zM722 348h1v1h-1zM722 338h1v1h-1zM722 328h1v1h-1zM722 318h1v1h-1zM722 308h1v1h-1zM722 298h1v1h-1zM722 288h1v1h-1zM722 278h1v1h-1zM722 268h1v1h-1zM722 258h1v1h-1zM722 248h1v1h-1zM722 238h1v1h-1zM722 228h1v1h-1zM722 218h1v1h-1zM722 208h1v1h-1zM722 198h1v1h-1zM722 188h1v1h-1zM722 178h1v1h-1zM722 168h1v1h-1zM722 158h1v1h-1zM722 148h1v1h-1zM722 138h1v1h-1zM722 128h1v1h-1zM722 118h1v1h-1zM722 108h1v1h-1zM722 98h1v1h-1zM722 88h1v1h-1zM722 78h1v1h-1zM722 68h1v1h-1zM722 58h1v1h-1zM722 48h1v1h-1zM722 38h1v1h-1zM722 28h1v1h-1zM722 18h1v1h-1zM722 8h1v1h-1zM732 569h1v1h-1zM732 559h1v1h-1zM732 549h1v1h-1zM732 539h1v1h-1zM732 529h1v1h-1zM732 519h1v1h-1zM732 509h1v1h-1zM732 499h1v1h-1zM732 489h1v1h-1zM732 479h1v1h-1zM732 469h1v1h-1zM732 459h1v1h-1zM732 449h1v1h-1zM732 439h1v1h-1zM732 428h1v1h-1zM732 418h1v1h-1zM732 408h1v1h-1zM732 398h1v1h-1zM732 388h1v1h-1zM732 378h1v1h-1zM732 368h1v1h-1zM732 358h1v1h-1zM732 348h1v1h-1zM732 338h1v1h-1zM732 328h1v1h-1zM732 318h1v1h-1zM732 308h1v1h-1zM732 298h1v1h-1zM732 288h1v1h-1zM732 278h1v1h-1zM732 268h1v1h-1zM732 258h1v1h-1zM732 248h1v1h-1zM732 238h1v1h-1zM732 228h1v1h-1zM732 218h1v1h-1zM732 208h1v1h-1zM732 198h1v1h-1zM732 188h1v1h-1zM732 178h1v1h-1zM732 168h1v1h-1zM732 158h1v1h-1zM732 148h1v1h-1zM732 138h1v1h-1zM732 128h1v1h-1zM732 118h1v1h-1zM732 108h1v1h-1zM732 98h1v1h-1zM732 88h1v1h-1zM732 78h1v1h-1zM732 68h1v1h-1zM732 58h1v1h-1zM732 48h1v1h-1zM732 38h1v1h-1zM732 28h1v1h-1zM732 18h1v1h-1zM732 8h1v1h-1zM742 569h1v1h-1zM742 559h1v1h-1zM742 549h1v1h-1zM742 539h1v1h-1zM742 529h1v1h-1zM742 519h1v1h-1zM742 509h1v1h-1zM742 499h1v1h-1zM742 489h1v1h-1zM742 479h1v1h-1zM742 469h1v1h-1zM742 459h1v1h-1zM742 449h1v1h-1zM742 439h1v1h-1zM742 428h1v1h-1zM742 418h1v1h-1zM742 408h1v1h-1zM742 398h1v1h-1zM742 388h1v1h-1zM742 378h1v1h-1zM742 368h1v1h-1zM742 358h1v1h-1zM742 348h1v1h-1zM742 338h1v1h-1zM742 328h1v1h-1zM742 318h1v1h-1zM742 308h1v1h-1zM742 298h1v1h-1zM742 288h1v1h-1zM742 278h1v1h-1zM742 268h1v1h-1zM742 258h1v1h-1zM742 248h1v1h-1zM742 238h1v1h-1zM742 228h1v1h-1zM742 218h1v1h-1zM742 208h1v1h-1zM742 198h1v1h-1zM742 188h1v1h-1zM742 178h1v1h-1zM742 168h1v1h-1zM742 158h1v1h-1zM742 148h1v1h-1zM742 138h1v1h-1zM742 128h1v1h-1zM742 118h1v1h-1zM742 108h1v1h-1zM742 98h1v1h-1zM742 88h1v1h-1zM742 78h1v1h-1zM742 68h1v1h-1zM742 58h1v1h-1zM742 48h1v1h-1zM742 38h1v1h-1zM742 28h1v1h-1zM742 18h1v1h-1zM742 8h1v1h-1zM752 569h1v1h-1zM752 559h1v1h-1zM752 549h1v1h-1zM752 539h1v1h-1zM752 529h1v1h-1zM752 519h1v1h-1zM752 509h1v1h-1zM752 499h1v1h-1zM752 489h1v1h-1zM752 479h1v1h-1zM752 469h1v1h-1zM752 459h1v1h-1zM752 449h1v1h-1zM752 439h1v1h-1zM752 428h1v1h-1zM752 418h1v1h-1zM752 408h1v1h-1zM752 398h1v1h-1zM752 388h1v1h-1zM752 378h1v1h-1zM752 368h1v1h-1zM752 358h1v1h-1zM752 348h1v1h-1zM752 338h1v1h-1zM752 328h1v1h-1zM752 318h1v1h-1zM752 308h1v1h-1zM752 298h1v1h-1zM752 288h1v1h-1zM752 278h1v1h-1zM752 268h1v1h-1zM752 258h1v1h-1zM752 248h1v1h-1zM752 238h1v1h-1zM752 228h1v1h-1zM752 218h1v1h-1zM752 208h1v1h-1zM752 198h1v1h-1zM752 188h1v1h-1zM752 178h1v1h-1zM752 168h1v1h-1zM752 158h1v1h-1zM752 148h1v1h-1zM752 138h1v1h-1zM752 128h1v1h-1zM752 118h1v1h-1zM752 108h1v1h-1zM752 98h1v1h-1zM752 88h1v1h-1zM752 78h1v1h-1zM752 68h1v1h-1zM752 58h1v1h-1zM752 48h1v1h-1zM752 38h1v1h-1zM752 28h1v1h-1zM752 18h1v1h-1zM752 8h1v1h-1zM762 569h1v1h-1zM762 559h1v1h-1zM762 549h1v1h-1zM762 539h1v1h-1zM762 529h1v1h-1zM762 519h1v1h-1zM762 509h1v1h-1zM762 499h1v1h-1zM762 489h1v1h-1zM762 479h1v1h-1zM762 469h1v1h-1zM762 459h1v1h-1zM762 449h1v1h-1zM762 439h1v1h-1zM762 428h1v1h-1zM762 418h1v1h-1zM762 408h1v1h-1zM762 398h1v1h-1zM762 388h1v1h-1zM762 378h1v1h-1zM762 368h1v1h-1zM762 358h1v1h-1zM762 348h1v1h-1zM762 338h1v1h-1zM762 328h1v1h-1zM762 318h1v1h-1zM762 308h1v1h-1zM762 298h1v1h-1zM762 288h1v1h-1zM762 278h1v1h-1zM762 268h1v1h-1zM762 258h1v1h-1zM762 248h1v1h-1zM762 238h1v1h-1zM762 228h1v1h-1zM762 218h1v1h-1zM762 208h1v1h-1zM762 198h1v1h-1zM762 188h1v1h-1zM762 178h1v1h-1zM762 168h1v1h-1zM762 158h1v1h-1zM762 148h1v1h-1zM762 138h1v1h-1zM762 128h1v1h-1zM762 118h1v1h-1zM762 108h1v1h-1zM762 98h1v1h-1zM762 88h1v1h-1zM762 78h1v1h-1zM762 68h1v1h-1zM762 58h1v1h-1zM762 48h1v1h-1zM762 38h1v1h-1zM762 28h1v1h-1zM762 18h1v1h-1zM762 8h1v1h-1zM772 569h1v1h-1zM772 559h1v1h-1zM772 549h1v1h-1zM772 539h1v1h-1zM772 529h1v1h-1zM772 519h1v1h-1zM772 509h1v1h-1zM772 499h1v1h-1zM772 489h1v1h-1zM772 479h1v1h-1zM772 469h1v1h-1zM772 459h1v1h-1zM772 449h1v1h-1zM772 439h1v1h-1zM772 428h1v1h-1zM772 418h1v1h-1zM772 408h1v1h-1zM772 398h1v1h-1zM772 388h1v1h-1zM772 378h1v1h-1zM772 368h1v1h-1zM772 358h1v1h-1zM772 348h1v1h-1zM772 338h1v1h-1zM772 328h1v1h-1zM772 318h1v1h-1zM772 308h1v1h-1zM772 298h1v1h-1zM772 288h1v1h-1zM772 278h1v1h-1zM772 268h1v1h-1zM772 258h1v1h-1zM772 248h1v1h-1zM772 238h1v1h-1zM772 228h1v1h-1zM772 218h1v1h-1zM772 208h1v1h-1zM772 198h1v1h-1zM772 188h1v1h-1zM772 178h1v1h-1zM772 168h1v1h-1zM772 158h1v1h-1zM772 148h1v1h-1zM772 138h1v1h-1zM772 128h1v1h-1zM772 118h1v1h-1zM772 108h1v1h-1zM772 98h1v1h-1zM772 88h1v1h-1zM772 78h1v1h-1zM772 68h1v1h-1zM772 58h1v1h-1zM772 48h1v1h-1zM772 38h1v1h-1zM772 28h1v1h-1zM772 18h1v1h-1zM772 8h1v1h-1zM782 569h1v1h-1zM782 559h1v1h-1zM782 549h1v1h-1zM782 539h1v1h-1zM782 529h1v1h-1zM782 519h1v1h-1zM782 509h1v1h-1zM782 499h1v1h-1zM782 489h1v1h-1zM782 479h1v1h-1zM782 469h1v1h-1zM782 459h1v1h-1zM782 449h1v1h-1zM782 439h1v1h-1zM782 428h1v1h-1zM782 418h1v1h-1zM782 408h1v1h-1zM782 398h1v1h-1zM782 388h1v1h-1zM782 378h1v1h-1zM782 368h1v1h-1zM782 358h1v1h-1zM782 348h1v1h-1zM782 338h1v1h-1zM782 328h1v1h-1zM782 318h1v1h-1zM782 308h1v1h-1zM782 298h1v1h-1zM782 288h1v1h-1zM782 278h1v1h-1zM782 268h1v1h-1zM782 258h1v1h-1zM782 248h1v1h-1zM782 238h1v1h-1zM782 228h1v1h-1zM782 218h1v1h-1zM782 208h1v1h-1zM782 198h1v1h-1zM782 188h1v1h-1zM782 178h1v1h-1zM782 168h1v1h-1zM782 158h1v1h-1zM782 148h1v1h-1zM782 138h1v1h-1zM782 128h1v1h-1zM782 118h1v1h-1zM782 108h1v1h-1zM782 98h1v1h-1zM782 88h1v1h-1zM782 78h1v1h-1zM782 68h1v1h-1zM782 58h1v1h-1zM782 48h1v1h-1zM782 38h1v1h-1zM782 28h1v1h-1zM782 18h1v1h-1zM782 8h1v1h-1zM792 569h1v1h-1zM792 559h1v1h-1zM792 549h1v1h-1zM792 539h1v1h-1zM792 529h1v1h-1zM792 519h1v1h-1zM792 509h1v1h-1zM792 499h1v1h-1zM792 489h1v1h-1zM792 479h1v1h-1zM792 469h1v1h-1zM792 459h1v1h-1zM792 449h1v1h-1zM792 439h1v1h-1zM792 428h1v1h-1zM792 418h1v1h-1zM792 408h1v1h-1zM792 398h1v1h-1zM792 388h1v1h-1zM792 378h1v1h-1zM792 368h1v1h-1zM792 358h1v1h-1zM792 348h1v1h-1zM792 338h1v1h-1zM792 328h1v1h-1zM792 318h1v1h-1zM792 308h1v1h-1zM792 298h1v1h-1zM792 288h1v1h-1zM792 278h1v1h-1zM792 268h1v1h-1zM792 258h1v1h-1zM792 248h1v1h-1zM792 238h1v1h-1zM792 228h1v1h-1zM792 218h1v1h-1zM792 208h1v1h-1zM792 198h1v1h-1zM792 188h1v1h-1zM792 178h1v1h-1zM792 168h1v1h-1zM792 158h1v1h-1zM792 148h1v1h-1zM792 138h1v1h-1zM792 128h1v1h-1zM792 118h1v1h-1zM792 108h1v1h-1zM792 98h1v1h-1zM792 88h1v1h-1zM792 78h1v1h-1zM792 68h1v1h-1zM792 58h1v1h-1zM792 48h1v1h-1zM792 38h1v1h-1zM792 28h1v1h-1zM792 18h1v1h-1zM792 8h1v1h-1zM802 569h1v1h-1zM802 559h1v1h-1zM802 549h1v1h-1zM802 539h1v1h-1zM802 529h1v1h-1zM802 519h1v1h-1zM802 509h1v1h-1zM802 499h1v1h-1zM802 489h1v1h-1zM802 479h1v1h-1zM802 469h1v1h-1zM802 459h1v1h-1zM802 449h1v1h-1zM802 439h1v1h-1zM802 428h1v1h-1zM802 418h1v1h-1zM802 408h1v1h-1zM802 398h1v1h-1zM802 388h1v1h-1zM802 378h1v1h-1zM802 368h1v1h-1zM802 358h1v1h-1zM802 348h1v1h-1zM802 338h1v1h-1zM802 328h1v1h-1zM802 318h1v1h-1zM802 308h1v1h-1zM802 298h1v1h-1zM802 288h1v1h-1zM802 278h1v1h-1zM802 268h1v1h-1zM802 258h1v1h-1zM802 248h1v1h-1zM802 238h1v1h-1zM802 228h1v1h-1zM802 218h1v1h-1zM802 208h1v1h-1zM802 198h1v1h-1zM802 188h1v1h-1zM802 178h1v1h-1zM802 168h1v1h-1zM802 158h1v1h-1zM802 148h1v1h-1zM802 138h1v1h-1zM802 128h1v1h-1zM802 118h1v1h-1zM802 108h1v1h-1zM802 98h1v1h-1zM802 88h1v1h-1zM802 78h1v1h-1zM802 68h1v1h-1zM802 58h1v1h-1zM802 48h1v1h-1zM802 38h1v1h-1zM802 28h1v1h-1zM802 18h1v1h-1zM802 8h1v1h-1zM812 569h1v1h-1zM812 559h1v1h-1zM812 549h1v1h-1zM812 539h1v1h-1zM812 529h1v1h-1zM812 519h1v1h-1zM812 509h1v1h-1zM812 499h1v1h-1zM812 489h1v1h-1zM812 479h1v1h-1zM812 469h1v1h-1zM812 459h1v1h-1zM812 449h1v1h-1zM812 439h1v1h-1zM812 428h1v1h-1zM812 418h1v1h-1zM812 408h1v1h-1zM812 398h1v1h-1zM812 388h1v1h-1zM812 378h1v1h-1zM812 368h1v1h-1zM812 358h1v1h-1zM812 348h1v1h-1zM812 338h1v1h-1zM812 328h1v1h-1zM812 318h1v1h-1zM812 308h1v1h-1zM812 298h1v1h-1zM812 288h1v1h-1zM812 278h1v1h-1zM812 268h1v1h-1zM812 258h1v1h-1zM812 248h1v1h-1zM812 238h1v1h-1zM812 228h1v1h-1zM812 218h1v1h-1zM812 208h1v1h-1zM812 198h1v1h-1zM812 188h1v1h-1zM812 178h1v1h-1zM812 168h1v1h-1zM812 158h1v1h-1zM812 148h1v1h-1zM812 138h1v1h-1zM812 128h1v1h-1zM812 118h1v1h-1zM812 108h1v1h-1zM812 98h1v1h-1zM812 88h1v1h-1zM812 78h1v1h-1zM812 68h1v1h-1zM812 58h1v1h-1zM812 48h1v1h-1zM812 38h1v1h-1zM812 28h1v1h-1zM812 18h1v1h-1zM812 8h1v1h-1zM822 569h1v1h-1zM822 559h1v1h-1zM822 549h1v1h-1zM822 539h1v1h-1zM822 529h1v1h-1zM822 519h1v1h-1zM822 509h1v1h-1zM822 499h1v1h-1zM822 489h1v1h-1zM822 479h1v1h-1zM822 469h1v1h-1zM822 459h1v1h-1zM822 449h1v1h-1zM822 439h1v1h-1zM822 428h1v1h-1zM822 418h1v1h-1zM822 408h1v1h-1zM822 398h1v1h-1zM822 388h1v1h-1zM822 378h1v1h-1zM822 368h1v1h-1zM822 358h1v1h-1zM822 348h1v1h-1zM822 338h1v1h-1zM822 328h1v1h-1zM822 318h1v1h-1zM822 308h1v1h-1zM822 298h1v1h-1zM822 288h1v1h-1zM822 278h1v1h-1zM822 268h1v1h-1zM822 258h1v1h-1zM822 248h1v1h-1zM822 238h1v1h-1zM822 228h1v1h-1zM822 218h1v1h-1zM822 208h1v1h-1zM822 198h1v1h-1zM822 188h1v1h-1zM822 178h1v1h-1zM822 168h1v1h-1zM822 158h1v1h-1zM822 148h1v1h-1zM822 138h1v1h-1zM822 128h1v1h-1zM822 118h1v1h-1zM822 108h1v1h-1zM822 98h1v1h-1zM822 88h1v1h-1zM822 78h1v1h-1zM822 68h1v1h-1zM822 58h1v1h-1zM822 48h1v1h-1zM822 38h1v1h-1zM822 28h1v1h-1zM822 18h1v1h-1zM822 8h1v1h-1zM832 569h1v1h-1zM832 559h1v1h-1zM832 549h1v1h-1zM832 539h1v1h-1zM832 529h1v1h-1zM832 519h1v1h-1zM832 509h1v1h-1zM832 499h1v1h-1zM832 489h1v1h-1zM832 479h1v1h-1zM832 469h1v1h-1zM832 459h1v1h-1zM832 449h1v1h-1zM832 439h1v1h-1zM832 428h1v1h-1zM832 418h1v1h-1zM832 408h1v1h-1zM832 398h1v1h-1zM832 388h1v1h-1zM832 378h1v1h-1zM832 368h1v1h-1zM832 358h1v1h-1zM832 348h1v1h-1zM832 338h1v1h-1zM832 328h1v1h-1zM832 318h1v1h-1zM832 308h1v1h-1zM832 298h1v1h-1zM832 288h1v1h-1zM832 278h1v1h-1zM832 268h1v1h-1zM832 258h1v1h-1zM832 248h1v1h-1zM832 238h1v1h-1zM832 228h1v1h-1zM832 218h1v1h-1zM832 208h1v1h-1zM832 198h1v1h-1zM832 188h1v1h-1zM832 178h1v1h-1zM832 168h1v1h-1zM832 158h1v1h-1zM832 148h1v1h-1zM832 138h1v1h-1zM832 128h1v1h-1zM832 118h1v1h-1zM832 108h1v1h-1zM832 98h1v1h-1zM832 88h1v1h-1zM832 78h1v1h-1zM832 68h1v1h-1zM832 58h1v1h-1zM832 48h1v1h-1zM832 38h1v1h-1zM832 28h1v1h-1zM832 18h1v1h-1zM832 8h1v1h-1zM842 569h1v1h-1zM842 559h1v1h-1zM842 549h1v1h-1zM842 539h1v1h-1zM842 529h1v1h-1zM842 519h1v1h-1zM842 509h1v1h-1zM842 499h1v1h-1zM842 489h1v1h-1zM842 479h1v1h-1zM842 469h1v1h-1zM842 459h1v1h-1zM842 449h1v1h-1zM842 439h1v1h-1zM842 428h1v1h-1zM842 418h1v1h-1zM842 408h1v1h-1zM842 398h1v1h-1zM842 388h1v1h-1zM842 378h1v1h-1zM842 368h1v1h-1zM842 358h1v1h-1zM842 348h1v1h-1zM842 338h1v1h-1zM842 328h1v1h-1zM842 318h1v1h-1zM842 308h1v1h-1zM842 298h1v1h-1zM842 288h1v1h-1zM842 278h1v1h-1zM842 268h1v1h-1zM842 258h1v1h-1zM842 248h1v1h-1zM842 238h1v1h-1zM842 228h1v1h-1zM842 218h1v1h-1zM842 208h1v1h-1zM842 198h1v1h-1zM842 188h1v1h-1zM842 178h1v1h-1zM842 168h1v1h-1zM842 158h1v1h-1zM842 148h1v1h-1zM842 138h1v1h-1zM842 128h1v1h-1zM842 118h1v1h-1zM842 108h1v1h-1zM842 98h1v1h-1zM842 88h1v1h-1zM842 78h1v1h-1zM842 68h1v1h-1zM842 58h1v1h-1zM842 48h1v1h-1zM842 38h1v1h-1zM842 28h1v1h-1zM842 18h1v1h-1zM842 8h1v1h-1zM852 569h1v1h-1zM852 559h1v1h-1zM852 549h1v1h-1zM852 539h1v1h-1zM852 529h1v1h-1zM852 519h1v1h-1zM852 509h1v1h-1zM852 499h1v1h-1zM852 489h1v1h-1zM852 479h1v1h-1zM852 469h1v1h-1zM852 459h1v1h-1zM852 449h1v1h-1zM852 439h1v1h-1zM852 428h1v1h-1zM852 418h1v1h-1zM852 408h1v1h-1zM852 398h1v1h-1zM852 388h1v1h-1zM852 378h1v1h-1zM852 368h1v1h-1zM852 358h1v1h-1zM852 348h1v1h-1zM852 338h1v1h-1zM852 328h1v1h-1zM852 318h1v1h-1zM852 308h1v1h-1zM852 298h1v1h-1zM852 288h1v1h-1zM852 278h1v1h-1zM852 268h1v1h-1zM852 258h1v1h-1zM852 248h1v1h-1zM852 238h1v1h-1zM852 228h1v1h-1zM852 218h1v1h-1zM852 208h1v1h-1zM852 198h1v1h-1zM852 188h1v1h-1zM852 178h1v1h-1zM852 168h1v1h-1zM852 158h1v1h-1zM852 148h1v1h-1zM852 138h1v1h-1zM852 128h1v1h-1zM852 118h1v1h-1zM852 108h1v1h-1zM852 98h1v1h-1zM852 88h1v1h-1zM852 78h1v1h-1zM852 68h1v1h-1zM852 58h1v1h-1zM852 48h1v1h-1zM852 38h1v1h-1zM852 28h1v1h-1zM852 18h1v1h-1zM852 8h1v1h-1zM862 569h1v1h-1zM862 559h1v1h-1zM862 549h1v1h-1zM862 539h1v1h-1zM862 529h1v1h-1zM862 519h1v1h-1zM862 509h1v1h-1zM862 499h1v1h-1zM862 489h1v1h-1zM862 479h1v1h-1zM862 469h1v1h-1zM862 459h1v1h-1zM862 449h1v1h-1zM862 439h1v1h-1zM862 428h1v1h-1zM862 418h1v1h-1zM862 408h1v1h-1zM862 398h1v1h-1zM862 388h1v1h-1zM862 378h1v1h-1zM862 368h1v1h-1zM862 358h1v1h-1zM862 348h1v1h-1zM862 338h1v1h-1zM862 328h1v1h-1zM862 318h1v1h-1zM862 308h1v1h-1zM862 298h1v1h-1zM862 288h1v1h-1zM862 278h1v1h-1zM862 268h1v1h-1zM862 258h1v1h-1zM862 248h1v1h-1zM862 238h1v1h-1zM862 228h1v1h-1zM862 218h1v1h-1zM862 208h1v1h-1zM862 198h1v1h-1zM862 188h1v1h-1zM862 178h1v1h-1zM862 168h1v1h-1zM862 158h1v1h-1zM862 148h1v1h-1zM862 138h1v1h-1zM862 128h1v1h-1zM862 118h1v1h-1zM862 108h1v1h-1zM862 98h1v1h-1zM862 88h1v1h-1zM862 78h1v1h-1zM862 68h1v1h-1zM862 58h1v1h-1zM862 48h1v1h-1zM862 38h1v1h-1zM862 28h1v1h-1zM862 18h1v1h-1zM862 8h1v1h-1zM872 569h1v1h-1zM872 559h1v1h-1zM872 549h1v1h-1zM872 539h1v1h-1zM872 529h1v1h-1zM872 519h1v1h-1zM872 509h1v1h-1zM872 499h1v1h-1zM872 489h1v1h-1zM872 479h1v1h-1zM872 469h1v1h-1zM872 459h1v1h-1zM872 449h1v1h-1zM872 439h1v1h-1zM872 428h1v1h-1zM872 418h1v1h-1zM872 408h1v1h-1zM872 398h1v1h-1zM872 388h1v1h-1zM872 378h1v1h-1zM872 368h1v1h-1zM872 358h1v1h-1zM872 348h1v1h-1zM872 338h1v1h-1zM872 328h1v1h-1zM872 318h1v1h-1zM872 308h1v1h-1zM872 298h1v1h-1zM872 288h1v1h-1zM872 278h1v1h-1zM872 268h1v1h-1zM872 258h1v1h-1zM872 248h1v1h-1zM872 238h1v1h-1zM872 228h1v1h-1zM872 218h1v1h-1zM872 208h1v1h-1zM872 198h1v1h-1zM872 188h1v1h-1zM872 178h1v1h-1zM872 168h1v1h-1zM872 158h1v1h-1zM872 148h1v1h-1zM872 138h1v1h-1zM872 128h1v1h-1zM872 118h1v1h-1zM872 108h1v1h-1zM872 98h1v1h-1zM872 88h1v1h-1zM872 78h1v1h-1zM872 68h1v1h-1zM872 58h1v1h-1zM872 48h1v1h-1zM872 38h1v1h-1zM872 28h1v1h-1zM872 18h1v1h-1zM872 8h1v1h-1zM882 569h1v1h-1zM882 559h1v1h-1zM882 549h1v1h-1zM882 539h1v1h-1zM882 529h1v1h-1zM882 519h1v1h-1zM882 509h1v1h-1zM882 499h1v1h-1zM882 489h1v1h-1zM882 479h1v1h-1zM882 469h1v1h-1zM882 459h1v1h-1zM882 449h1v1h-1zM882 439h1v1h-1zM882 428h1v1h-1zM882 418h1v1h-1zM882 408h1v1h-1zM882 398h1v1h-1zM882 388h1v1h-1zM882 378h1v1h-1zM882 368h1v1h-1zM882 358h1v1h-1zM882 348h1v1h-1zM882 338h1v1h-1zM882 328h1v1h-1zM882 318h1v1h-1zM882 308h1v1h-1zM882 298h1v1h-1zM882 288h1v1h-1zM882 278h1v1h-1zM882 268h1v1h-1zM882 258h1v1h-1zM882 248h1v1h-1zM882 238h1v1h-1zM882 228h1v1h-1zM882 218h1v1h-1zM882 208h1v1h-1zM882 198h1v1h-1zM882 188h1v1h-1zM882 178h1v1h-1zM882 168h1v1h-1zM882 158h1v1h-1zM882 148h1v1h-1zM882 138h1v1h-1zM882 128h1v1h-1zM882 118h1v1h-1zM882 108h1v1h-1zM882 98h1v1h-1zM882 88h1v1h-1zM882 78h1v1h-1zM882 68h1v1h-1zM882 58h1v1h-1zM882 48h1v1h-1zM882 38h1v1h-1zM882 28h1v1h-1zM882 18h1v1h-1zM882 8h1v1h-1zM892 569h1v1h-1zM892 559h1v1h-1zM892 549h1v1h-1zM892 539h1v1h-1zM892 529h1v1h-1zM892 519h1v1h-1zM892 509h1v1h-1zM892 499h1v1h-1zM892 489h1v1h-1zM892 479h1v1h-1zM892 469h1v1h-1zM892 459h1v1h-1zM892 449h1v1h-1zM892 439h1v1h-1zM892 428h1v1h-1zM892 418h1v1h-1zM892 408h1v1h-1zM892 398h1v1h-1zM892 388h1v1h-1zM892 378h1v1h-1zM892 368h1v1h-1zM892 358h1v1h-1zM892 348h1v1h-1zM892 338h1v1h-1zM892 328h1v1h-1zM892 318h1v1h-1zM892 308h1v1h-1zM892 298h1v1h-1zM892 288h1v1h-1zM892 278h1v1h-1zM892 268h1v1h-1zM892 258h1v1h-1zM892 248h1v1h-1zM892 238h1v1h-1zM892 228h1v1h-1zM892 218h1v1h-1zM892 208h1v1h-1zM892 198h1v1h-1zM892 188h1v1h-1zM892 178h1v1h-1zM892 168h1v1h-1zM892 158h1v1h-1zM892 148h1v1h-1zM892 138h1v1h-1zM892 128h1v1h-1zM892 118h1v1h-1zM892 108h1v1h-1zM892 98h1v1h-1zM892 88h1v1h-1zM892 78h1v1h-1zM892 68h1v1h-1zM892 58h1v1h-1zM892 48h1v1h-1zM892 38h1v1h-1zM892 28h1v1h-1zM892 18h1v1h-1zM892 8h1v1h-1zM902 569h1v1h-1zM902 559h1v1h-1zM902 549h1v1h-1zM902 539h1v1h-1zM902 529h1v1h-1zM902 519h1v1h-1zM902 509h1v1h-1zM902 499h1v1h-1zM902 489h1v1h-1zM902 479h1v1h-1zM902 469h1v1h-1zM902 459h1v1h-1zM902 449h1v1h-1zM902 439h1v1h-1zM902 428h1v1h-1zM902 418h1v1h-1zM902 408h1v1h-1zM902 398h1v1h-1zM902 388h1v1h-1zM902 378h1v1h-1zM902 368h1v1h-1zM902 358h1v1h-1zM902 348h1v1h-1zM902 338h1v1h-1zM902 328h1v1h-1zM902 318h1v1h-1zM902 308h1v1h-1zM902 298h1v1h-1zM902 288h1v1h-1zM902 278h1v1h-1zM902 268h1v1h-1zM902 258h1v1h-1zM902 248h1v1h-1zM902 238h1v1h-1zM902 228h1v1h-1zM902 218h1v1h-1zM902 208h1v1h-1zM902 198h1v1h-1zM902 188h1v1h-1zM902 178h1v1h-1zM902 168h1v1h-1zM902 158h1v1h-1zM902 148h1v1h-1zM902 138h1v1h-1zM902 128h1v1h-1zM902 118h1v1h-1zM902 108h1v1h-1zM902 98h1v1h-1zM902 88h1v1h-1zM902 78h1v1h-1zM902 68h1v1h-1zM902 58h1v1h-1zM902 48h1v1h-1zM902 38h1v1h-1zM902 28h1v1h-1zM902 18h1v1h-1zM902 8h1v1h-1zM912 569h1v1h-1zM912 559h1v1h-1zM912 549h1v1h-1zM912 539h1v1h-1zM912 529h1v1h-1zM912 519h1v1h-1zM912 509h1v1h-1zM912 499h1v1h-1zM912 489h1v1h-1zM912 479h1v1h-1zM912 469h1v1h-1zM912 459h1v1h-1zM912 449h1v1h-1zM912 439h1v1h-1zM912 428h1v1h-1zM912 418h1v1h-1zM912 408h1v1h-1zM912 398h1v1h-1zM912 388h1v1h-1zM912 378h1v1h-1zM912 368h1v1h-1zM912 358h1v1h-1zM912 348h1v1h-1zM912 338h1v1h-1zM912 328h1v1h-1zM912 318h1v1h-1zM912 308h1v1h-1zM912 298h1v1h-1zM912 288h1v1h-1zM912 278h1v1h-1zM912 268h1v1h-1zM912 258h1v1h-1zM912 248h1v1h-1zM912 238h1v1h-1zM912 228h1v1h-1zM912 218h1v1h-1zM912 208h1v1h-1zM912 198h1v1h-1zM912 188h1v1h-1zM912 178h1v1h-1zM912 168h1v1h-1zM912 158h1v1h-1zM912 148h1v1h-1zM912 138h1v1h-1zM912 128h1v1h-1zM912 118h1v1h-1zM912 108h1v1h-1zM912 98h1v1h-1zM912 88h1v1h-1zM912 78h1v1h-1zM912 68h1v1h-1zM912 58h1v1h-1zM912 48h1v1h-1zM912 38h1v1h-1zM912 28h1v1h-1zM912 18h1v1h-1zM912 8h1v1h-1zM922 569h1v1h-1zM922 559h1v1h-1zM922 549h1v1h-1zM922 539h1v1h-1zM922 529h1v1h-1zM922 519h1v1h-1zM922 509h1v1h-1zM922 499h1v1h-1zM922 489h1v1h-1zM922 479h1v1h-1zM922 469h1v1h-1zM922 459h1v1h-1zM922 449h1v1h-1zM922 439h1v1h-1zM922 428h1v1h-1zM922 418h1v1h-1zM922 408h1v1h-1zM922 398h1v1h-1zM922 388h1v1h-1zM922 378h1v1h-1zM922 368h1v1h-1zM922 358h1v1h-1zM922 348h1v1h-1zM922 338h1v1h-1zM922 328h1v1h-1zM922 318h1v1h-1zM922 308h1v1h-1zM922 298h1v1h-1zM922 288h1v1h-1zM922 278h1v1h-1zM922 268h1v1h-1zM922 258h1v1h-1zM922 248h1v1h-1zM922 238h1v1h-1zM922 228h1v1h-1zM922 218h1v1h-1zM922 208h1v1h-1zM922 198h1v1h-1zM922 188h1v1h-1zM922 178h1v1h-1zM922 168h1v1h-1zM922 158h1v1h-1zM922 148h1v1h-1zM922 138h1v1h-1zM922 128h1v1h-1zM922 118h1v1h-1zM922 108h1v1h-1zM922 98h1v1h-1zM922 88h1v1h-1zM922 78h1v1h-1zM922 68h1v1h-1zM922 58h1v1h-1zM922 48h1v1h-1zM922 38h1v1h-1zM922 28h1v1h-1zM922 18h1v1h-1zM922 8h1v1h-1zM932 569h1v1h-1zM932 559h1v1h-1zM932 549h1v1h-1zM932 539h1v1h-1zM932 529h1v1h-1zM932 519h1v1h-1zM932 509h1v1h-1zM932 499h1v1h-1zM932 489h1v1h-1zM932 479h1v1h-1zM932 469h1v1h-1zM932 459h1v1h-1zM932 449h1v1h-1zM932 439h1v1h-1zM932 428h1v1h-1zM932 418h1v1h-1zM932 408h1v1h-1zM932 398h1v1h-1zM932 388h1v1h-1zM932 378h1v1h-1zM932 368h1v1h-1zM932 358h1v1h-1zM932 348h1v1h-1zM932 338h1v1h-1zM932 328h1v1h-1zM932 318h1v1h-1zM932 308h1v1h-1zM932 298h1v1h-1zM932 288h1v1h-1zM932 278h1v1h-1zM932 268h1v1h-1zM932 258h1v1h-1zM932 248h1v1h-1zM932 238h1v1h-1zM932 228h1v1h-1zM932 218h1v1h-1zM932 208h1v1h-1zM932 198h1v1h-1zM932 188h1v1h-1zM932 178h1v1h-1zM932 168h1v1h-1zM932 158h1v1h-1zM932 148h1v1h-1zM932 138h1v1h-1zM932 128h1v1h-1zM932 118h1v1h-1zM932 108h1v1h-1zM932 98h1v1h-1zM932 88h1v1h-1zM932 78h1v1h-1zM932 68h1v1h-1zM932 58h1v1h-1zM932 48h1v1h-1zM932 38h1v1h-1zM932 28h1v1h-1zM932 18h1v1h-1zM932 8h1v1h-1zM942 569h1v1h-1zM942 559h1v1h-1zM942 549h1v1h-1zM942 539h1v1h-1zM942 529h1v1h-1zM942 519h1v1h-1zM942 509h1v1h-1zM942 499h1v1h-1zM942 489h1v1h-1zM942 479h1v1h-1zM942 469h1v1h-1zM942 459h1v1h-1zM942 449h1v1h-1zM942 439h1v1h-1zM942 428h1v1h-1zM942 418h1v1h-1zM942 408h1v1h-1zM942 398h1v1h-1zM942 388h1v1h-1zM942 378h1v1h-1zM942 368h1v1h-1zM942 358h1v1h-1zM942 348h1v1h-1zM942 338h1v1h-1zM942 328h1v1h-1zM942 318h1v1h-1zM942 308h1v1h-1zM942 298h1v1h-1zM942 288h1v1h-1zM942 278h1v1h-1zM942 268h1v1h-1zM942 258h1v1h-1zM942 248h1v1h-1zM942 238h1v1h-1zM942 228h1v1h-1zM942 218h1v1h-1zM942 208h1v1h-1zM942 198h1v1h-1zM942 188h1v1h-1zM942 178h1v1h-1zM942 168h1v1h-1zM942 158h1v1h-1zM942 148h1v1h-1zM942 138h1v1h-1zM942 128h1v1h-1zM942 118h1v1h-1zM942 108h1v1h-1zM942 98h1v1h-1zM942 88h1v1h-1zM942 78h1v1h-1zM942 68h1v1h-1zM942 58h1v1h-1zM942 48h1v1h-1zM942 38h1v1h-1zM942 28h1v1h-1zM942 18h1v1h-1zM942 8h1v1h-1zM953 569h1v1h-1zM953 559h1v1h-1zM953 549h1v1h-1zM953 539h1v1h-1zM953 529h1v1h-1zM953 519h1v1h-1zM953 509h1v1h-1zM953 499h1v1h-1zM953 489h1v1h-1zM953 479h1v1h-1zM953 469h1v1h-1zM953 459h1v1h-1zM953 449h1v1h-1zM953 439h1v1h-1zM953 428h1v1h-1zM953 418h1v1h-1zM953 408h1v1h-1zM953 398h1v1h-1zM953 388h1v1h-1zM953 378h1v1h-1zM953 368h1v1h-1zM953 358h1v1h-1zM953 348h1v1h-1zM953 338h1v1h-1zM953 328h1v1h-1zM953 318h1v1h-1zM953 308h1v1h-1zM953 298h1v1h-1zM953 288h1v1h-1zM953 278h1v1h-1zM953 268h1v1h-1zM953 258h1v1h-1zM953 248h1v1h-1zM953 238h1v1h-1zM953 228h1v1h-1zM953 218h1v1h-1zM953 208h1v1h-1zM953 198h1v1h-1zM953 188h1v1h-1zM953 178h1v1h-1zM953 168h1v1h-1zM953 158h1v1h-1zM953 148h1v1h-1zM953 138h1v1h-1zM953 128h1v1h-1zM953 118h1v1h-1zM953 108h1v1h-1zM953 98h1v1h-1zM953 88h1v1h-1zM953 78h1v1h-1zM953 68h1v1h-1zM953 58h1v1h-1zM953 48h1v1h-1zM953 38h1v1h-1zM953 28h1v1h-1zM953 18h1v1h-1zM953 8h1v1h-1zM963 569h1v1h-1zM963 559h1v1h-1zM963 549h1v1h-1zM963 539h1v1h-1zM963 529h1v1h-1zM963 519h1v1h-1zM963 509h1v1h-1zM963 499h1v1h-1zM963 489h1v1h-1zM963 479h1v1h-1zM963 469h1v1h-1zM963 459h1v1h-1zM963 449h1v1h-1zM963 439h1v1h-1zM963 428h1v1h-1zM963 418h1v1h-1zM963 408h1v1h-1zM963 398h1v1h-1zM963 388h1v1h-1zM963 378h1v1h-1zM963 368h1v1h-1zM963 358h1v1h-1zM963 348h1v1h-1zM963 338h1v1h-1zM963 328h1v1h-1zM963 318h1v1h-1zM963 308h1v1h-1zM963 298h1v1h-1zM963 288h1v1h-1zM963 278h1v1h-1zM963 268h1v1h-1zM963 258h1v1h-1zM963 248h1v1h-1zM963 238h1v1h-1zM963 228h1v1h-1zM963 218h1v1h-1zM963 208h1v1h-1zM963 198h1v1h-1zM963 188h1v1h-1zM963 178h1v1h-1zM963 168h1v1h-1zM963 158h1v1h-1zM963 148h1v1h-1zM963 138h1v1h-1zM963 128h1v1h-1zM963 118h1v1h-1zM963 108h1v1h-1zM963 98h1v1h-1zM963 88h1v1h-1zM963 78h1v1h-1zM963 68h1v1h-1zM963 58h1v1h-1zM963 48h1v1h-1zM963 38h1v1h-1zM963 28h1v1h-1zM963 18h1v1h-1zM963 8h1v1h-1zM973 569h1v1h-1zM973 559h1v1h-1zM973 549h1v1h-1zM973 539h1v1h-1zM973 529h1v1h-1zM973 519h1v1h-1zM973 509h1v1h-1zM973 499h1v1h-1zM973 489h1v1h-1zM973 479h1v1h-1zM973 469h1v1h-1zM973 459h1v1h-1zM973 449h1v1h-1zM973 439h1v1h-1zM973 428h1v1h-1zM973 418h1v1h-1zM973 408h1v1h-1zM973 398h1v1h-1zM973 388h1v1h-1zM973 378h1v1h-1zM973 368h1v1h-1zM973 358h1v1h-1zM973 348h1v1h-1zM973 338h1v1h-1zM973 328h1v1h-1zM973 318h1v1h-1zM973 308h1v1h-1zM973 298h1v1h-1zM973 288h1v1h-1zM973 278h1v1h-1zM973 268h1v1h-1zM973 258h1v1h-1zM973 248h1v1h-1zM973 238h1v1h-1zM973 228h1v1h-1zM973 218h1v1h-1zM973 208h1v1h-1zM973 198h1v1h-1zM973 188h1v1h-1zM973 178h1v1h-1zM973 168h1v1h-1zM973 158h1v1h-1zM973 148h1v1h-1zM973 138h1v1h-1zM973 128h1v1h-1zM973 118h1v1h-1zM973 108h1v1h-1zM973 98h1v1h-1zM973 88h1v1h-1zM973 78h1v1h-1zM973 68h1v1h-1zM973 58h1v1h-1zM973 48h1v1h-1zM973 38h1v1h-1zM973 28h1v1h-1zM973 18h1v1h-1zM973 8h1v1h-1zM983 569h1v1h-1zM983 559h1v1h-1zM983 549h1v1h-1zM983 539h1v1h-1zM983 529h1v1h-1zM983 519h1v1h-1zM983 509h1v1h-1zM983 499h1v1h-1zM983 489h1v1h-1zM983 479h1v1h-1zM983 469h1v1h-1zM983 459h1v1h-1zM983 449h1v1h-1zM983 439h1v1h-1zM983 428h1v1h-1zM983 418h1v1h-1zM983 408h1v1h-1zM983 398h1v1h-1zM983 388h1v1h-1zM983 378h1v1h-1zM983 368h1v1h-1zM983 358h1v1h-1zM983 348h1v1h-1zM983 338h1v1h-1zM983 328h1v1h-1zM983 318h1v1h-1zM983 308h1v1h-1zM983 298h1v1h-1zM983 288h1v1h-1zM983 278h1v1h-1zM983 268h1v1h-1zM983 258h1v1h-1zM983 248h1v1h-1zM983 238h1v1h-1zM983 228h1v1h-1zM983 218h1v1h-1zM983 208h1v1h-1zM983 198h1v1h-1zM983 188h1v1h-1zM983 178h1v1h-1zM983 168h1v1h-1zM983 158h1v1h-1zM983 148h1v1h-1zM983 138h1v1h-1zM983 128h1v1h-1zM983 118h1v1h-1zM983 108h1v1h-1zM983 98h1v1h-1zM983 88h1v1h-1zM983 78h1v1h-1zM983 68h1v1h-1zM983 58h1v1h-1zM983 48h1v1h-1zM983 38h1v1h-1zM983 28h1v1h-1zM983 18h1v1h-1zM983 8h1v1h-1zM993 569h1v1h-1zM993 559h1v1h-1zM993 549h1v1h-1zM993 539h1v1h-1zM993 529h1v1h-1zM993 519h1v1h-1zM993 509h1v1h-1zM993 499h1v1h-1zM993 489h1v1h-1zM993 479h1v1h-1zM993 469h1v1h-1zM993 459h1v1h-1zM993 449h1v1h-1zM993 439h1v1h-1zM993 428h1v1h-1zM993 418h1v1h-1zM993 408h1v1h-1zM993 398h1v1h-1zM993 388h1v1h-1zM993 378h1v1h-1zM993 368h1v1h-1zM993 358h1v1h-1zM993 348h1v1h-1zM993 338h1v1h-1zM993 328h1v1h-1zM993 318h1v1h-1zM993 308h1v1h-1zM993 298h1v1h-1zM993 288h1v1h-1zM993 278h1v1h-1zM993 268h1v1h-1zM993 258h1v1h-1zM993 248h1v1h-1zM993 238h1v1h-1zM993 228h1v1h-1zM993 218h1v1h-1zM993 208h1v1h-1zM993 198h1v1h-1zM993 188h1v1h-1zM993 178h1v1h-1zM993 168h1v1h-1zM993 158h1v1h-1zM993 148h1v1h-1zM993 138h1v1h-1zM993 128h1v1h-1zM993 118h1v1h-1zM993 108h1v1h-1zM993 98h1v1h-1zM993 88h1v1h-1zM993 78h1v1h-1zM993 68h1v1h-1zM993 58h1v1h-1zM993 48h1v1h-1zM993 38h1v1h-1zM993 28h1v1h-1zM993 18h1v1h-1zM993 8h1v1h-1zM1003 569h1v1h-1zM1003 559h1v1h-1zM1003 549h1v1h-1zM1003 539h1v1h-1zM1003 529h1v1h-1zM1003 519h1v1h-1zM1003 509h1v1h-1zM1003 499h1v1h-1zM1003 489h1v1h-1zM1003 479h1v1h-1zM1003 469h1v1h-1zM1003 459h1v1h-1zM1003 449h1v1h-1zM1003 439h1v1h-1zM1003 428h1v1h-1zM1003 418h1v1h-1zM1003 408h1v1h-1zM1003 398h1v1h-1zM1003 388h1v1h-1zM1003 378h1v1h-1zM1003 368h1v1h-1zM1003 358h1v1h-1zM1003 348h1v1h-1zM1003 338h1v1h-1zM1003 328h1v1h-1zM1003 318h1v1h-1zM1003 308h1v1h-1zM1003 298h1v1h-1zM1003 288h1v1h-1zM1003 278h1v1h-1zM1003 268h1v1h-1zM1003 258h1v1h-1zM1003 248h1v1h-1zM1003 238h1v1h-1zM1003 228h1v1h-1zM1003 218h1v1h-1zM1003 208h1v1h-1zM1003 198h1v1h-1zM1003 188h1v1h-1zM1003 178h1v1h-1zM1003 168h1v1h-1zM1003 158h1v1h-1zM1003 148h1v1h-1zM1003 138h1v1h-1zM1003 128h1v1h-1zM1003 118h1v1h-1zM1003 108h1v1h-1zM1003 98h1v1h-1zM1003 88h1v1h-1zM1003 78h1v1h-1zM1003 68h1v1h-1zM1003 58h1v1h-1zM1003 48h1v1h-1zM1003 38h1v1h-1zM1003 28h1v1h-1zM1003 18h1v1h-1zM1003 8h1v1h-1zM1013 569h1v1h-1zM1013 559h1v1h-1zM1013 549h1v1h-1zM1013 539h1v1h-1zM1013 529h1v1h-1zM1013 519h1v1h-1zM1013 509h1v1h-1zM1013 499h1v1h-1zM1013 489h1v1h-1zM1013 479h1v1h-1zM1013 469h1v1h-1zM1013 459h1v1h-1zM1013 449h1v1h-1zM1013 439h1v1h-1zM1013 428h1v1h-1zM1013 418h1v1h-1zM1013 408h1v1h-1zM1013 398h1v1h-1zM1013 388h1v1h-1zM1013 378h1v1h-1zM1013 368h1v1h-1zM1013 358h1v1h-1zM1013 348h1v1h-1zM1013 338h1v1h-1zM1013 328h1v1h-1zM1013 318h1v1h-1zM1013 308h1v1h-1zM1013 298h1v1h-1zM1013 288h1v1h-1zM1013 278h1v1h-1zM1013 268h1v1h-1zM1013 258h1v1h-1zM1013 248h1v1h-1zM1013 238h1v1h-1zM1013 228h1v1h-1zM1013 218h1v1h-1zM1013 208h1v1h-1zM1013 198h1v1h-1zM1013 188h1v1h-1zM1013 178h1v1h-1zM1013 168h1v1h-1zM1013 158h1v1h-1zM1013 148h1v1h-1zM1013 138h1v1h-1zM1013 128h1v1h-1zM1013 118h1v1h-1zM1013 108h1v1h-1zM1013 98h1v1h-1zM1013 88h1v1h-1zM1013 78h1v1h-1zM1013 68h1v1h-1zM1013 58h1v1h-1zM1013 48h1v1h-1zM1013 38h1v1h-1zM1013 28h1v1h-1zM1013 18h1v1h-1zM1013 8h1v1h-1zM1023 569h1v1h-1zM1023 559h1v1h-1zM1023 549h1v1h-1zM1023 539h1v1h-1zM1023 529h1v1h-1zM1023 519h1v1h-1zM1023 509h1v1h-1zM1023 499h1v1h-1zM1023 489h1v1h-1zM1023 479h1v1h-1zM1023 469h1v1h-1zM1023 459h1v1h-1zM1023 449h1v1h-1zM1023 439h1v1h-1zM1023 428h1v1h-1zM1023 418h1v1h-1zM1023 408h1v1h-1zM1023 398h1v1h-1zM1023 388h1v1h-1zM1023 378h1v1h-1zM1023 368h1v1h-1zM1023 358h1v1h-1zM1023 348h1v1h-1zM1023 338h1v1h-1zM1023 328h1v1h-1zM1023 318h1v1h-1zM1023 308h1v1h-1zM1023 298h1v1h-1zM1023 288h1v1h-1zM1023 278h1v1h-1zM1023 268h1v1h-1zM1023 258h1v1h-1zM1023 248h1v1h-1zM1023 238h1v1h-1zM1023 228h1v1h-1zM1023 218h1v1h-1zM1023 208h1v1h-1zM1023 198h1v1h-1zM1023 188h1v1h-1zM1023 178h1v1h-1zM1023 168h1v1h-1zM1023 158h1v1h-1zM1023 148h1v1h-1zM1023 138h1v1h-1zM1023 128h1v1h-1zM1023 118h1v1h-1zM1023 108h1v1h-1zM1023 98h1v1h-1zM1023 88h1v1h-1zM1023 78h1v1h-1zM1023 68h1v1h-1zM1023 58h1v1h-1zM1023 48h1v1h-1zM1023 38h1v1h-1zM1023 28h1v1h-1zM1023 18h1v1h-1zM1023 8h1v1h-1zM1033 569h1v1h-1zM1033 559h1v1h-1zM1033 549h1v1h-1zM1033 539h1v1h-1zM1033 529h1v1h-1zM1033 519h1v1h-1zM1033 509h1v1h-1zM1033 499h1v1h-1zM1033 489h1v1h-1zM1033 479h1v1h-1zM1033 469h1v1h-1zM1033 459h1v1h-1zM1033 449h1v1h-1zM1033 439h1v1h-1zM1033 428h1v1h-1zM1033 418h1v1h-1zM1033 408h1v1h-1zM1033 398h1v1h-1zM1033 388h1v1h-1zM1033 378h1v1h-1zM1033 368h1v1h-1zM1033 358h1v1h-1zM1033 348h1v1h-1zM1033 338h1v1h-1zM1033 328h1v1h-1zM1033 318h1v1h-1zM1033 308h1v1h-1zM1033 298h1v1h-1zM1033 288h1v1h-1zM1033 278h1v1h-1zM1033 268h1v1h-1zM1033 258h1v1h-1zM1033 248h1v1h-1zM1033 238h1v1h-1zM1033 228h1v1h-1zM1033 218h1v1h-1zM1033 208h1v1h-1zM1033 198h1v1h-1zM1033 188h1v1h-1zM1033 178h1v1h-1zM1033 168h1v1h-1zM1033 158h1v1h-1zM1033 148h1v1h-1zM1033 138h1v1h-1zM1033 128h1v1h-1zM1033 118h1v1h-1zM1033 108h1v1h-1zM1033 98h1v1h-1zM1033 88h1v1h-1zM1033 78h1v1h-1zM1033 68h1v1h-1zM1033 58h1v1h-1zM1033 48h1v1h-1zM1033 38h1v1h-1zM1033 28h1v1h-1zM1033 18h1v1h-1zM1033 8h1v1h-1zM1043 569h1v1h-1zM1043 559h1v1h-1zM1043 549h1v1h-1zM1043 539h1v1h-1zM1043 529h1v1h-1zM1043 519h1v1h-1zM1043 509h1v1h-1zM1043 499h1v1h-1zM1043 489h1v1h-1zM1043 479h1v1h-1zM1043 469h1v1h-1zM1043 459h1v1h-1zM1043 449h1v1h-1zM1043 439h1v1h-1zM1043 428h1v1h-1zM1043 418h1v1h-1zM1043 408h1v1h-1zM1043 398h1v1h-1zM1043 388h1v1h-1zM1043 378h1v1h-1zM1043 368h1v1h-1zM1043 358h1v1h-1zM1043 348h1v1h-1zM1043 338h1v1h-1zM1043 328h1v1h-1zM1043 318h1v1h-1zM1043 308h1v1h-1zM1043 298h1v1h-1zM1043 288h1v1h-1zM1043 278h1v1h-1zM1043 268h1v1h-1zM1043 258h1v1h-1zM1043 248h1v1h-1zM1043 238h1v1h-1zM1043 228h1v1h-1zM1043 218h1v1h-1zM1043 208h1v1h-1zM1043 198h1v1h-1zM1043 188h1v1h-1zM1043 178h1v1h-1zM1043 168h1v1h-1zM1043 158h1v1h-1zM1043 148h1v1h-1zM1043 138h1v1h-1zM1043 128h1v1h-1zM1043 118h1v1h-1zM1043 108h1v1h-1zM1043 98h1v1h-1zM1043 88h1v1h-1zM1043 78h1v1h-1zM1043 68h1v1h-1zM1043 58h1v1h-1zM1043 48h1v1h-1zM1043 38h1v1h-1zM1043 28h1v1h-1zM1043 18h1v1h-1zM1043 8h1v1h-1z" fill="#3e3e3e"/>
<path d="M1.5 378.5H41.5 M21.5 358.5V398.5" stroke="#6e0000" stroke-width="1"/><rect x="121.5" y="198.5" width="801.0" height="180.0" fill="none" stroke="#fff" stroke-width="2.4"/><path d="M101.5 288.5H942.5" stroke="#a04a4a" stroke-width="1.1" stroke-dasharray="18 7 1.5 6.5" stroke-dashoffset="1.3"/><path d="M221.5 178.5V398.5" stroke="#ff1a1a" stroke-width="1.5" stroke-dasharray="18 6.5 2 6.5" stroke-dashoffset="14.6"/><circle cx="221.5" cy="288.5" r="40" fill="none" stroke="#c65a58" stroke-width="2.5"/><rect x="216.5" y="243.5" width="10" height="10" fill="#0a7fa8" stroke="#6a8a9a" stroke-width="1"/><rect x="176.5" y="283.5" width="10" height="10" fill="#0a7fa8" stroke="#6a8a9a" stroke-width="1"/><rect x="256.5" y="283.5" width="10" height="10" fill="#0a7fa8" stroke="#6a8a9a" stroke-width="1"/><rect x="216.5" y="323.5" width="10" height="10" fill="#0a7fa8" stroke="#6a8a9a" stroke-width="1"/><circle cx="221.5" cy="288.5" r="5" fill="#0000b0" stroke="#7a7ab8" stroke-width="1"/><path d="M822.5 178.5V398.5" stroke="#ff1a1a" stroke-width="1.5" stroke-dasharray="18 6.5 2 6.5" stroke-dashoffset="14.6"/><circle cx="822.5" cy="288.5" r="40" fill="none" stroke="#c65a58" stroke-width="2.5"/><rect x="817.5" y="243.5" width="10" height="10" fill="#0a7fa8" stroke="#6a8a9a" stroke-width="1"/><rect x="777.5" y="283.5" width="10" height="10" fill="#0a7fa8" stroke="#6a8a9a" stroke-width="1"/><rect x="857.5" y="283.5" width="10" height="10" fill="#0a7fa8" stroke="#6a8a9a" stroke-width="1"/><rect x="817.5" y="323.5" width="10" height="10" fill="#0a7fa8" stroke="#6a8a9a" stroke-width="1"/><circle cx="822.5" cy="288.5" r="5" fill="#0000b0" stroke="#7a7ab8" stroke-width="1"/><rect x="96.5" y="283.5" width="10" height="10" fill="#0000a8" stroke="#8a8aa0" stroke-width="1"/><rect x="937.5" y="283.5" width="10" height="10" fill="#c4061e" stroke="#9a8a8a" stroke-width="1"/><circle cx="101.5" cy="278.5" r="4.5" fill="none" stroke="#c00000" stroke-width="1"/><path d="M96.5 278.5H106.5 M101.5 273.5V283.5" stroke="#c00000" stroke-width="1"/><text transform="translate(331.8 370.5) rotate(-90) scale(0.955 1)" font-family="Liberation Sans" font-size="29.4" fill="#fff" opacity="0.99">104.245.02.4B</text>
</svg>
<div class="a" style="left:1139px;top:155px;width:15px;height:577px;background:#f9f9f9"></div>
<div class="a" style="left:1143px;top:282px;width:8px;height:322px;background:#7f7f7f;border-radius:4px"></div>
<div class="a" style="left:95px;top:732px;width:1004px;height:16px;background:#f7f7f7"></div>
<div class="a" style="left:280px;top:736px;width:634px;height:8px;background:#7f7f7f;border-radius:4px"></div>
<div class="a" style="left:1099px;top:732px;width:55px;height:16px;background:#ececec"></div>
<div class="a" style="left:1099px;top:732px;width:54px;font-size:12px;line-height:16px;text-align:right;color:#222">1 &lt; 10</div>
<div class="a" style="left:72px;top:748px;width:1082px;height:2px;background:#c2c2c2"></div>
<div class="a" style="left:72px;top:750px;width:1066px;height:20px;background:#fff"></div>
<div class="a" style="left:1138px;top:750px;width:15px;height:20px;background:#f7f7f7"></div>
<div class="a" style="left:1142px;top:750px;width:8px;height:17px;background:#808080;border-radius:4px"></div>
<div class="a" style="left:77px;top:751px;font-size:13.2px;line-height:16px;color:#1616d0"><i>Parancs:</i> preferences</div>
<div class="a" style="left:72px;top:770px;width:1082px;height:1px;background:#c8c8c8"></div>
<div class="a" style="left:72px;top:771px;width:1082px;height:27px;background:#ececec"></div>
<div class="a" style="left:73px;top:777px;font-size:13px;line-height:16px;color:#222">Parancs:</div>
<div class="a" style="left:128px;top:776px;width:1000px;height:18px;background:#fff"></div>
<div class="a" style="left:1127px;top:772px;width:26px;height:26px;border:1px solid #c4c4c4;background:linear-gradient(#f6f6f6,#ececec)"></div>
<svg style="left:1133px;top:780px" width="14" height="11" viewBox="0 0 14 11" ><rect x="0.5" y="0.5" width="13" height="9" fill="#eee" stroke="#222"/><rect x="0.5" y="0.5" width="13" height="2.5" fill="#111"/><rect x="10" y="1.2" width="1.2" height="1.2" fill="#fff"/></svg>
<div class="a" style="left:1154px;top:107px;width:2px;height:691px;background:#c4c4c4"></div>
<div class="a" style="left:1156px;top:108px;width:298px;height:22px;background:linear-gradient(#ececec,#dedede)"></div>
<svg style="left:1157px;top:111px" width="32" height="14" viewBox="0 0 32 14" ><circle cx="7" cy="7" r="6.8" fill="#6c6c6c"/><path d="M4.3 4.3 L9.7 9.7 M9.7 4.3 L4.3 9.7" stroke="#fff" stroke-width="1.8"/><circle cx="25" cy="7" r="6.8" fill="#6c6c6c"/><rect x="21.5" y="6.5" width="5.5" height="4" fill="none" stroke="#fff" stroke-width="1"/><path d="M23.5 6.5 V4.5 H28.5 V8.5 H27" fill="none" stroke="#fff" stroke-width="1"/></svg>
<div class="a" style="left:1190px;top:112px;width:264px;text-align:center;font-size:11.8px;line-height:14px;color:#333;letter-spacing:0.1px">Réteglista</div>
<div class="a" style="left:1156px;top:130px;width:298px;height:27px;background:#b4b4b4"></div>
<div class="a" style="left:1157px;top:131px;width:57px;height:23px;background:linear-gradient(#eaeaea,#f6f6f6)"></div>
<div class="a" style="left:1217px;top:131px;width:57px;height:23px;background:linear-gradient(#eaeaea,#f6f6f6)"></div>
<div class="a" style="left:1277px;top:131px;width:57px;height:23px;background:linear-gradient(#eaeaea,#f6f6f6)"></div>
<div class="a" style="left:1337px;top:131px;width:57px;height:23px;background:linear-gradient(#eaeaea,#f6f6f6)"></div>
<div class="a" style="left:1397px;top:131px;width:55px;height:23px;background:linear-gradient(#eaeaea,#f6f6f6)"></div>
<svg style="left:1175px;top:136px" width="20" height="14" viewBox="0 0 20 14" ><path d="M2.3 6.8 C3.5 0.8 14.5 -0.2 17.3 5.3 L17.9 6.8 C15.5 12.8 5.5 13.2 2.8 8.3 Z" fill="#000"/><path d="M5 6.2 C6 3 14 3 15 6.2 C14.5 10.4 5.5 10.4 5 6.2 Z" fill="#fff"/><circle cx="10" cy="6.2" r="2.9" fill="#000"/><path d="M4.8 5.2 Q10 2.6 15.2 5.2" stroke="#000" stroke-width="1.6" fill="none"/></svg>
<svg style="left:1235px;top:136px" width="20" height="14" viewBox="0 0 20 14" ><path d="M2.3 6.8 C3.5 0.8 14.5 -0.2 17.3 5.3 L17.9 6.8 C15.5 12.8 5.5 13.2 2.8 8.3 Z" fill="#a8a8a8"/><path d="M5 6.2 C6 3 14 3 15 6.2 C14.5 10.4 5.5 10.4 5 6.2 Z" fill="#fff"/><circle cx="10" cy="6.2" r="2.9" fill="#a8a8a8"/><path d="M4.8 5.2 Q10 2.6 15.2 5.2" stroke="#a8a8a8" stroke-width="1.6" fill="none"/></svg>
<svg style="left:1297px;top:135px" width="16" height="16" viewBox="0 0 16 16" ><path d="M8 1.5 V14.5 M1.5 8 H14.5" stroke="#e00" stroke-width="3.2"/></svg>
<svg style="left:1357px;top:135px" width="16" height="16" viewBox="0 0 16 16" ><path d="M1.5 8 H14.5" stroke="#e00" stroke-width="3.2"/></svg>
<svg style="left:1416px;top:134px" width="18" height="18" viewBox="0 0 18 18" ><g transform="rotate(-43 9 9)"><rect x="3" y="7.5" width="14" height="3" fill="#e8a830" stroke="#8a5a10" stroke-width=".6"/><path d="M3 7.5 L-0.5 9 L3 10.5 Z" fill="#e8c890" stroke="#8a5a10" stroke-width=".5"/><rect x="15.5" y="7.3" width="2.8" height="3.4" rx="1" fill="#e02020"/></g></svg>
<div class="a" style="left:1156px;top:157px;width:298px;height:641px;background:#fff"></div>
<div class="a" style="left:1161px;top:163px;width:16px;height:9px;background:#fff;border:1px solid #111"></div>
<div class="a" style="left:1183px;top:159px;font-size:13.3px;line-height:16px;color:#111">0</div>
<svg style="left:1413px;top:160px" width="20" height="14" viewBox="0 0 20 14" ><path d="M2.3 6.8 C3.5 0.8 14.5 -0.2 17.3 5.3 L17.9 6.8 C15.5 12.8 5.5 13.2 2.8 8.3 Z" fill="#000"/><path d="M5 6.2 C6 3 14 3 15 6.2 C14.5 10.4 5.5 10.4 5 6.2 Z" fill="#fff"/><circle cx="10" cy="6.2" r="2.9" fill="#000"/><path d="M4.8 5.2 Q10 2.6 15.2 5.2" stroke="#000" stroke-width="1.6" fill="none"/></svg>
<svg style="left:1438px;top:158px" width="14" height="18" viewBox="0 0 14 18" ><path d="M3.4 8.5 V5.5 C3.4 1.8 10.6 1.8 10.6 5.5 V8.5" fill="none" stroke="#bdbdbd" stroke-width="1.3"/><rect x="2.2" y="8.4" width="9.6" height="7.2" fill="#bdbdbd"/></svg>
<div class="a" style="left:1161px;top:183px;width:16px;height:9px;background:#f00;border:1px solid #111"></div>
<div class="a" style="left:1183px;top:179px;font-size:13.3px;line-height:16px;color:#111">Központ</div>
<svg style="left:1413px;top:180px" width="20" height="14" viewBox="0 0 20 14" ><path d="M2.3 6.8 C3.5 0.8 14.5 -0.2 17.3 5.3 L17.9 6.8 C15.5 12.8 5.5 13.2 2.8 8.3 Z" fill="#000"/><path d="M5 6.2 C6 3 14 3 15 6.2 C14.5 10.4 5.5 10.4 5 6.2 Z" fill="#fff"/><circle cx="10" cy="6.2" r="2.9" fill="#000"/><path d="M4.8 5.2 Q10 2.6 15.2 5.2" stroke="#000" stroke-width="1.6" fill="none"/></svg>
<svg style="left:1438px;top:178px" width="14" height="18" viewBox="0 0 14 18" ><path d="M3.4 8.5 V5.5 C3.4 1.8 10.6 1.8 10.6 5.5 V8.5" fill="none" stroke="#bdbdbd" stroke-width="1.3"/><rect x="2.2" y="8.4" width="9.6" height="7.2" fill="#bdbdbd"/></svg>
<div class="a" style="left:1161px;top:203px;width:16px;height:9px;background:#fff;border:1px solid #111"></div>
<div class="a" style="left:1183px;top:199px;font-size:13.3px;line-height:16px;color:#111">Látható</div>
<svg style="left:1413px;top:200px" width="20" height="14" viewBox="0 0 20 14" ><path d="M2.3 6.8 C3.5 0.8 14.5 -0.2 17.3 5.3 L17.9 6.8 C15.5 12.8 5.5 13.2 2.8 8.3 Z" fill="#000"/><path d="M5 6.2 C6 3 14 3 15 6.2 C14.5 10.4 5.5 10.4 5 6.2 Z" fill="#fff"/><circle cx="10" cy="6.2" r="2.9" fill="#000"/><path d="M4.8 5.2 Q10 2.6 15.2 5.2" stroke="#000" stroke-width="1.6" fill="none"/></svg>
<svg style="left:1438px;top:198px" width="14" height="18" viewBox="0 0 14 18" ><path d="M3.4 8.5 V5.5 C3.4 1.8 10.6 1.8 10.6 5.5 V8.5" fill="none" stroke="#bdbdbd" stroke-width="1.3"/><rect x="2.2" y="8.4" width="9.6" height="7.2" fill="#bdbdbd"/></svg>
<div class="a" style="left:1161px;top:223px;width:16px;height:9px;background:#000;border:1px solid #111"></div>
<div class="a" style="left:1183px;top:219px;font-size:13.3px;line-height:16px;color:#111">Rejtett</div>
<svg style="left:1413px;top:220px" width="20" height="14" viewBox="0 0 20 14" ><path d="M2.3 6.8 C3.5 0.8 14.5 -0.2 17.3 5.3 L17.9 6.8 C15.5 12.8 5.5 13.2 2.8 8.3 Z" fill="#000"/><path d="M5 6.2 C6 3 14 3 15 6.2 C14.5 10.4 5.5 10.4 5 6.2 Z" fill="#fff"/><circle cx="10" cy="6.2" r="2.9" fill="#000"/><path d="M4.8 5.2 Q10 2.6 15.2 5.2" stroke="#000" stroke-width="1.6" fill="none"/></svg>
<svg style="left:1438px;top:218px" width="14" height="18" viewBox="0 0 14 18" ><path d="M3.4 8.5 V5.5 C3.4 1.8 10.6 1.8 10.6 5.5 V8.5" fill="none" stroke="#bdbdbd" stroke-width="1.3"/><rect x="2.2" y="8.4" width="9.6" height="7.2" fill="#bdbdbd"/></svg>
<svg style="left:1391px;top:198px" width="18" height="18" viewBox="0 0 18 18" ><g transform="rotate(-43 9 9)"><rect x="3" y="7.5" width="14" height="3" fill="#e8a830" stroke="#8a5a10" stroke-width=".6"/><path d="M3 7.5 L-0.5 9 L3 10.5 Z" fill="#e8c890" stroke="#8a5a10" stroke-width=".5"/><rect x="15.5" y="7.3" width="2.8" height="3.4" rx="1" fill="#e02020"/></g></svg>
<div class="a" style="left:1454px;top:107px;width:1px;height:691px;background:#bdbdbd"></div>
<div class="a" style="left:1455px;top:107px;width:45px;height:691px;background:linear-gradient(90deg,#efefef,#dedede 45%,#c6c6c6 94%,#b0b0b0)"></div>
<div class="a" style="left:1463px;top:116px;width:2px;height:2px;background:#a0a0a0"></div>
<div class="a" style="left:1469px;top:116px;width:2px;height:2px;background:#a0a0a0"></div>
<div class="a" style="left:1475px;top:116px;width:2px;height:2px;background:#a0a0a0"></div>
<div class="a" style="left:1481px;top:116px;width:2px;height:2px;background:#a0a0a0"></div>
<div class="a" style="left:1487px;top:116px;width:2px;height:2px;background:#a0a0a0"></div>
<div class="sel" style="left:1456px;top:120px;width:43px;height:43px"></div>
<div class="sel" style="left:1456px;top:418px;width:44px;height:42px"></div>
<div class="a" style="left:1456px;top:261px;width:44px;border-top:1px dotted #666"></div>
<div class="a" style="left:1456px;top:409px;width:44px;border-top:1px dotted #666"></div>
<svg style="left:1463px;top:127px" width="28" height="28" viewBox="0 0 28 28" ><rect x="0.5" y="0.5" width="27" height="27" fill="#fff" stroke="#222"/><rect x="0.5" y="0.5" width="27" height="4" fill="#000"/><rect x="1.3" y="1.2" width="3.3" height="3.1" fill="#fff"/><path d="M8 10 L17 7 V19 L8 22 Z" fill="#ddd" stroke="#333" stroke-width=".8"/><path d="M10 12 L20 8.5 V20 L10 23.5 Z" fill="#eee" stroke="#333" stroke-width=".8"/><path d="M14 19 L17 12 L18 18 Z" fill="none" stroke="#e33" stroke-width=".8"/></svg>
<svg style="left:1463px;top:174px" width="28" height="28" viewBox="0 0 28 28" ><rect x="0.5" y="0.5" width="27" height="27" fill="#fff" stroke="#222"/><rect x="0.5" y="0.5" width="27" height="4" fill="#000"/><rect x="1.3" y="1.2" width="3.3" height="3.1" fill="#fff"/><rect x="6" y="9" width="11" height="9" fill="#f5e6b0" stroke="#555" stroke-width=".8"/><circle cx="16" cy="18" r="5" fill="#f5e6b0" stroke="#555" stroke-width=".8"/></svg>
<svg style="left:1463px;top:220px" width="28" height="28" viewBox="0 0 28 28" ><rect x="0.5" y="0.5" width="27" height="27" fill="#fff" stroke="#222"/><rect x="0.5" y="0.5" width="27" height="4" fill="#000"/><rect x="1.3" y="1.2" width="3.3" height="3.1" fill="#fff"/><rect x="6" y="11" width="17" height="11" rx="2" fill="#f4f4f4" stroke="#b8c8e0"/></svg>
<svg style="left:1463px;top:276px" width="28" height="28" viewBox="0 0 28 28" ><rect x="0.5" y="0.5" width="27" height="27" fill="#fff" stroke="#222"/><rect x="0.5" y="0.5" width="27" height="4" fill="#000"/><rect x="1.3" y="1.2" width="3.3" height="3.1" fill="#fff"/><rect x="4" y="9" width="4" height="3" fill="#000"/><rect x="4" y="15" width="4" height="3" fill="#000"/><rect x="4" y="21" width="4" height="3" fill="#000"/><rect x="10" y="9" width="14" height="3" fill="none" stroke="#333" stroke-width=".7"/><rect x="10" y="15" width="14" height="3" fill="none" stroke="#333" stroke-width=".7"/><rect x="10" y="21" width="14" height="3" fill="none" stroke="#333" stroke-width=".7"/></svg>
<svg style="left:1463px;top:322px" width="28" height="28" viewBox="0 0 28 28" ><rect x="0.5" y="0.5" width="27" height="27" fill="#fff" stroke="#222"/><rect x="0.5" y="0.5" width="27" height="4" fill="#000"/><rect x="1.3" y="1.2" width="3.3" height="3.1" fill="#fff"/><path d="M6.5 9.5 Q14 16 21.5 9.5 L16 16 V23.5 L12.5 21.5 V16 Z" fill="#a8a8a8" stroke="#555" stroke-width=".7"/><ellipse cx="14" cy="9.3" rx="7.5" ry="1.8" fill="#666"/><path d="M13 16 V21" stroke="#ddd" stroke-width="1"/></svg>
<svg style="left:1463px;top:368px" width="28" height="28" viewBox="0 0 28 28" ><rect x="0.5" y="0.5" width="27" height="27" fill="#fff" stroke="#222"/><rect x="0.5" y="0.5" width="27" height="4" fill="#000"/><rect x="1.3" y="1.2" width="3.3" height="3.1" fill="#fff"/><path d="M6 10 L12 14 V21 L6 24.5 Z" fill="#eee" stroke="#333" stroke-width=".9"/><rect x="12" y="14" width="9.5" height="7" rx="1" fill="#8a8a8a" stroke="#333" stroke-width=".7"/><path d="M14 14 V21 M16.5 14 V21 M19 14 V21" stroke="#bbb" stroke-width=".6"/><path d="M3 17.5 H25" stroke="#e88" stroke-dasharray="1.5 1"/></svg>
<svg style="left:1463px;top:424px" width="28" height="28" viewBox="0 0 28 28" ><rect x="0.5" y="0.5" width="27" height="27" fill="#fff" stroke="#222"/><rect x="0.5" y="0.5" width="27" height="4" fill="#000"/><rect x="1.3" y="1.2" width="3.3" height="3.1" fill="#fff"/><path d="M3 8 H13 M3 11 H14 M3 14 H13 M3 17 H14" stroke="#888" stroke-width=".8"/><path d="M1 23 H27" stroke="#333" stroke-width=".8"/><path d="M3 25 H5 M11 25 H25" stroke="#333" stroke-width="1"/></svg>
<svg style="left:1463px;top:471px" width="28" height="28" viewBox="0 0 28 28" ><rect x="0.5" y="0.5" width="27" height="27" fill="#fff" stroke="#222"/><rect x="0.5" y="0.5" width="27" height="4" fill="#000"/><rect x="1.3" y="1.2" width="3.3" height="3.1" fill="#fff"/><rect x="7" y="9" width="14" height="16" rx="1" fill="#c98a2d" stroke="#8a5a18" stroke-width=".8"/><rect x="9" y="11" width="10" height="12" fill="#f4f4f4"/><rect x="11" y="7.5" width="6" height="3" fill="#999" stroke="#555" stroke-width=".6"/></svg>
<div class="a" style="left:0;top:798px;width:1500px;height:46px;background:#dcdcdc;border-top:1px solid #c8c8c8"></div>
<div class="a" style="left:2px;top:807px;font-size:10px;letter-spacing:0.1px;line-height:12px;color:#1c1c1c">102.0074,-14.8076</div>
<div class="a" style="left:2px;top:827px;font-size:10px;letter-spacing:0.1px;line-height:12px;color:#1c1c1c">@94.0074,-24.8076</div>
<div class="a" style="left:253px;top:802px;width:1px;height:40px;background:#888"></div>
<div class="a" style="left:256px;top:807px;font-size:10px;letter-spacing:0.1px;line-height:12px;color:#1c1c1c">103.0766&lt;352°</div>
<div class="a" style="left:256px;top:827px;font-size:10px;letter-spacing:0.1px;line-height:12px;color:#1c1c1c">@97.2256&lt;345°</div>
<div class="a" style="left:506px;top:819px;width:6px;height:6px;border-radius:3px;background:#c4c4c4"></div>
<div class="a" style="left:500px;top:811px;width:199px;text-align:right;font-size:10px;letter-spacing:0.1px;line-height:12px;color:#1c1c1c;line-height:11px">Egység vagy régió kiválasztása<br>Entitás vagy hivatkozás áthelyezése</div>
<svg style="left:716px;top:805px" width="20" height="32" viewBox="0 0 20 32" ><path d="M10 1 C4 1 1.2 5 1.2 10 V22 C1.2 27.5 5 30.5 10 30.5 C15 30.5 18.8 27.5 18.8 22 V10 C18.8 5 16 1 10 1 Z" fill="#fff" stroke="#3a3a3a" stroke-width="1"/><path d="M1.2 14.6 Q10 12.6 18.8 14.6" fill="none" stroke="#3a3a3a" stroke-width="1.5"/><path d="M10 1 V3 M10 10.6 V13.6" stroke="#3a3a3a" stroke-width="1.2"/><rect x="8.3" y="2.9" width="3.4" height="7.7" rx="1.7" fill="#fff" stroke="#3a3a3a" stroke-width="1"/></svg>
<div class="a" style="left:940px;top:819px;width:6px;height:6px;border-radius:3px;background:#c4c4c4"></div>
<div class="a" style="left:949px;top:811px;font-size:10px;letter-spacing:0.1px;line-height:12px;color:#1c1c1c;line-height:11px">Kiválasztott szervezetek:<br>3 Entitások a oldalon 2 réteg.</div>
<div class="a" style="left:1269px;top:819px;width:6px;height:6px;border-radius:3px;background:#c4c4c4"></div>
<svg style="left:1090px;top:635px" width="100" height="100" viewBox="0 0 100 100"><defs><radialGradient id="rg" cx="48" cy="47" r="39.5" gradientUnits="userSpaceOnUse">
<stop offset="0.80" stop-color="#4a5f78" stop-opacity="0"/><stop offset="0.875" stop-color="#5a7088" stop-opacity=".38"/><stop offset="0.94" stop-color="#7088a2" stop-opacity=".7"/><stop offset="0.985" stop-color="#8aa2bc" stop-opacity=".72"/><stop offset="1" stop-color="#9ab0c8" stop-opacity=".25"/></radialGradient></defs>
<circle cx="48" cy="47" r="39.5" fill="url(#rg)"/>
<path d="M48.5 47.5 L48.5 69.5 L53.3 64.8 L57.3 73.8 L60.3 72.5 L56.5 63.6 L63.2 63.2 Z" fill="#fff" stroke="#000" stroke-width="1.2" stroke-linejoin="round"/></svg></body></html>
